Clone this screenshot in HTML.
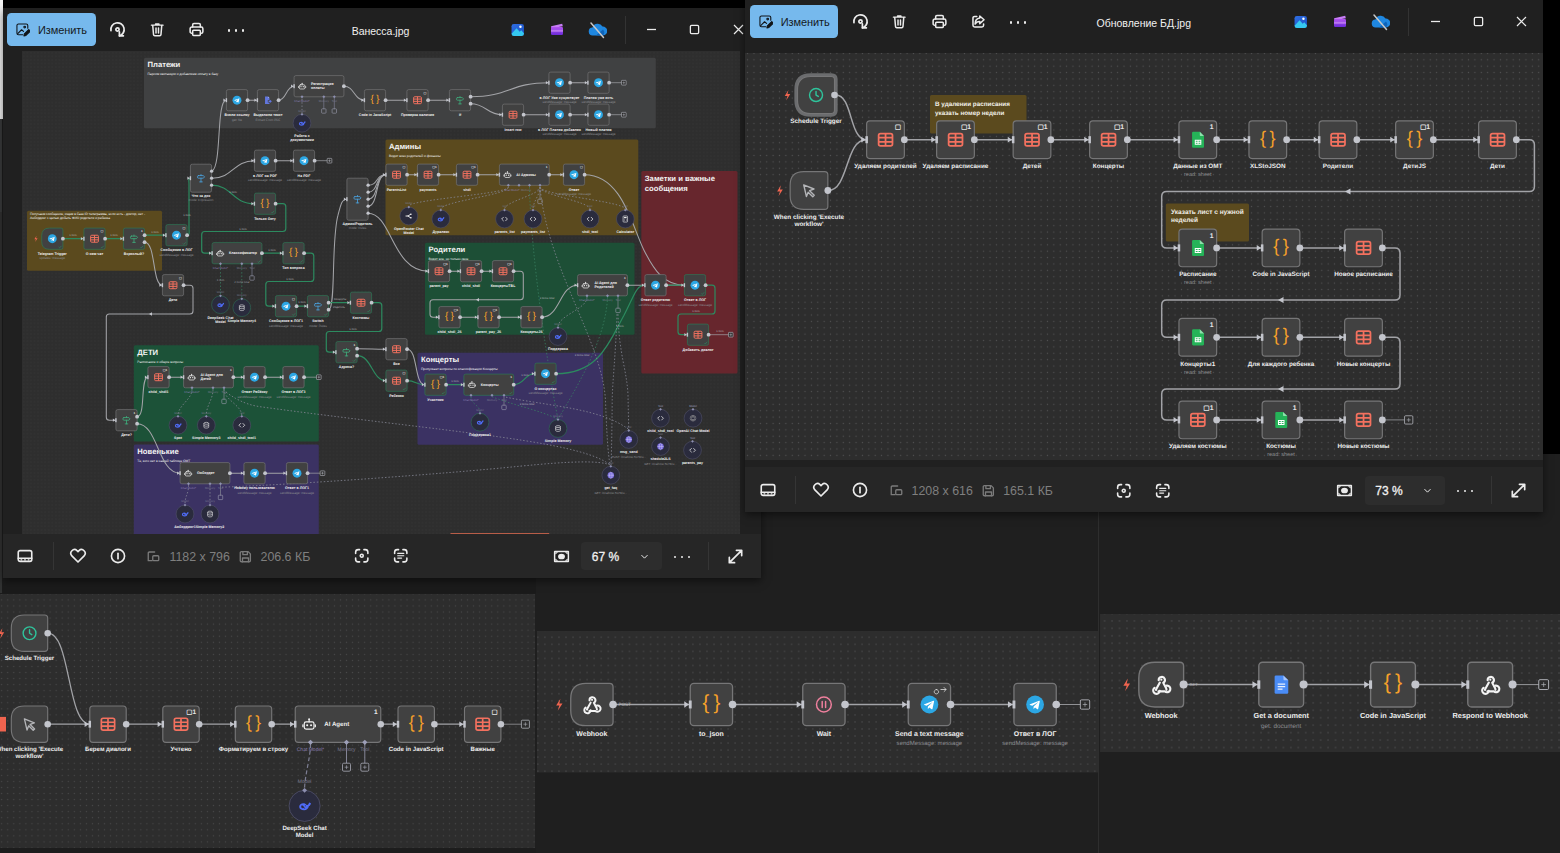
<!DOCTYPE html><html lang="ru"><head><meta charset="utf-8"><title>Фотографии</title><style>
html,body{margin:0;padding:0;background:#1f1f1f}
body{width:1560px;height:853px;position:relative;overflow:hidden;font-family:"Liberation Sans",sans-serif}
div{box-sizing:border-box}
svg text{text-rendering:geometricPrecision}
.abs{position:absolute}
.btn{position:absolute;width:88.500px;height:33px;border-radius:4.500px;background:#76b9ed}
.btn span{position:absolute;left:31px;top:10.800px;font-size:11px;color:#15191d;letter-spacing:-.1px}
.ttl{position:absolute;width:200px;text-align:center;font-size:10.500px;color:#f0f0f0;line-height:16px;white-space:nowrap}
.tb{position:absolute;font-size:12.400px;color:#7f7f7f;line-height:16px;white-space:nowrap}
.zb{position:absolute;height:28.600px;border-radius:4px;background:#2d2d2d}
.zb span{position:absolute;left:10.500px;top:7px;font-size:12px;-webkit-text-stroke:.3px #f0f0f0;color:#f0f0f0;line-height:16px;white-space:nowrap}
</style></head><body><div class="abs" style="left:0;top:578px;width:535.500px;height:16px;background:#1b1b1b"></div><div class="abs" style="left:0;top:848.300px;width:535.500px;height:5px;background:#1d1d1d"></div><svg style="position:absolute;left:0px;top:593.8px;width:535px;height:254.5px;overflow:hidden" viewBox="0 593.8 535 254.5"><defs><pattern id="pb1" x="397.98" y="596.68" width="6.05" height="6.05" patternUnits="userSpaceOnUse"><circle cx="3.02" cy="3.02" r="0.62" fill="#4a4a4b"/></pattern></defs><rect x="0" y="593.8" width="535" height="254.5" fill="#2d2d2d"/><rect x="0" y="593.8" width="535" height="254.5" fill="url(#pb1)"/><path d="M47.8 633 C71.01 633 66.79 724 90 724" fill="none" stroke="#a2a3a7" stroke-width="1.25" stroke-linecap="round" stroke-linejoin="round"/><path d="M47.800 724 H90" fill="none" stroke="#a2a3a7" stroke-width="1.25" stroke-linecap="round" stroke-linejoin="round"/><path d="M126.2 724 H162.8" fill="none" stroke="#a2a3a7" stroke-width="1.25" stroke-linecap="round" stroke-linejoin="round"/><path d="M199.2 724 H235.3" fill="none" stroke="#a2a3a7" stroke-width="1.25" stroke-linecap="round" stroke-linejoin="round"/><path d="M271.7 724 H294.87" fill="none" stroke="#a2a3a7" stroke-width="1.25" stroke-linecap="round" stroke-linejoin="round"/><path d="M381.13 724 H398" fill="none" stroke="#a2a3a7" stroke-width="1.25" stroke-linecap="round" stroke-linejoin="round"/><path d="M434.4 724 H464.5" fill="none" stroke="#a2a3a7" stroke-width="1.25" stroke-linecap="round" stroke-linejoin="round"/><path d="M500.9 724 H521.4" fill="none" stroke="#a2a3a7" stroke-width="0.73" stroke-linecap="round" stroke-linejoin="round"/><rect x="521.4" y="720" width="8.01" height="8.01" rx="1" fill="#2d2d2d" stroke="#b9bbc2" stroke-width="0.73"/><path d="M523.8 724 h3.2 M525.4 722.4 v3.2" fill="none" stroke="#b9bbc2" stroke-width="0.55" stroke-linecap="round" stroke-linejoin="round"/><path d="M310.5 744 C310.5 757.5 304.6 775.5 304.6 789" fill="none" stroke="#7d7e93" stroke-width="1.2" stroke-dasharray="4 2.6" stroke-linecap="butt" stroke-linejoin="round"/><path d="M346.5 744 V763" fill="none" stroke="#8d8fa3" stroke-width="0.9" stroke-linecap="round" stroke-linejoin="round"/><rect x="342.5" y="763" width="8" height="8" rx="1.200" fill="#2d2d2d" stroke="#a9abb8" stroke-width="0.800"/><path d="M345 767 h3 M346.5 765.500 v3" fill="none" stroke="#a9abb8" stroke-width="0.6" stroke-linecap="round" stroke-linejoin="round"/><path d="M364.8 744 V763" fill="none" stroke="#8d8fa3" stroke-width="0.9" stroke-linecap="round" stroke-linejoin="round"/><rect x="360.8" y="763" width="8" height="8" rx="1.200" fill="#2d2d2d" stroke="#a9abb8" stroke-width="0.800"/><path d="M363.3 767 h3 M364.8 765.500 v3" fill="none" stroke="#a9abb8" stroke-width="0.6" stroke-linecap="round" stroke-linejoin="round"/><rect x="0" y="716.700" width="6" height="14.600" fill="#f0644f"/><path d="M24.4 614.8 H44.61 Q47.7 614.8 47.7 617.89 V648.11 Q47.7 651.2 44.61 651.2 H24.4 Q11.3 651.2 11.3 638.1 V627.9 Q11.3 614.8 24.4 614.8 Z" fill="#414141" stroke="#767677" stroke-width="1.13"/><path fill="#f0644f" d="M2.38 628 l-3.64 5.92 h2.73 l-1.36 4.55 l4.09 -6.37 h-2.73 z"/><g transform="translate(21.86 625.36) scale(0.64)"><g fill="none" stroke="#2fc39b" stroke-width="2.200" stroke-linecap="round" stroke-linejoin="round"><circle cx="12" cy="12" r="10"/><path d="M12 6.500V12l3.500 2.200"/></g></g><circle cx="47.7" cy="633" r="3.28" fill="#c3c5cc"/><text x="29.5" y="659.52" text-anchor="middle" font-family='"Liberation Sans", sans-serif' font-size="6.1" font-weight="bold" fill="#ededed">Schedule Trigger</text><path d="M24.4 705.8 H44.61 Q47.7 705.8 47.7 708.89 V739.11 Q47.7 742.2 44.61 742.2 H24.4 Q11.3 742.2 11.3 729.1 V718.9 Q11.3 705.8 24.4 705.8 Z" fill="#414141" stroke="#767677" stroke-width="1.13"/><path fill="#f0644f" d="M2.38 719 l-3.64 5.92 h2.73 l-1.36 4.55 l4.09 -6.37 h-2.73 z"/><g transform="translate(21.86 716.36) scale(0.64)"><path fill="none" stroke="#b4b5b8" stroke-width="2.100" stroke-linejoin="round" stroke-linecap="round" d="M4 3.500l15.500 6.200-6.600 2.600 7 7-2.200 2.200-7-7-2.600 6.600z"/></g><circle cx="47.7" cy="724" r="3.28" fill="#c3c5cc"/><text x="29.5" y="750.52" text-anchor="middle" font-family='"Liberation Sans", sans-serif' font-size="6.1" font-weight="bold" fill="#ededed">When clicking 'Execute</text><text x="29.5" y="757.53" text-anchor="middle" font-family='"Liberation Sans", sans-serif' font-size="6.1" font-weight="bold" fill="#ededed">workflow'</text><rect x="89.8" y="705.8" width="36.4" height="36.4" rx="3.09" fill="#414141" stroke="#767677" stroke-width="1.13"/><g transform="translate(99.59 715.59) scale(0.7)"><g fill="none" stroke="#f4715f" stroke-width="2.4" stroke-linejoin="round"><rect x="2.5" y="3.5" width="19" height="17" rx="2.6"/><path d="M12 3.5v17M2.500 9.200h19M2.500 14.800h19"/></g></g><path fill="#c3c5cc" d="M84.61 721.27 l4.09 2.73 l-4.09 2.73 z"/><rect x="88.57" y="720.59" width="2.46" height="6.83" fill="#c3c5cc"/><circle cx="126.2" cy="724" r="3.28" fill="#c3c5cc"/><text x="108" y="750.52" text-anchor="middle" font-family='"Liberation Sans", sans-serif' font-size="6.1" font-weight="bold" fill="#ededed">Берем диалоги</text><rect x="162.8" y="705.8" width="36.4" height="36.4" rx="3.09" fill="#414141" stroke="#767677" stroke-width="1.13"/><g transform="translate(172.59 715.59) scale(0.7)"><g fill="none" stroke="#f4715f" stroke-width="2.4" stroke-linejoin="round"><rect x="2.5" y="3.5" width="19" height="17" rx="2.6"/><path d="M12 3.5v17M2.500 9.200h19M2.500 14.800h19"/></g></g><path fill="#c3c5cc" d="M157.61 721.27 l4.09 2.73 l-4.09 2.73 z"/><rect x="161.57" y="720.59" width="2.46" height="6.83" fill="#c3c5cc"/><circle cx="199.2" cy="724" r="3.28" fill="#c3c5cc"/><text x="196.11" y="713.99" text-anchor="end" font-family='"Liberation Sans", sans-serif' font-size="6.55" font-weight="bold" fill="#e6e6e6">▢1</text><text x="181" y="750.52" text-anchor="middle" font-family='"Liberation Sans", sans-serif' font-size="6.1" font-weight="bold" fill="#ededed">Учтено</text><rect x="235.3" y="705.8" width="36.4" height="36.4" rx="3.09" fill="#414141" stroke="#767677" stroke-width="1.13"/><g transform="translate(245.86 716.36) scale(0.64)"><text x="14.700" y="17.800" text-anchor="middle" font-family=""Liberation Sans", sans-serif" font-size="27.5" fill="#f5a02a" letter-spacing="5.4">{}</text></g><path fill="#c3c5cc" d="M230.11 721.27 l4.09 2.73 l-4.09 2.73 z"/><rect x="234.07" y="720.59" width="2.46" height="6.83" fill="#c3c5cc"/><circle cx="271.7" cy="724" r="3.28" fill="#c3c5cc"/><text x="253.5" y="750.52" text-anchor="middle" font-family='"Liberation Sans", sans-serif' font-size="6.1" font-weight="bold" fill="#ededed">Форматируем в строку</text><rect x="295.23" y="705.8" width="85.54" height="36.4" rx="3.09" fill="#414141" stroke="#767677" stroke-width="1.13"/><g transform="translate(301.8 716.74) scale(0.61)"><g fill="none" stroke="#f2f2f2" stroke-width="2" stroke-linejoin="round" stroke-linecap="round"><rect x="4" y="8" width="16" height="12" rx="3"/><path d="M12 8V4.500M1.800 13v3M22.200 13v3"/></g><circle cx="12" cy="3.600" r="1.600" fill="#f2f2f2"/><circle cx="8.800" cy="13.500" r="1.700" fill="#f2f2f2"/><circle cx="15.200" cy="13.500" r="1.700" fill="#f2f2f2"/></g><path fill="#c3c5cc" d="M290.04 721.27 l4.09 2.73 l-4.09 2.73 z"/><rect x="294" y="720.59" width="2.46" height="6.83" fill="#c3c5cc"/><circle cx="380.77" cy="724" r="3.28" fill="#c3c5cc"/><text x="377.68" y="713.99" text-anchor="end" font-family='"Liberation Sans", sans-serif' font-size="6.55" font-weight="bold" fill="#e6e6e6">1</text><text x="324.35" y="726.13" font-family='"Liberation Sans", sans-serif' font-size="6.1" font-weight="bold" fill="#ededed">AI Agent</text><rect x="398" y="705.8" width="36.4" height="36.4" rx="3.09" fill="#414141" stroke="#767677" stroke-width="1.13"/><g transform="translate(408.56 716.36) scale(0.64)"><text x="14.700" y="17.800" text-anchor="middle" font-family=""Liberation Sans", sans-serif" font-size="27.5" fill="#f5a02a" letter-spacing="5.4">{}</text></g><path fill="#c3c5cc" d="M392.81 721.27 l4.09 2.73 l-4.09 2.73 z"/><rect x="396.77" y="720.59" width="2.46" height="6.83" fill="#c3c5cc"/><circle cx="434.4" cy="724" r="3.28" fill="#c3c5cc"/><text x="416.2" y="750.52" text-anchor="middle" font-family='"Liberation Sans", sans-serif' font-size="6.1" font-weight="bold" fill="#ededed">Code in JavaScript</text><rect x="464.5" y="705.8" width="36.4" height="36.4" rx="3.09" fill="#414141" stroke="#767677" stroke-width="1.13"/><g transform="translate(474.29 715.59) scale(0.7)"><g fill="none" stroke="#f4715f" stroke-width="2.4" stroke-linejoin="round"><rect x="2.5" y="3.5" width="19" height="17" rx="2.6"/><path d="M12 3.5v17M2.500 9.200h19M2.500 14.800h19"/></g></g><path fill="#c3c5cc" d="M459.31 721.27 l4.09 2.73 l-4.09 2.73 z"/><rect x="463.27" y="720.59" width="2.46" height="6.83" fill="#c3c5cc"/><circle cx="500.9" cy="724" r="3.28" fill="#c3c5cc"/><text x="497.81" y="713.99" text-anchor="end" font-family='"Liberation Sans", sans-serif' font-size="6.55" font-weight="bold" fill="#e6e6e6">▢</text><text x="482.7" y="750.52" text-anchor="middle" font-family='"Liberation Sans", sans-serif' font-size="6.1" font-weight="bold" fill="#ededed">Важные</text><path fill="#9d9fb8" d="M310.5 739.500l2.600 2.600-2.600 2.600-2.600-2.600z"/><text x="310.5" y="750.500" text-anchor="middle" font-family='"Liberation Sans", sans-serif' font-size="5" fill="#8a7fb0">Chat Model*</text><path fill="#9d9fb8" d="M346.5 739.500l2.600 2.600-2.600 2.600-2.600-2.600z"/><text x="346.5" y="750.500" text-anchor="middle" font-family='"Liberation Sans", sans-serif' font-size="5" fill="#7a7b90">Memory</text><path fill="#9d9fb8" d="M364.8 739.500l2.600 2.600-2.600 2.600-2.600-2.600z"/><text x="364.8" y="750.500" text-anchor="middle" font-family='"Liberation Sans", sans-serif' font-size="5" fill="#7a7b90">Tool</text><text x="304.600" y="783" text-anchor="middle" font-family='"Liberation Sans", sans-serif' font-size="5" fill="#7a7b90">Model</text><circle cx="304.6" cy="805.7" r="15.54" fill="#2a2b3d" stroke="#50516a" stroke-width="0.81"/><g transform="translate(297.94 799.04) scale(0.56)"><path fill="#4f6cf7" d="M2.300 13.500C2.300 9.600 5.800 7.300 9.500 7.300c2.600 0 4.700 1.100 6.100 3.100 2 0 3.500-1.500 3.900-3.900.400-.600 1-.600 1.500-.100.600.500 1.500.500 2.100 0 .100 3.100-1.400 5.200-3.600 6.200-.500 4.100-4 7.100-8.500 7.100-5 0-8.800-2.500-8.800-6.200z"/><path fill="#2a2b3d" d="M6.200 11.200c1.700-.300 3.300.600 4.300 2.100.800 1.200 1.700 2.200 2.900 3.100-1.900.300-3.600-.300-4.700-1.800.300 1 .100 1.600-.700 1.600-1.700-.700-2.700-2.500-1.800-5z"/><circle cx="13.200" cy="11.800" r=".9" fill="#2a2b3d"/></g><path fill="#8d8fb0" d="M304.6 787.76 l2.41 2.41 l-2.41 2.41 l-2.41 -2.41 z"/><text x="304.6" y="829.86" text-anchor="middle" font-family='"Liberation Sans", sans-serif' font-size="6.1" font-weight="bold" fill="#ededed">DeepSeek Chat</text><text x="304.6" y="836.88" text-anchor="middle" font-family='"Liberation Sans", sans-serif' font-size="6.1" font-weight="bold" fill="#ededed">Model</text></svg><svg style="position:absolute;left:536.6px;top:631px;width:561.8px;height:141.5px;overflow:hidden" viewBox="536.6 631 561.8 141.5"><defs><pattern id="pb2" x="1062.62" y="633.77" width="7.05" height="7.05" patternUnits="userSpaceOnUse"><circle cx="3.52" cy="3.52" r="0.65" fill="#525253"/></pattern></defs><rect x="536.6" y="631" width="561.8" height="141.5" fill="#2d2d2d"/><rect x="536.6" y="631" width="561.8" height="141.5" fill="url(#pb2)"/><path d="M612.65 704.5 H689.85" fill="none" stroke="#a2a3a7" stroke-width="1.4" stroke-linecap="round" stroke-linejoin="round"/><path d="M732.15 704.5 H802.35" fill="none" stroke="#a2a3a7" stroke-width="1.4" stroke-linecap="round" stroke-linejoin="round"/><path d="M844.65 704.5 H907.85" fill="none" stroke="#a2a3a7" stroke-width="1.4" stroke-linecap="round" stroke-linejoin="round"/><path d="M950.15 704.5 H1013.55" fill="none" stroke="#a2a3a7" stroke-width="1.4" stroke-linecap="round" stroke-linejoin="round"/><path d="M1055.85 704.5 H1079.95" fill="none" stroke="#a2a3a7" stroke-width="0.85" stroke-linecap="round" stroke-linejoin="round"/><rect x="1079.95" y="699.85" width="9.31" height="9.31" rx="1.16" fill="#2d2d2d" stroke="#b9bbc2" stroke-width="0.85"/><path d="M1082.74 704.5 h3.72 M1084.6 702.64 v3.72" fill="none" stroke="#b9bbc2" stroke-width="0.63" stroke-linecap="round" stroke-linejoin="round"/><path d="M585.58 683.35 H609.05 Q612.65 683.35 612.65 686.95 V722.05 Q612.65 725.65 609.05 725.65 H585.58 Q570.35 725.65 570.35 710.42 V698.58 Q570.35 683.35 585.58 683.35 Z" fill="#414141" stroke="#767677" stroke-width="1.31"/><path fill="#f0644f" d="M559.99 698.68 l-4.23 6.87 h3.17 l-1.59 5.29 l4.76 -7.4 h-3.17 z"/><g transform="translate(581.11 694.11) scale(0.87)"><g fill="none" stroke="#f4f4f4" stroke-width="2.300" stroke-linecap="round" stroke-linejoin="round"><path d="M9.200 7.200a3.400 3.400 0 1 1 5 2.800l3.300 6.200"/><path d="M17.800 13.100a3.600 3.600 0 1 1-1.900 6.200h-6.900"/><path d="M10.400 18.600a3.600 3.600 0 1 1-6-2.900l.4-.3"/><path d="M6.300 17.300l4.200-7.500"/></g><circle cx="12.100" cy="6.600" r="1.200" fill="#f4f4f4"/><circle cx="6.400" cy="17.600" r="1.200" fill="#f4f4f4"/><circle cx="17.700" cy="17.600" r="1.200" fill="#f4f4f4"/></g><circle cx="612.65" cy="704.5" r="3.81" fill="#c3c5cc"/><text x="591.5" y="736.43" text-anchor="middle" font-family='"Liberation Sans", sans-serif' font-size="6.95" font-weight="bold" fill="#ededed">Webhook</text><text x="618" y="706.200" font-family='"Liberation Sans", sans-serif' font-size="4.600" fill="#b5b6ba">POST</text><rect x="689.85" y="683.35" width="42.3" height="42.3" rx="3.6" fill="#414141" stroke="#767677" stroke-width="1.31"/><g transform="translate(702.12 695.62) scale(0.74)"><text x="14.700" y="17.800" text-anchor="middle" font-family=""Liberation Sans", sans-serif" font-size="27.5" fill="#f5a02a" letter-spacing="5.4">{}</text></g><path fill="#c3c5cc" d="M683.82 701.33 l4.76 3.17 l-4.76 3.17 z"/><rect x="688.42" y="700.53" width="2.86" height="7.93" fill="#c3c5cc"/><circle cx="732.15" cy="704.5" r="3.81" fill="#c3c5cc"/><text x="711" y="736.43" text-anchor="middle" font-family='"Liberation Sans", sans-serif' font-size="6.95" font-weight="bold" fill="#ededed">to_json</text><rect x="802.35" y="683.35" width="42.3" height="42.3" rx="3.6" fill="#414141" stroke="#767677" stroke-width="1.31"/><g transform="translate(814.62 695.62) scale(0.74)"><g fill="none" stroke="#ee7f9d" stroke-width="2" stroke-linecap="round"><circle cx="12" cy="12" r="10"/><path d="M9.700 8v8M14.300 8v8"/></g></g><path fill="#c3c5cc" d="M796.32 701.33 l4.76 3.17 l-4.76 3.17 z"/><rect x="800.92" y="700.53" width="2.86" height="7.93" fill="#c3c5cc"/><circle cx="844.65" cy="704.5" r="3.81" fill="#c3c5cc"/><text x="823.5" y="736.43" text-anchor="middle" font-family='"Liberation Sans", sans-serif' font-size="6.95" font-weight="bold" fill="#ededed">Wait</text><rect x="907.85" y="683.35" width="42.3" height="42.3" rx="3.6" fill="#414141" stroke="#767677" stroke-width="1.31"/><g transform="translate(920.12 695.62) scale(0.74)"><circle cx="12" cy="12" r="12" fill="#2ca7e4"/><path fill="#fff" d="M5.3 11.8 17.4 7.1c.6-.2 1.1.1.9 1l-2.1 9.7c-.1.7-.6.9-1.2.6l-3.1-2.3-1.5 1.5c-.2.2-.3.3-.6.3l.2-3.2 5.8-5.3c.3-.2-.1-.4-.4-.2l-7.2 4.600-3.100-1c-.7-.2-.7-.7.2-1z"/></g><path fill="#c3c5cc" d="M901.82 701.33 l4.76 3.17 l-4.76 3.17 z"/><rect x="906.42" y="700.53" width="2.86" height="7.93" fill="#c3c5cc"/><circle cx="950.15" cy="704.5" r="3.81" fill="#c3c5cc"/><text x="929" y="736.43" text-anchor="middle" font-family='"Liberation Sans", sans-serif' font-size="6.95" font-weight="bold" fill="#ededed">Send a text message</text><text x="929" y="745.26" text-anchor="middle" font-family='"Liberation Sans", sans-serif' font-size="6.05" fill="#8a8b8f">sendMessage: message</text><path d="M936 689.500a2.200 2.200 0 1 0 0.010 0M940.500 689.500h5M943.700 687.500l2 2-2 2" fill="none" stroke="#e0e0e0" stroke-width="0.8" stroke-linecap="round" stroke-linejoin="round"/><rect x="1013.55" y="683.35" width="42.3" height="42.3" rx="3.6" fill="#414141" stroke="#767677" stroke-width="1.31"/><g transform="translate(1025.82 695.62) scale(0.74)"><circle cx="12" cy="12" r="12" fill="#2ca7e4"/><path fill="#fff" d="M5.3 11.8 17.4 7.1c.6-.2 1.1.1.9 1l-2.1 9.7c-.1.7-.6.9-1.2.6l-3.1-2.3-1.5 1.5c-.2.2-.3.3-.6.3l.2-3.2 5.8-5.3c.3-.2-.1-.4-.4-.2l-7.2 4.600-3.100-1c-.7-.2-.7-.7.2-1z"/></g><path fill="#c3c5cc" d="M1007.52 701.33 l4.76 3.17 l-4.76 3.17 z"/><rect x="1012.12" y="700.53" width="2.86" height="7.93" fill="#c3c5cc"/><circle cx="1055.85" cy="704.5" r="3.81" fill="#c3c5cc"/><text x="1034.7" y="736.43" text-anchor="middle" font-family='"Liberation Sans", sans-serif' font-size="6.95" font-weight="bold" fill="#ededed">Ответ в ЛОГ</text><text x="1034.7" y="745.26" text-anchor="middle" font-family='"Liberation Sans", sans-serif' font-size="6.05" fill="#8a8b8f">sendMessage: message</text></svg><svg style="position:absolute;left:1099.8px;top:613.9px;width:460.2px;height:138.4px;overflow:hidden" viewBox="1099.8 613.9 460.2 138.4"><defs><pattern id="pb3" x="1100.68" y="617.07" width="7.45" height="7.45" patternUnits="userSpaceOnUse"><circle cx="3.73" cy="3.73" r="0.68" fill="#525253"/></pattern></defs><rect x="1099.8" y="613.9" width="460.2" height="138.4" fill="#2d2d2d"/><rect x="1099.8" y="613.9" width="460.2" height="138.4" fill="url(#pb3)"/><path d="M1183.4 684.5 H1258.6" fill="none" stroke="#a2a3a7" stroke-width="1.5" stroke-linecap="round" stroke-linejoin="round"/><path d="M1303.4 684.5 H1370.4" fill="none" stroke="#a2a3a7" stroke-width="1.5" stroke-linecap="round" stroke-linejoin="round"/><path d="M1415.2 684.5 H1467.6" fill="none" stroke="#a2a3a7" stroke-width="1.5" stroke-linecap="round" stroke-linejoin="round"/><path d="M1512.4 684.5 H1538.57" fill="none" stroke="#a2a3a7" stroke-width="0.9" stroke-linecap="round" stroke-linejoin="round"/><rect x="1538.57" y="679.57" width="9.86" height="9.86" rx="1.23" fill="#2d2d2d" stroke="#b9bbc2" stroke-width="0.9"/><path d="M1541.53 684.5 h3.94 M1543.5 682.53 v3.94" fill="none" stroke="#b9bbc2" stroke-width="0.67" stroke-linecap="round" stroke-linejoin="round"/><path d="M1154.73 662.1 H1179.59 Q1183.4 662.1 1183.4 665.91 V703.09 Q1183.4 706.9 1179.59 706.9 H1154.73 Q1138.6 706.9 1138.6 690.77 V678.23 Q1138.6 662.1 1154.73 662.1 Z" fill="#414141" stroke="#767677" stroke-width="1.39"/><path fill="#f0644f" d="M1127.62 678.34 l-4.48 7.28 h3.36 l-1.68 5.6 l5.04 -7.84 h-3.36 z"/><g transform="translate(1149.99 673.49) scale(0.92)"><g fill="none" stroke="#f4f4f4" stroke-width="2.300" stroke-linecap="round" stroke-linejoin="round"><path d="M9.200 7.200a3.400 3.400 0 1 1 5 2.800l3.300 6.200"/><path d="M17.800 13.100a3.600 3.600 0 1 1-1.900 6.200h-6.900"/><path d="M10.400 18.600a3.600 3.600 0 1 1-6-2.900l.4-.3"/><path d="M6.300 17.300l4.200-7.500"/></g><circle cx="12.100" cy="6.600" r="1.200" fill="#f4f4f4"/><circle cx="6.400" cy="17.600" r="1.200" fill="#f4f4f4"/><circle cx="17.700" cy="17.600" r="1.200" fill="#f4f4f4"/></g><circle cx="1183.4" cy="684.5" r="4.03" fill="#c3c5cc"/><text x="1161" y="718.32" text-anchor="middle" font-family='"Liberation Sans", sans-serif' font-size="7.35" font-weight="bold" fill="#ededed">Webhook</text><text x="1189" y="686" font-family='"Liberation Sans", sans-serif' font-size="4.200" fill="#b5b6ba">GET</text><rect x="1258.6" y="662.1" width="44.8" height="44.8" rx="3.81" fill="#414141" stroke="#767677" stroke-width="1.39"/><g transform="translate(1270.46 673.96) scale(0.88)"><path fill="#4a8cf6" d="M6 1.500h8.500L20 7v14a1.500 1.500 0 0 1-1.500 1.500h-12.500A1.500 1.500 0 0 1 4.500 21V3A1.500 1.500 0 0 1 6 1.500z"/><path fill="#a6c5fa" d="M14.500 1.500 20 7h-4.500a1 1 0 0 1-1-1z"/><path stroke="#e8f0fe" stroke-width="1.300" d="M8 11.500h8.500M8 14.300h8.500M8 17.100h5.500"/></g><path fill="#c3c5cc" d="M1252.22 681.14 l5.04 3.36 l-5.04 3.36 z"/><rect x="1257.09" y="680.3" width="3.02" height="8.4" fill="#c3c5cc"/><circle cx="1303.4" cy="684.5" r="4.03" fill="#c3c5cc"/><text x="1281" y="718.32" text-anchor="middle" font-family='"Liberation Sans", sans-serif' font-size="7.35" font-weight="bold" fill="#ededed">Get a document</text><text x="1281" y="727.65" text-anchor="middle" font-family='"Liberation Sans", sans-serif' font-size="6.39" fill="#8a8b8f">get: document</text><rect x="1370.4" y="662.1" width="44.8" height="44.8" rx="3.81" fill="#414141" stroke="#767677" stroke-width="1.39"/><g transform="translate(1383.39 675.09) scale(0.78)"><text x="14.700" y="17.800" text-anchor="middle" font-family=""Liberation Sans", sans-serif" font-size="27.5" fill="#f5a02a" letter-spacing="5.4">{}</text></g><path fill="#c3c5cc" d="M1364.02 681.14 l5.04 3.36 l-5.04 3.36 z"/><rect x="1368.89" y="680.3" width="3.02" height="8.4" fill="#c3c5cc"/><circle cx="1415.2" cy="684.5" r="4.03" fill="#c3c5cc"/><text x="1392.8" y="718.32" text-anchor="middle" font-family='"Liberation Sans", sans-serif' font-size="7.35" font-weight="bold" fill="#ededed">Code in JavaScript</text><rect x="1467.6" y="662.1" width="44.8" height="44.8" rx="3.81" fill="#414141" stroke="#767677" stroke-width="1.39"/><g transform="translate(1478.99 673.49) scale(0.92)"><g fill="none" stroke="#f4f4f4" stroke-width="2.300" stroke-linecap="round" stroke-linejoin="round"><path d="M9.200 7.200a3.400 3.400 0 1 1 5 2.800l3.300 6.200"/><path d="M17.800 13.100a3.600 3.600 0 1 1-1.900 6.200h-6.900"/><path d="M10.400 18.600a3.600 3.600 0 1 1-6-2.900l.4-.3"/><path d="M6.300 17.300l4.200-7.500"/></g><circle cx="12.100" cy="6.600" r="1.200" fill="#f4f4f4"/><circle cx="6.400" cy="17.600" r="1.200" fill="#f4f4f4"/><circle cx="17.700" cy="17.600" r="1.200" fill="#f4f4f4"/></g><path fill="#c3c5cc" d="M1461.22 681.14 l5.04 3.36 l-5.04 3.36 z"/><rect x="1466.09" y="680.3" width="3.02" height="8.4" fill="#c3c5cc"/><circle cx="1512.4" cy="684.5" r="4.03" fill="#c3c5cc"/><text x="1490" y="718.32" text-anchor="middle" font-family='"Liberation Sans", sans-serif' font-size="7.35" font-weight="bold" fill="#ededed">Respond to Webhook</text></svg><div class="abs" style="left:1098px;top:512px;width:1.400px;height:341px;background:#2e2e2e"></div><div class="abs" style="left:0;top:0;width:2.500px;height:119px;background:#f2f2f2"></div><div class="abs" style="left:0;top:119px;width:2.200px;height:93px;background:#3a3b3c"></div><div class="abs" style="left:0;top:212px;width:2.200px;height:381px;background:#313232"></div><div class="abs" style="left:2.500px;top:0;width:743px;height:8px;background:#000"></div><div class="abs" style="left:2.500px;top:8px;width:758px;height:570px;background:#202020;box-shadow:0 3px 8px rgba(0,0,0,.5)"></div><div class="abs" style="left:2.500px;top:534.300px;width:758px;height:43.700px;background:#262626"></div><svg style="position:absolute;left:22px;top:50.8px;width:718px;height:483.5px;overflow:hidden" viewBox="22 50.8 718 483.5"><defs><pattern id="p1" x="22" y="50.8" width="3.56" height="3.56" patternUnits="userSpaceOnUse"><circle cx="1.78" cy="1.78" r="0.6" fill="#363636"/></pattern></defs><rect x="22" y="50.8" width="718" height="483.5" fill="#2e2e2e"/><rect x="22" y="50.8" width="718" height="483.5" fill="url(#p1)"/><rect x="144" y="57.5" width="511.8" height="70.5" rx="1.500" fill="#404142"/><text x="147.5" y="67.31" font-family='"Liberation Sans", sans-serif' font-size="7.7" font-weight="bold" fill="#f3f3f3">Платежи</text><text x="147.5" y="74.85" font-family='"Liberation Sans", sans-serif' font-size="3.3" fill="#f3f3f3">Парсим квитанции и добавляем оплату в базу</text><rect x="27" y="210.5" width="135" height="60" rx="1.500" fill="#5b4a1e"/><text x="30" y="214.65" font-family='"Liberation Sans", sans-serif' font-size="3.25" fill="#f3f3f3">Получаем сообщение, ищем в базе ID телеграмма, если есть - доктор, нет -</text><text x="30" y="218.71" font-family='"Liberation Sans", sans-serif' font-size="3.25" fill="#f3f3f3">Анбординг с целью добыть ФИО родителя и ребенка</text><rect x="385.5" y="139.3" width="252.8" height="95.7" rx="1.500" fill="#5b4a1e"/><text x="389" y="149.11" font-family='"Liberation Sans", sans-serif' font-size="7.7" font-weight="bold" fill="#f3f3f3">Админы</text><text x="389" y="156.65" font-family='"Liberation Sans", sans-serif' font-size="3.3" fill="#f3f3f3">Видят всех родителей и финансы</text><rect x="641.3" y="170.8" width="96.2" height="202.5" rx="1.500" fill="#67262d"/><text x="644.8" y="180.61" font-family='"Liberation Sans", sans-serif' font-size="7.7" font-weight="bold" fill="#f3f3f3">Заметки и важные</text><text x="644.8" y="190.78" font-family='"Liberation Sans", sans-serif' font-size="7.7" font-weight="bold" fill="#f3f3f3">сообщения</text><rect x="425" y="242.5" width="209.5" height="92" rx="1.500" fill="#1d4f36"/><text x="428.5" y="252.31" font-family='"Liberation Sans", sans-serif' font-size="7.7" font-weight="bold" fill="#f3f3f3">Родители</text><text x="428.5" y="259.85" font-family='"Liberation Sans", sans-serif' font-size="3.3" fill="#f3f3f3">Видят все, но только свое</text><rect x="133.8" y="345" width="185" height="96.3" rx="1.500" fill="#1c5238"/><text x="137.3" y="354.81" font-family='"Liberation Sans", sans-serif' font-size="7.7" font-weight="bold" fill="#f3f3f3">ДЕТИ</text><text x="137.3" y="362.35" font-family='"Liberation Sans", sans-serif' font-size="3.3" fill="#f3f3f3">Расписание и общие вопросы</text><rect x="417.5" y="352.5" width="185.5" height="92" rx="1.500" fill="#3b3263"/><text x="421" y="362.31" font-family='"Liberation Sans", sans-serif' font-size="7.7" font-weight="bold" fill="#f3f3f3">Концерты</text><text x="421" y="369.85" font-family='"Liberation Sans", sans-serif' font-size="3.3" fill="#f3f3f3">Пропускает вопросы по классификации Концерты</text><rect x="133.8" y="444.3" width="185" height="92" rx="1.500" fill="#3b3263"/><text x="137.3" y="454.11" font-family='"Liberation Sans", sans-serif' font-size="7.7" font-weight="bold" fill="#f3f3f3">Новенькие</text><text x="137.3" y="461.65" font-family='"Liberation Sans", sans-serif' font-size="3.3" fill="#f3f3f3">Те, кого нет в нашей таблице ОМТ</text><path d="M212 171 C222 165 216 100 226.400 100" fill="none" stroke="#a2a3a7" stroke-width="1.05" stroke-linecap="round" stroke-linejoin="round"/><path d="M247.6 100 H257.4" fill="none" stroke="#a2a3a7" stroke-width="1.05" stroke-linecap="round" stroke-linejoin="round"/><path d="M278.6 100 C286.25 100 286.25 86 293.9 86" fill="none" stroke="#a2a3a7" stroke-width="1.05" stroke-linecap="round" stroke-linejoin="round"/><path d="M344.1 86 C354.25 86 354.25 100 364.4 100" fill="none" stroke="#a2a3a7" stroke-width="1.05" stroke-linecap="round" stroke-linejoin="round"/><path d="M385.6 100 H406.9" fill="none" stroke="#a2a3a7" stroke-width="1.05" stroke-linecap="round" stroke-linejoin="round"/><path d="M428.1 100 H449.4" fill="none" stroke="#a2a3a7" stroke-width="1.05" stroke-linecap="round" stroke-linejoin="round"/><path d="M470.6 96.5 C509.75 96.5 509.75 82.5 548.9 82.5" fill="none" stroke="#a2a3a7" stroke-width="1.05" stroke-linecap="round" stroke-linejoin="round"/><path d="M470.6 103.5 C486.5 103.5 486.5 114.5 502.4 114.5" fill="none" stroke="#a2a3a7" stroke-width="1.05" stroke-linecap="round" stroke-linejoin="round"/><path d="M523.6 114.5 H548.9" fill="none" stroke="#a2a3a7" stroke-width="1.05" stroke-linecap="round" stroke-linejoin="round"/><path d="M570.1 114.5 H587.9" fill="none" stroke="#a2a3a7" stroke-width="1.05" stroke-linecap="round" stroke-linejoin="round"/><path d="M570.1 82.5 H587.9" fill="none" stroke="#a2a3a7" stroke-width="1.05" stroke-linecap="round" stroke-linejoin="round"/><path d="M609.1 82.5 H621.47" fill="none" stroke="#a2a3a7" stroke-width="0.7" stroke-linecap="round" stroke-linejoin="round"/><rect x="621.47" y="80.17" width="4.66" height="4.66" rx="0.58" fill="#2d2d2d" stroke="#b9bbc2" stroke-width="0.6"/><path d="M622.87 82.5 h1.87 M623.8 81.57 v1.87" fill="none" stroke="#b9bbc2" stroke-width="0.5" stroke-linecap="round" stroke-linejoin="round"/><path d="M609.1 114.5 H621.47" fill="none" stroke="#a2a3a7" stroke-width="0.7" stroke-linecap="round" stroke-linejoin="round"/><rect x="621.47" y="112.17" width="4.66" height="4.66" rx="0.58" fill="#2d2d2d" stroke="#b9bbc2" stroke-width="0.6"/><path d="M622.87 114.5 h1.87 M623.8 113.57 v1.87" fill="none" stroke="#b9bbc2" stroke-width="0.5" stroke-linecap="round" stroke-linejoin="round"/><path d="M212 178 C233.2 178 233.2 160.5 254.4 160.5" fill="none" stroke="#a2a3a7" stroke-width="1.05" stroke-linecap="round" stroke-linejoin="round"/><path d="M275.6 160.5 H293.4" fill="none" stroke="#a2a3a7" stroke-width="1.05" stroke-linecap="round" stroke-linejoin="round"/><path d="M314.6 160.5 H327.17" fill="none" stroke="#a2a3a7" stroke-width="0.7" stroke-linecap="round" stroke-linejoin="round"/><rect x="327.17" y="158.17" width="4.66" height="4.66" rx="0.58" fill="#2d2d2d" stroke="#b9bbc2" stroke-width="0.6"/><path d="M328.57 160.5 h1.87 M329.5 159.57 v1.87" fill="none" stroke="#b9bbc2" stroke-width="0.5" stroke-linecap="round" stroke-linejoin="round"/><path d="M328.600 309.500 C336 309.500 331 240 338 215 C341 203 342 199 346.900 199" fill="none" stroke="#a2a3a7" stroke-width="1.05" stroke-linecap="round" stroke-linejoin="round"/><path d="M368 185 C378.74 185 375.16 174.5 385.9 174.5" fill="none" stroke="#a2a3a7" stroke-width="1.05" stroke-linecap="round" stroke-linejoin="round"/><path d="M368 192 C378.74 192 375.16 174.5 385.9 174.5" fill="none" stroke="#a2a3a7" stroke-width="1.05" stroke-linecap="round" stroke-linejoin="round"/><path d="M368 199 C378.74 199 375.16 174.5 385.9 174.5" fill="none" stroke="#a2a3a7" stroke-width="1.05" stroke-linecap="round" stroke-linejoin="round"/><path d="M368 206 C378.74 206 375.16 174.5 385.9 174.5" fill="none" stroke="#a2a3a7" stroke-width="1.05" stroke-linecap="round" stroke-linejoin="round"/><path d="M368 213 C392 213 392 271 428.400 271" fill="none" stroke="#a2a3a7" stroke-width="1.05" stroke-linecap="round" stroke-linejoin="round"/><path d="M407.1 174.5 H417.4" fill="none" stroke="#a2a3a7" stroke-width="1.05" stroke-linecap="round" stroke-linejoin="round"/><path d="M438.6 174.5 H456.4" fill="none" stroke="#a2a3a7" stroke-width="1.05" stroke-linecap="round" stroke-linejoin="round"/><path d="M477.6 174.5 H499.2" fill="none" stroke="#a2a3a7" stroke-width="1.05" stroke-linecap="round" stroke-linejoin="round"/><path d="M549.3 174.5 H563.4" fill="none" stroke="#a2a3a7" stroke-width="1.05" stroke-linecap="round" stroke-linejoin="round"/><path d="M584.600 174.500 C622 174.500 632 226 644 250 C654 270 664 285 684.400 285" fill="none" stroke="#a2a3a7" stroke-width="1.05" stroke-linecap="round" stroke-linejoin="round"/><path d="M144.600 242 C156 242 152 285 162.400 285" fill="none" stroke="#a2a3a7" stroke-width="1.05" stroke-linecap="round" stroke-linejoin="round"/><path d="M183.6 285 H190 Q193 285 193 288 V310.8 Q193 313.8 190 313.8 H109.3 Q106.3 313.8 106.3 316.8 V417 Q106.3 420 109.3 420 H115.9" fill="none" stroke="#a2a3a7" stroke-width="1.05" stroke-linecap="round" stroke-linejoin="round"/><path fill="#c3c5cc" d="M149 313.800l3-1.700v3.400z"/><path d="M137.100 416.500 C146 416.500 140 377 147.900 377" fill="none" stroke="#a2a3a7" stroke-width="1.05" stroke-linecap="round" stroke-linejoin="round"/><path d="M137.100 423.500 C158 423.500 158 473 179.900 473" fill="none" stroke="#a2a3a7" stroke-width="1.05" stroke-linecap="round" stroke-linejoin="round"/><path d="M169.1 377 H183.4" fill="none" stroke="#a2a3a7" stroke-width="1.05" stroke-linecap="round" stroke-linejoin="round"/><path d="M233.6 377 H243.9" fill="none" stroke="#a2a3a7" stroke-width="1.05" stroke-linecap="round" stroke-linejoin="round"/><path d="M265.1 377 H282.9" fill="none" stroke="#a2a3a7" stroke-width="1.05" stroke-linecap="round" stroke-linejoin="round"/><path d="M304.1 377 H316.47" fill="none" stroke="#a2a3a7" stroke-width="0.7" stroke-linecap="round" stroke-linejoin="round"/><rect x="316.47" y="374.67" width="4.66" height="4.66" rx="0.58" fill="#2d2d2d" stroke="#b9bbc2" stroke-width="0.6"/><path d="M317.87 377 h1.87 M318.8 376.07 v1.87" fill="none" stroke="#b9bbc2" stroke-width="0.5" stroke-linecap="round" stroke-linejoin="round"/><path d="M230.1 473 H243.9" fill="none" stroke="#a2a3a7" stroke-width="1.05" stroke-linecap="round" stroke-linejoin="round"/><path d="M265.1 473 H286.4" fill="none" stroke="#a2a3a7" stroke-width="1.05" stroke-linecap="round" stroke-linejoin="round"/><path d="M307.6 473 H320.17" fill="none" stroke="#a2a3a7" stroke-width="0.7" stroke-linecap="round" stroke-linejoin="round"/><rect x="320.17" y="470.67" width="4.66" height="4.66" rx="0.58" fill="#2d2d2d" stroke="#b9bbc2" stroke-width="0.6"/><path d="M321.57 473 h1.87 M322.5 472.07 v1.87" fill="none" stroke="#b9bbc2" stroke-width="0.5" stroke-linecap="round" stroke-linejoin="round"/><path d="M449.6 271 H460.4" fill="none" stroke="#a2a3a7" stroke-width="1.05" stroke-linecap="round" stroke-linejoin="round"/><path d="M481.6 271 H492.4" fill="none" stroke="#a2a3a7" stroke-width="1.05" stroke-linecap="round" stroke-linejoin="round"/><path d="M513.6 271 H520.3 Q523.3 271 523.3 274 V296.5 Q523.3 299.5 520.3 299.5 H433 Q430 299.5 430 302.5 V314 Q430 317 433 317 H438.9" fill="none" stroke="#a2a3a7" stroke-width="1.05" stroke-linecap="round" stroke-linejoin="round"/><path fill="#c3c5cc" d="M476 299.500l3-1.700v3.400z"/><path d="M460.1 317 H477.9" fill="none" stroke="#a2a3a7" stroke-width="1.05" stroke-linecap="round" stroke-linejoin="round"/><path d="M499.1 317 H520.9" fill="none" stroke="#a2a3a7" stroke-width="1.05" stroke-linecap="round" stroke-linejoin="round"/><path d="M542.1 317 C559.75 317 559.75 285 577.4 285" fill="none" stroke="#a2a3a7" stroke-width="1.05" stroke-linecap="round" stroke-linejoin="round"/><path d="M627.6 285 H644.9" fill="none" stroke="#a2a3a7" stroke-width="1.05" stroke-linecap="round" stroke-linejoin="round"/><path d="M666.1 285 H684.4" fill="none" stroke="#a2a3a7" stroke-width="1.05" stroke-linecap="round" stroke-linejoin="round"/><path d="M407.100 349 C418 349 414 384.500 424.900 384.500" fill="none" stroke="#a2a3a7" stroke-width="1.05" stroke-linecap="round" stroke-linejoin="round"/><path d="M357.100 348.500 C372 348.500 372 349 385.900 349" fill="none" stroke="#a2a3a7" stroke-width="1.05" stroke-linecap="round" stroke-linejoin="round"/><path d="M62.6 238.5 H83.9" fill="none" stroke="#2c8a5f" stroke-width="1.2" stroke-linecap="round" stroke-linejoin="round"/><path d="M105.1 238.5 H123.4" fill="none" stroke="#2c8a5f" stroke-width="1.2" stroke-linecap="round" stroke-linejoin="round"/><path d="M144.600 235 H165.900" fill="none" stroke="#2c8a5f" stroke-width="1.2" stroke-linecap="round" stroke-linejoin="round"/><path d="M187.100 235 C190 235 189 232 189 228 V184 C189 180 188 178 190.400 178" fill="none" stroke="#2c8a5f" stroke-width="1.2" stroke-linecap="round" stroke-linejoin="round"/><path d="M212 185 C232 185 232 203.500 254.400 203.500" fill="none" stroke="#2c8a5f" stroke-width="1.2" stroke-linecap="round" stroke-linejoin="round"/><path d="M275.6 203.5 H282.8 Q285.8 203.5 285.8 206.5 V228.3 Q285.8 231.3 282.8 231.3 H204.7 Q201.7 231.3 201.7 234.3 V250 Q201.7 253 204.7 253 H211.9" fill="none" stroke="#2c8a5f" stroke-width="1.2" stroke-linecap="round" stroke-linejoin="round"/><path d="M262.1 253 H282.9" fill="none" stroke="#2c8a5f" stroke-width="1.2" stroke-linecap="round" stroke-linejoin="round"/><path d="M304.1 253 H310.8 Q313.8 253 313.8 256 V278.3 Q313.8 281.3 310.8 281.3 H268.8 Q265.8 281.3 265.8 284.3 V303 Q265.8 306 268.8 306 H275.4" fill="none" stroke="#2c8a5f" stroke-width="1.2" stroke-linecap="round" stroke-linejoin="round"/><path d="M296.6 306 H307.4" fill="none" stroke="#2c8a5f" stroke-width="1.2" stroke-linecap="round" stroke-linejoin="round"/><path d="M328.600 302.500 H350.400" fill="none" stroke="#2c8a5f" stroke-width="1.2" stroke-linecap="round" stroke-linejoin="round"/><path d="M371.6 302.5 H378.8 Q381.8 302.5 381.8 305.5 V328.3 Q381.8 331.3 378.8 331.3 H329.3 Q326.3 331.3 326.3 334.3 V349 Q326.3 352 329.3 352 H335.9" fill="none" stroke="#2c8a5f" stroke-width="1.2" stroke-linecap="round" stroke-linejoin="round"/><path d="M357.100 355.500 C372 355.500 372 380.500 385.900 380.500" fill="none" stroke="#2c8a5f" stroke-width="1.2" stroke-linecap="round" stroke-linejoin="round"/><path d="M407.100 380.500 C416 380.500 416 384.500 424.900 384.500" fill="none" stroke="#2c8a5f" stroke-width="1.2" stroke-linecap="round" stroke-linejoin="round"/><path d="M446.1 384.5 H463.6" fill="none" stroke="#2c8a5f" stroke-width="1.2" stroke-linecap="round" stroke-linejoin="round"/><path d="M513.9 384.5 C524.4 384.5 524.4 373.5 534.9 373.5" fill="none" stroke="#2c8a5f" stroke-width="1.2" stroke-linecap="round" stroke-linejoin="round"/><path d="M556.100 373.500 C600 373.500 610 340 624 315 C634 296 636 285 644.900 285" fill="none" stroke="#2c8a5f" stroke-width="1.2" stroke-linecap="round" stroke-linejoin="round"/><path d="M666.1 285 H684.4" fill="none" stroke="#2c8a5f" stroke-width="1.2" stroke-linecap="round" stroke-linejoin="round"/><path d="M705.6 285 H712 Q715 285 715 288 V310.8 Q715 313.8 712 313.8 H681 Q678 313.8 678 316.8 V331.5 Q678 334.5 681 334.5 H687.4" fill="none" stroke="#2c8a5f" stroke-width="1.2" stroke-linecap="round" stroke-linejoin="round"/><path d="M708.6 334.5 H728.47" fill="none" stroke="#a2a3a7" stroke-width="0.7" stroke-linecap="round" stroke-linejoin="round"/><rect x="728.47" y="332.17" width="4.66" height="4.66" rx="0.58" fill="#2d2d2d" stroke="#b9bbc2" stroke-width="0.6"/><path d="M729.87 334.5 h1.87 M730.8 333.57 v1.87" fill="none" stroke="#b9bbc2" stroke-width="0.5" stroke-linecap="round" stroke-linejoin="round"/><path d="M302 98.5 C302 105.75 302 105.75 302 113" fill="none" stroke="#858694" stroke-width="0.8" stroke-dasharray="1.5 1.9" stroke-linecap="butt" stroke-linejoin="round"/><path d="M508.3 187 C508.3 193.65 408.8 199.35 408.8 206" fill="none" stroke="#858694" stroke-width="0.8" stroke-dasharray="1.5 1.9" stroke-linecap="butt" stroke-linejoin="round"/><path d="M508.3 187 C508.3 194.7 440.8 201.3 440.8 209" fill="none" stroke="#858694" stroke-width="0.8" stroke-dasharray="1.5 1.9" stroke-linecap="butt" stroke-linejoin="round"/><path d="M540 187 C540 194.7 504.5 201.3 504.5 209" fill="none" stroke="#858694" stroke-width="0.8" stroke-dasharray="1.5 1.9" stroke-linecap="butt" stroke-linejoin="round"/><path d="M540 187 C540 194.7 533 201.3 533 209" fill="none" stroke="#858694" stroke-width="0.8" stroke-dasharray="1.5 1.9" stroke-linecap="butt" stroke-linejoin="round"/><path d="M540 187 C540 194.7 590 201.3 590 209" fill="none" stroke="#858694" stroke-width="0.8" stroke-dasharray="1.5 1.9" stroke-linecap="butt" stroke-linejoin="round"/><path d="M540 187 C540 194.7 625.3 201.3 625.3 209" fill="none" stroke="#858694" stroke-width="0.8" stroke-dasharray="1.5 1.9" stroke-linecap="butt" stroke-linejoin="round"/><path d="M540 190 V199" fill="none" stroke="#858694" stroke-width="0.7" stroke-linecap="round" stroke-linejoin="round"/><rect x="537.800" y="199" width="4.400" height="4.400" rx="0.700" fill="none" stroke="#9c9eb0" stroke-width="0.600"/><path d="M529.500 187 C531 260 550 380 558 419" fill="none" stroke="#3a8163" stroke-width="0.75" stroke-dasharray="1.5 1.9" stroke-linecap="butt" stroke-linejoin="round"/><path d="M540 187 C548 270 602 340 605.500 400 C606.500 430 608 455 610.200 465" fill="none" stroke="#858694" stroke-width="0.8" stroke-dasharray="1.5 1.9" stroke-linecap="butt" stroke-linejoin="round"/><path d="M220.5 265 C220.5 280 220.5 280 220.5 295" fill="none" stroke="#3a8163" stroke-width="0.75" stroke-dasharray="1.5 1.9" stroke-linecap="butt" stroke-linejoin="round"/><path d="M241.8 265 C241.8 281.5 241.8 281.5 241.8 298" fill="none" stroke="#3a8163" stroke-width="0.75" stroke-dasharray="1.5 1.9" stroke-linecap="butt" stroke-linejoin="round"/><path d="M587 297 C587 309 558 315 558 327" fill="none" stroke="#858694" stroke-width="0.8" stroke-dasharray="1.5 1.9" stroke-linecap="butt" stroke-linejoin="round"/><path d="M607.500 297 C606 340 575 390 558 419" fill="none" stroke="#3a8163" stroke-width="0.75" stroke-dasharray="1.5 1.9" stroke-linecap="butt" stroke-linejoin="round"/><path d="M618 297 V308" fill="none" stroke="#858694" stroke-width="0.7" stroke-linecap="round" stroke-linejoin="round"/><rect x="615.800" y="308" width="4.400" height="4.400" rx="0.700" fill="none" stroke="#9c9eb0" stroke-width="0.600"/><path d="M618 314 C619 355 627 370 628 395 L628.700 430" fill="none" stroke="#858694" stroke-width="0.8" stroke-dasharray="1.5 1.9" stroke-linecap="butt" stroke-linejoin="round"/><path d="M617 314 C616 350 612.500 380 612.200 400 C612 430 611.500 455 611 465" fill="none" stroke="#858694" stroke-width="0.8" stroke-dasharray="1.5 1.9" stroke-linecap="butt" stroke-linejoin="round"/><path d="M471 396.5 C471 404.5 480 404.5 480 412.5" fill="none" stroke="#3a8163" stroke-width="0.75" stroke-dasharray="1.5 1.9" stroke-linecap="butt" stroke-linejoin="round"/><path d="M492 396.500 C510 404 540 410 558 419" fill="none" stroke="#3a8163" stroke-width="0.75" stroke-dasharray="1.5 1.9" stroke-linecap="butt" stroke-linejoin="round"/><path d="M504 396.500 V405" fill="none" stroke="#858694" stroke-width="0.7" stroke-linecap="round" stroke-linejoin="round"/><rect x="501.800" y="405" width="4.400" height="4.400" rx="0.700" fill="none" stroke="#9c9eb0" stroke-width="0.600"/><path d="M506 397 C550 406 600 408 628.500 429" fill="none" stroke="#858694" stroke-width="0.8" stroke-dasharray="1.5 1.9" stroke-linecap="butt" stroke-linejoin="round"/><path d="M192 389 C192 399.6 178 404.9 178 415.5" fill="none" stroke="#858694" stroke-width="0.8" stroke-dasharray="1.5 1.9" stroke-linecap="butt" stroke-linejoin="round"/><path d="M213 389 C213 399.6 206.3 404.9 206.3 415.5" fill="none" stroke="#858694" stroke-width="0.8" stroke-dasharray="1.5 1.9" stroke-linecap="butt" stroke-linejoin="round"/><path d="M224 389 C224 399.6 241.8 404.9 241.8 415.5" fill="none" stroke="#858694" stroke-width="0.8" stroke-dasharray="1.5 1.9" stroke-linecap="butt" stroke-linejoin="round"/><path d="M224 389 V399" fill="none" stroke="#858694" stroke-width="0.7" stroke-linecap="round" stroke-linejoin="round"/><rect x="221.800" y="399" width="4.400" height="4.400" rx="0.700" fill="none" stroke="#9c9eb0" stroke-width="0.600"/><path d="M226 392 C240 402 250 405 260 406.500 C330 416 400 424 440 429 C520 439 590 448 610.500 465" fill="none" stroke="#858694" stroke-width="0.8" stroke-dasharray="1.5 1.9" stroke-linecap="butt" stroke-linejoin="round"/><path d="M188.5 485 C188.5 494.75 185 494.75 185 504.5" fill="none" stroke="#858694" stroke-width="0.8" stroke-dasharray="1.5 1.9" stroke-linecap="butt" stroke-linejoin="round"/><path d="M210 485 C210 494.75 210 494.75 210 504.5" fill="none" stroke="#858694" stroke-width="0.8" stroke-dasharray="1.5 1.9" stroke-linecap="butt" stroke-linejoin="round"/><path d="M220.500 485 V495" fill="none" stroke="#858694" stroke-width="0.7" stroke-linecap="round" stroke-linejoin="round"/><rect x="218.300" y="495" width="4.400" height="4.400" rx="0.700" fill="none" stroke="#9c9eb0" stroke-width="0.600"/><path d="M222 487 C300 484 440 474 520 466 C570 461 600 460 610.700 465" fill="none" stroke="#858694" stroke-width="0.8" stroke-dasharray="1.5 1.9" stroke-linecap="butt" stroke-linejoin="round"/><rect x="190.4" y="164" width="21.2" height="28" rx="1.800" fill="#414141" stroke="#767677" stroke-width="0.700"/><g transform="translate(196.55 173.55) scale(0.37)"><g fill="none" stroke="#4aa3e0" stroke-width="2.200" stroke-linejoin="round" stroke-linecap="round"><path d="M12 2v3M12 12v10M8.500 22h7"/><path d="M5 5h13.500l3 3.500-3 3.500H5a2.500 2.500 0 0 1-2.500-2.500v-2A2.500 2.500 0 0 1 5 5z"/></g></g><path fill="#c3c5cc" d="M187.38 176.41 l2.38 1.59 l-2.38 1.59 z"/><rect x="189.68" y="176.01" width="1.43" height="3.97" fill="#c3c5cc"/><circle cx="211.6" cy="171" r="1.650" fill="#c3c5cc"/><circle cx="211.6" cy="178" r="1.650" fill="#c3c5cc"/><circle cx="211.6" cy="185" r="1.650" fill="#c3c5cc"/><text x="201" y="197.2" text-anchor="middle" font-family='"Liberation Sans", sans-serif' font-size="3.6" font-weight="bold" fill="#ededed">Что за док</text><text x="201" y="201.2" text-anchor="middle" font-family='"Liberation Sans", sans-serif' font-size="3.1" fill="#8a8b8f">mode: Expression</text><rect x="346.9" y="178" width="21.2" height="42" rx="1.800" fill="#414141" stroke="#767677" stroke-width="0.700"/><g transform="translate(353.05 194.55) scale(0.37)"><g fill="none" stroke="#4aa3e0" stroke-width="2.200" stroke-linejoin="round" stroke-linecap="round"><path d="M12 2v3M12 12v10M8.500 22h7"/><path d="M5 5h13.500l3 3.500-3 3.500H5a2.500 2.500 0 0 1-2.500-2.500v-2A2.500 2.500 0 0 1 5 5z"/></g></g><path fill="#c3c5cc" d="M343.88 197.41 l2.38 1.59 l-2.38 1.59 z"/><rect x="346.18" y="197.01" width="1.43" height="3.97" fill="#c3c5cc"/><circle cx="368.1" cy="185" r="1.650" fill="#c3c5cc"/><circle cx="368.1" cy="192" r="1.650" fill="#c3c5cc"/><circle cx="368.1" cy="199" r="1.650" fill="#c3c5cc"/><circle cx="368.1" cy="206" r="1.650" fill="#c3c5cc"/><circle cx="368.1" cy="213" r="1.650" fill="#c3c5cc"/><text x="357.5" y="225.2" text-anchor="middle" font-family='"Liberation Sans", sans-serif' font-size="3.6" font-weight="bold" fill="#ededed">Админ/Родитель</text><text x="357.5" y="229.2" text-anchor="middle" font-family='"Liberation Sans", sans-serif' font-size="3.1" fill="#8a8b8f">mode: Rules</text><rect x="226.4" y="89.4" width="21.2" height="21.2" rx="1.8" fill="#414141" stroke="#767677" stroke-width="0.66"/><g transform="translate(232.55 95.55) scale(0.37)"><circle cx="12" cy="12" r="12" fill="#2ca7e4"/><path fill="#fff" d="M5.3 11.8 17.4 7.1c.6-.2 1.1.1.9 1l-2.1 9.7c-.1.7-.6.9-1.2.6l-3.1-2.3-1.5 1.5c-.2.2-.3.3-.6.3l.2-3.2 5.8-5.3c.3-.2-.1-.4-.4-.2l-7.2 4.600-3.100-1c-.7-.2-.7-.7.2-1z"/></g><path fill="#c3c5cc" d="M223.38 98.41 l2.38 1.59 l-2.38 1.59 z"/><rect x="225.68" y="98.01" width="1.43" height="3.97" fill="#c3c5cc"/><circle cx="247.6" cy="100" r="1.91" fill="#c3c5cc"/><text x="237" y="116.03" text-anchor="middle" font-family='"Liberation Sans", sans-serif' font-size="3.6" font-weight="bold" fill="#ededed">Взяли ссылку</text><text x="237" y="120.6" text-anchor="middle" font-family='"Liberation Sans", sans-serif' font-size="3.13" fill="#8a8b8f">get: file</text><rect x="257.4" y="89.4" width="21.2" height="21.2" rx="1.8" fill="#414141" stroke="#767677" stroke-width="0.66"/><g transform="translate(263.55 95.55) scale(0.37)"><path fill="#6276dd" d="M4 2h8l4 4v5.500h-4.500v7H16V22H4z"/><path fill="#aab5f0" d="M12 2l4 4h-3a1 1 0 0 1-1-1z"/><path fill="#6276dd" d="M13.500 13h4v-2.500L22.500 15l-5 4.500V17h-4z"/></g><path fill="#c3c5cc" d="M254.38 98.41 l2.38 1.59 l-2.38 1.59 z"/><rect x="256.68" y="98.01" width="1.43" height="3.97" fill="#c3c5cc"/><circle cx="278.6" cy="100" r="1.91" fill="#c3c5cc"/><text x="268" y="116.03" text-anchor="middle" font-family='"Liberation Sans", sans-serif' font-size="3.6" font-weight="bold" fill="#ededed">Выделили текст</text><text x="268" y="120.6" text-anchor="middle" font-family='"Liberation Sans", sans-serif' font-size="3.13" fill="#8a8b8f">Extract From PDF</text><rect x="294.09" y="75.4" width="49.82" height="21.2" rx="1.8" fill="#414141" stroke="#767677" stroke-width="0.66"/><g transform="translate(297.92 81.77) scale(0.35)"><g fill="none" stroke="#f2f2f2" stroke-width="2" stroke-linejoin="round" stroke-linecap="round"><rect x="4" y="8" width="16" height="12" rx="3"/><path d="M12 8V4.500M1.800 13v3M22.200 13v3"/></g><circle cx="12" cy="3.600" r="1.600" fill="#f2f2f2"/><circle cx="8.800" cy="13.500" r="1.700" fill="#f2f2f2"/><circle cx="15.200" cy="13.500" r="1.700" fill="#f2f2f2"/></g><path fill="#c3c5cc" d="M291.07 84.41 l2.38 1.59 l-2.38 1.59 z"/><rect x="293.37" y="84.01" width="1.43" height="3.97" fill="#c3c5cc"/><circle cx="343.91" cy="86" r="1.91" fill="#c3c5cc"/><text x="311.05" y="85.28" font-family='"Liberation Sans", sans-serif' font-size="3.6" font-weight="bold" fill="#ededed">Регистрация</text><text x="311.05" y="89.24" font-family='"Liberation Sans", sans-serif' font-size="3.6" font-weight="bold" fill="#ededed">оплаты</text><path fill="#8d8fb0" d="M302 95.1l1.500 1.500-1.500 1.500-1.500-1.500z"/><path fill="#8d8fb0" d="M323.8 95.1l1.500 1.500-1.500 1.500-1.500-1.500z"/><path fill="#8d8fb0" d="M334.3 95.1l1.500 1.500-1.500 1.500-1.500-1.500z"/><path d="M323.8 98.1 V108.6" fill="none" stroke="#7d7e93" stroke-width="0.7" stroke-linecap="round" stroke-linejoin="round"/><rect x="321.6" y="108.6" width="4.400" height="4.400" rx="0.700" fill="none" stroke="#9c9eb0" stroke-width="0.600"/><path d="M334.3 98.1 V108.6" fill="none" stroke="#7d7e93" stroke-width="0.7" stroke-linecap="round" stroke-linejoin="round"/><rect x="332.1" y="108.6" width="4.400" height="4.400" rx="0.700" fill="none" stroke="#9c9eb0" stroke-width="0.600"/><text x="302" y="102" text-anchor="middle" font-family='"Liberation Sans", sans-serif' font-size="2.8" fill="#8a7fb0">Chat Model*</text><text x="323.8" y="102" text-anchor="middle" font-family='"Liberation Sans", sans-serif' font-size="2.8" fill="#7a7b90">Memory</text><text x="334.3" y="102" text-anchor="middle" font-family='"Liberation Sans", sans-serif' font-size="2.8" fill="#7a7b90">Tool</text><rect x="364.4" y="89.4" width="21.2" height="21.2" rx="1.8" fill="#414141" stroke="#767677" stroke-width="0.66"/><g transform="translate(370.55 95.55) scale(0.37)"><text x="14.700" y="17.800" text-anchor="middle" font-family=""Liberation Sans", sans-serif" font-size="27.5" fill="#f5a02a" letter-spacing="5.4">{}</text></g><path fill="#c3c5cc" d="M361.38 98.41 l2.38 1.59 l-2.38 1.59 z"/><rect x="363.68" y="98.01" width="1.43" height="3.97" fill="#c3c5cc"/><circle cx="385.6" cy="100" r="1.91" fill="#c3c5cc"/><text x="375" y="116.03" text-anchor="middle" font-family='"Liberation Sans", sans-serif' font-size="3.6" font-weight="bold" fill="#ededed">Code in JavaScript</text><rect x="406.9" y="89.4" width="21.2" height="21.2" rx="1.8" fill="#414141" stroke="#767677" stroke-width="0.66"/><g transform="translate(412.6 95.1) scale(0.41)"><g fill="none" stroke="#f4715f" stroke-width="2.4" stroke-linejoin="round"><rect x="2.5" y="3.5" width="19" height="17" rx="2.6"/><path d="M12 3.5v17M2.500 9.200h19M2.500 14.800h19"/></g></g><path fill="#c3c5cc" d="M403.88 98.41 l2.38 1.59 l-2.38 1.59 z"/><rect x="406.18" y="98.01" width="1.43" height="3.97" fill="#c3c5cc"/><circle cx="428.1" cy="100" r="1.91" fill="#c3c5cc"/><text x="426.3" y="93.64" text-anchor="end" font-family='"Liberation Sans", sans-serif' font-size="3.07" font-weight="bold" fill="#e6e6e6">▢</text><text x="417.5" y="116.03" text-anchor="middle" font-family='"Liberation Sans", sans-serif' font-size="3.6" font-weight="bold" fill="#ededed">Проверка наличия</text><rect x="449.4" y="89.4" width="21.2" height="21.2" rx="1.8" fill="#414141" stroke="#767677" stroke-width="0.66"/><g transform="translate(455.55 95.55) scale(0.37)"><g fill="none" stroke="#3fae7c" stroke-width="2.200" stroke-linejoin="round" stroke-linecap="round"><path d="M12 2v3M12 12v10M8.500 22h7"/><path d="M5 5h13.500l3 3.500-3 3.500H5a2.500 2.500 0 0 1-2.500-2.500v-2A2.500 2.500 0 0 1 5 5z"/></g></g><path fill="#c3c5cc" d="M446.38 98.41 l2.38 1.59 l-2.38 1.59 z"/><rect x="448.68" y="98.01" width="1.43" height="3.97" fill="#c3c5cc"/><circle cx="470.6" cy="96.5" r="1.91" fill="#c3c5cc"/><circle cx="470.6" cy="103.5" r="1.91" fill="#c3c5cc"/><text x="460" y="116.03" text-anchor="middle" font-family='"Liberation Sans", sans-serif' font-size="3.6" font-weight="bold" fill="#ededed">If</text><rect x="548.9" y="71.9" width="21.2" height="21.2" rx="1.8" fill="#414141" stroke="#767677" stroke-width="0.66"/><g transform="translate(555.05 78.05) scale(0.37)"><circle cx="12" cy="12" r="12" fill="#2ca7e4"/><path fill="#fff" d="M5.3 11.8 17.4 7.1c.6-.2 1.1.1.9 1l-2.1 9.7c-.1.7-.6.9-1.2.6l-3.1-2.3-1.5 1.5c-.2.2-.3.3-.6.3l.2-3.2 5.8-5.3c.3-.2-.1-.4-.4-.2l-7.2 4.600-3.100-1c-.7-.2-.7-.7.2-1z"/></g><path fill="#c3c5cc" d="M545.88 80.91 l2.38 1.59 l-2.38 1.59 z"/><rect x="548.18" y="80.51" width="1.43" height="3.97" fill="#c3c5cc"/><circle cx="570.1" cy="82.5" r="1.91" fill="#c3c5cc"/><text x="559.5" y="98.53" text-anchor="middle" font-family='"Liberation Sans", sans-serif' font-size="3.6" font-weight="bold" fill="#ededed">в ЛОГ Уже существует</text><text x="559.5" y="103.1" text-anchor="middle" font-family='"Liberation Sans", sans-serif' font-size="3.13" fill="#8a8b8f">sendMessage: message</text><rect x="587.9" y="71.9" width="21.2" height="21.2" rx="1.8" fill="#414141" stroke="#767677" stroke-width="0.66"/><g transform="translate(594.05 78.05) scale(0.37)"><circle cx="12" cy="12" r="12" fill="#2ca7e4"/><path fill="#fff" d="M5.3 11.8 17.4 7.1c.6-.2 1.1.1.9 1l-2.1 9.7c-.1.7-.6.9-1.2.6l-3.1-2.3-1.5 1.5c-.2.2-.3.3-.6.3l.2-3.2 5.8-5.3c.3-.2-.1-.4-.4-.2l-7.2 4.600-3.100-1c-.7-.2-.7-.7.2-1z"/></g><path fill="#c3c5cc" d="M584.88 80.91 l2.38 1.59 l-2.38 1.59 z"/><rect x="587.18" y="80.51" width="1.43" height="3.97" fill="#c3c5cc"/><circle cx="609.1" cy="82.5" r="1.91" fill="#c3c5cc"/><text x="598.5" y="98.53" text-anchor="middle" font-family='"Liberation Sans", sans-serif' font-size="3.6" font-weight="bold" fill="#ededed">Платеж уже есть</text><text x="598.5" y="103.1" text-anchor="middle" font-family='"Liberation Sans", sans-serif' font-size="3.13" fill="#8a8b8f">sendMessage: message</text><rect x="502.4" y="103.9" width="21.2" height="21.2" rx="1.8" fill="#414141" stroke="#767677" stroke-width="0.66"/><g transform="translate(508.1 109.6) scale(0.41)"><g fill="none" stroke="#f4715f" stroke-width="2.4" stroke-linejoin="round"><rect x="2.5" y="3.5" width="19" height="17" rx="2.6"/><path d="M12 3.5v17M2.500 9.200h19M2.500 14.800h19"/></g></g><path fill="#c3c5cc" d="M499.38 112.91 l2.38 1.59 l-2.38 1.59 z"/><rect x="501.68" y="112.51" width="1.43" height="3.97" fill="#c3c5cc"/><circle cx="523.6" cy="114.5" r="1.91" fill="#c3c5cc"/><text x="513" y="130.53" text-anchor="middle" font-family='"Liberation Sans", sans-serif' font-size="3.6" font-weight="bold" fill="#ededed">Insert row</text><rect x="548.9" y="103.9" width="21.2" height="21.2" rx="1.8" fill="#414141" stroke="#767677" stroke-width="0.66"/><g transform="translate(555.05 110.05) scale(0.37)"><circle cx="12" cy="12" r="12" fill="#2ca7e4"/><path fill="#fff" d="M5.3 11.8 17.4 7.1c.6-.2 1.1.1.9 1l-2.1 9.7c-.1.7-.6.9-1.2.6l-3.1-2.3-1.5 1.5c-.2.2-.3.3-.6.3l.2-3.2 5.8-5.3c.3-.2-.1-.4-.4-.2l-7.2 4.600-3.100-1c-.7-.2-.7-.7.2-1z"/></g><path fill="#c3c5cc" d="M545.88 112.91 l2.38 1.59 l-2.38 1.59 z"/><rect x="548.18" y="112.51" width="1.43" height="3.97" fill="#c3c5cc"/><circle cx="570.1" cy="114.5" r="1.91" fill="#c3c5cc"/><text x="559.5" y="130.53" text-anchor="middle" font-family='"Liberation Sans", sans-serif' font-size="3.6" font-weight="bold" fill="#ededed">в ЛОГ Платеж добавлен</text><text x="559.5" y="135.1" text-anchor="middle" font-family='"Liberation Sans", sans-serif' font-size="3.13" fill="#8a8b8f">sendMessage: message</text><rect x="587.9" y="103.9" width="21.2" height="21.2" rx="1.8" fill="#414141" stroke="#767677" stroke-width="0.66"/><g transform="translate(594.05 110.05) scale(0.37)"><circle cx="12" cy="12" r="12" fill="#2ca7e4"/><path fill="#fff" d="M5.3 11.8 17.4 7.1c.6-.2 1.1.1.9 1l-2.1 9.7c-.1.7-.6.9-1.2.6l-3.1-2.3-1.5 1.5c-.2.2-.3.3-.6.3l.2-3.2 5.8-5.3c.3-.2-.1-.4-.4-.2l-7.2 4.600-3.100-1c-.7-.2-.7-.7.2-1z"/></g><path fill="#c3c5cc" d="M584.88 112.91 l2.38 1.59 l-2.38 1.59 z"/><rect x="587.18" y="112.51" width="1.43" height="3.97" fill="#c3c5cc"/><circle cx="609.1" cy="114.5" r="1.91" fill="#c3c5cc"/><text x="598.5" y="130.53" text-anchor="middle" font-family='"Liberation Sans", sans-serif' font-size="3.6" font-weight="bold" fill="#ededed">Новый платеж</text><text x="598.5" y="135.1" text-anchor="middle" font-family='"Liberation Sans", sans-serif' font-size="3.13" fill="#8a8b8f">sendMessage: message</text><circle cx="302" cy="123" r="8.9" fill="#2a2b3d" stroke="#50516a" stroke-width="0.6"/><g transform="translate(298.18 119.18) scale(0.32)"><path fill="#4f6cf7" d="M2.300 13.500C2.300 9.600 5.800 7.300 9.500 7.300c2.600 0 4.700 1.100 6.100 3.100 2 0 3.500-1.500 3.900-3.900.400-.600 1-.600 1.500-.100.600.500 1.500.500 2.100 0 .100 3.100-1.400 5.200-3.600 6.200-.500 4.100-4 7.100-8.500 7.100-5 0-8.800-2.500-8.800-6.200z"/><path fill="#2a2b3d" d="M6.200 11.200c1.700-.300 3.300.600 4.300 2.100.800 1.200 1.700 2.200 2.900 3.100-1.900.300-3.600-.300-4.700-1.800.300 1 .100 1.600-.700 1.600-1.700-.700-2.700-2.500-1.800-5z"/><circle cx="13.200" cy="11.800" r=".9" fill="#2a2b3d"/></g><path fill="#8d8fb0" d="M302 112.72 l1.38 1.38 l-1.38 1.38 l-1.38 -1.38 z"/><text x="302" y="111.5" text-anchor="middle" font-family='"Liberation Sans", sans-serif' font-size="2.700" fill="#7a7b90">Model</text><text x="302" y="136.86" text-anchor="middle" font-family='"Liberation Sans", sans-serif' font-size="3.6" font-weight="bold" fill="#ededed">Работа с</text><text x="302" y="141" text-anchor="middle" font-family='"Liberation Sans", sans-serif' font-size="3.6" font-weight="bold" fill="#ededed">документами</text><rect x="254.4" y="149.9" width="21.2" height="21.2" rx="1.8" fill="#414141" stroke="#767677" stroke-width="0.66"/><g transform="translate(260.55 156.05) scale(0.37)"><circle cx="12" cy="12" r="12" fill="#2ca7e4"/><path fill="#fff" d="M5.3 11.8 17.4 7.1c.6-.2 1.1.1.9 1l-2.1 9.7c-.1.7-.6.9-1.2.6l-3.1-2.3-1.5 1.5c-.2.2-.3.3-.6.3l.2-3.2 5.8-5.3c.3-.2-.1-.4-.4-.2l-7.2 4.600-3.100-1c-.7-.2-.7-.7.2-1z"/></g><path fill="#c3c5cc" d="M251.38 158.91 l2.38 1.59 l-2.38 1.59 z"/><rect x="253.68" y="158.51" width="1.43" height="3.97" fill="#c3c5cc"/><circle cx="275.6" cy="160.5" r="1.91" fill="#c3c5cc"/><text x="265" y="176.53" text-anchor="middle" font-family='"Liberation Sans", sans-serif' font-size="3.6" font-weight="bold" fill="#ededed">в ЛОГ на PDF</text><text x="265" y="181.1" text-anchor="middle" font-family='"Liberation Sans", sans-serif' font-size="3.13" fill="#8a8b8f">sendMessage: message</text><rect x="293.4" y="149.9" width="21.2" height="21.2" rx="1.8" fill="#414141" stroke="#767677" stroke-width="0.66"/><g transform="translate(299.55 156.05) scale(0.37)"><circle cx="12" cy="12" r="12" fill="#2ca7e4"/><path fill="#fff" d="M5.3 11.8 17.4 7.1c.6-.2 1.1.1.9 1l-2.1 9.7c-.1.7-.6.9-1.2.6l-3.1-2.3-1.5 1.5c-.2.2-.3.3-.6.3l.2-3.2 5.8-5.3c.3-.2-.1-.4-.4-.2l-7.2 4.600-3.100-1c-.7-.2-.7-.7.2-1z"/></g><path fill="#c3c5cc" d="M290.38 158.91 l2.38 1.59 l-2.38 1.59 z"/><rect x="292.68" y="158.51" width="1.43" height="3.97" fill="#c3c5cc"/><circle cx="314.6" cy="160.5" r="1.91" fill="#c3c5cc"/><text x="304" y="176.53" text-anchor="middle" font-family='"Liberation Sans", sans-serif' font-size="3.6" font-weight="bold" fill="#ededed">На PDF</text><text x="304" y="181.1" text-anchor="middle" font-family='"Liberation Sans", sans-serif' font-size="3.13" fill="#8a8b8f">sendMessage: message</text><rect x="254.4" y="192.9" width="21.2" height="21.2" rx="1.8" fill="#414141" stroke="#2c7a57" stroke-width="0.66"/><g transform="translate(260.55 199.05) scale(0.37)"><text x="14.700" y="17.800" text-anchor="middle" font-family=""Liberation Sans", sans-serif" font-size="27.5" fill="#f5a02a" letter-spacing="5.4">{}</text></g><path fill="#c3c5cc" d="M251.38 201.91 l2.38 1.59 l-2.38 1.59 z"/><rect x="253.68" y="201.51" width="1.43" height="3.97" fill="#c3c5cc"/><circle cx="275.6" cy="203.5" r="1.91" fill="#c3c5cc"/><path d="M271.36 211.77 l0.95 0.95 l1.91 -2.12" fill="none" stroke="#2c8a5f" stroke-width="0.64"/><text x="265" y="219.53" text-anchor="middle" font-family='"Liberation Sans", sans-serif' font-size="3.6" font-weight="bold" fill="#ededed">Только боту</text><path d="M49.33 227.9 H61.1 Q62.9 227.9 62.9 229.7 V247.3 Q62.9 249.1 61.1 249.1 H49.33 Q41.7 249.1 41.7 241.47 V235.53 Q41.7 227.9 49.33 227.9 Z" fill="#414141" stroke="#2c7a57" stroke-width="0.66"/><path fill="#f0644f" d="M36.51 235.59 l-2.12 3.45 h1.59 l-0.8 2.65 l2.39 -3.71 h-1.59 z"/><g transform="translate(47.85 234.05) scale(0.37)"><circle cx="12" cy="12" r="12" fill="#2ca7e4"/><path fill="#fff" d="M5.3 11.8 17.4 7.1c.6-.2 1.1.1.9 1l-2.1 9.7c-.1.7-.6.9-1.2.6l-3.1-2.3-1.5 1.5c-.2.2-.3.3-.6.3l.2-3.2 5.8-5.3c.3-.2-.1-.4-.4-.2l-7.2 4.600-3.100-1c-.7-.2-.7-.7.2-1z"/></g><circle cx="62.9" cy="238.5" r="1.91" fill="#c3c5cc"/><path d="M58.66 246.77 l0.95 0.95 l1.91 -2.12" fill="none" stroke="#2c8a5f" stroke-width="0.64"/><text x="52.3" y="254.53" text-anchor="middle" font-family='"Liberation Sans", sans-serif' font-size="3.6" font-weight="bold" fill="#ededed">Telegram Trigger</text><text x="52.3" y="259.1" text-anchor="middle" font-family='"Liberation Sans", sans-serif' font-size="3.13" fill="#8a8b8f">updates: message</text><rect x="83.9" y="227.9" width="21.2" height="21.2" rx="1.8" fill="#414141" stroke="#2c7a57" stroke-width="0.66"/><g transform="translate(89.6 233.6) scale(0.41)"><g fill="none" stroke="#f4715f" stroke-width="2.4" stroke-linejoin="round"><rect x="2.5" y="3.5" width="19" height="17" rx="2.6"/><path d="M12 3.5v17M2.500 9.200h19M2.500 14.800h19"/></g></g><path fill="#c3c5cc" d="M80.88 236.91 l2.38 1.59 l-2.38 1.59 z"/><rect x="83.18" y="236.51" width="1.43" height="3.97" fill="#c3c5cc"/><circle cx="105.1" cy="238.5" r="1.91" fill="#c3c5cc"/><path d="M100.86 246.77 l0.95 0.95 l1.91 -2.12" fill="none" stroke="#2c8a5f" stroke-width="0.64"/><text x="103.3" y="232.14" text-anchor="end" font-family='"Liberation Sans", sans-serif' font-size="3.07" font-weight="bold" fill="#e6e6e6">▢</text><text x="94.5" y="254.53" text-anchor="middle" font-family='"Liberation Sans", sans-serif' font-size="3.6" font-weight="bold" fill="#ededed">О нем чат</text><rect x="123.4" y="227.9" width="21.2" height="21.2" rx="1.8" fill="#414141" stroke="#2c7a57" stroke-width="0.66"/><g transform="translate(129.55 234.05) scale(0.37)"><g fill="none" stroke="#3fae7c" stroke-width="2.200" stroke-linejoin="round" stroke-linecap="round"><path d="M12 2v3M12 12v10M8.500 22h7"/><path d="M5 5h13.500l3 3.500-3 3.500H5a2.500 2.500 0 0 1-2.500-2.500v-2A2.500 2.500 0 0 1 5 5z"/></g></g><path fill="#c3c5cc" d="M120.38 236.91 l2.38 1.59 l-2.38 1.59 z"/><rect x="122.68" y="236.51" width="1.43" height="3.97" fill="#c3c5cc"/><circle cx="144.6" cy="235" r="1.91" fill="#c3c5cc"/><circle cx="144.6" cy="242" r="1.91" fill="#c3c5cc"/><path d="M140.36 246.77 l0.95 0.95 l1.91 -2.12" fill="none" stroke="#2c8a5f" stroke-width="0.64"/><text x="142.8" y="232.14" text-anchor="end" font-family='"Liberation Sans", sans-serif' font-size="3.07" font-weight="bold" fill="#e6e6e6">1</text><text x="134" y="254.53" text-anchor="middle" font-family='"Liberation Sans", sans-serif' font-size="3.6" font-weight="bold" fill="#ededed">Взрослый?</text><rect x="165.9" y="224.4" width="21.2" height="21.2" rx="1.8" fill="#414141" stroke="#2c7a57" stroke-width="0.66"/><g transform="translate(172.05 230.55) scale(0.37)"><circle cx="12" cy="12" r="12" fill="#2ca7e4"/><path fill="#fff" d="M5.3 11.8 17.4 7.1c.6-.2 1.1.1.9 1l-2.1 9.7c-.1.7-.6.9-1.2.6l-3.1-2.3-1.5 1.5c-.2.2-.3.3-.6.3l.2-3.2 5.8-5.3c.3-.2-.1-.4-.4-.2l-7.2 4.600-3.100-1c-.7-.2-.7-.7.2-1z"/></g><path fill="#c3c5cc" d="M162.88 233.41 l2.38 1.59 l-2.38 1.59 z"/><rect x="165.18" y="233.01" width="1.43" height="3.97" fill="#c3c5cc"/><circle cx="187.1" cy="235" r="1.91" fill="#c3c5cc"/><path d="M182.86 243.27 l0.95 0.95 l1.91 -2.12" fill="none" stroke="#2c8a5f" stroke-width="0.64"/><text x="185.3" y="228.64" text-anchor="end" font-family='"Liberation Sans", sans-serif' font-size="3.07" font-weight="bold" fill="#e6e6e6">▢</text><text x="176.5" y="251.03" text-anchor="middle" font-family='"Liberation Sans", sans-serif' font-size="3.6" font-weight="bold" fill="#ededed">Сообщение в ЛОГ</text><text x="176.5" y="255.6" text-anchor="middle" font-family='"Liberation Sans", sans-serif' font-size="3.13" fill="#8a8b8f">sendMessage: message</text><rect x="212.09" y="242.4" width="49.82" height="21.2" rx="1.8" fill="#414141" stroke="#2c7a57" stroke-width="0.66"/><g transform="translate(215.92 248.77) scale(0.35)"><g fill="none" stroke="#f2f2f2" stroke-width="2" stroke-linejoin="round" stroke-linecap="round"><rect x="4" y="8" width="16" height="12" rx="3"/><path d="M12 8V4.500M1.800 13v3M22.200 13v3"/></g><circle cx="12" cy="3.600" r="1.600" fill="#f2f2f2"/><circle cx="8.800" cy="13.500" r="1.700" fill="#f2f2f2"/><circle cx="15.200" cy="13.500" r="1.700" fill="#f2f2f2"/></g><path fill="#c3c5cc" d="M209.07 251.41 l2.38 1.59 l-2.38 1.59 z"/><rect x="211.37" y="251.01" width="1.43" height="3.97" fill="#c3c5cc"/><circle cx="261.91" cy="253" r="1.91" fill="#c3c5cc"/><path d="M257.67 261.27 l0.95 0.95 l1.91 -2.12" fill="none" stroke="#2c8a5f" stroke-width="0.64"/><text x="229.05" y="254.26" font-family='"Liberation Sans", sans-serif' font-size="3.6" font-weight="bold" fill="#ededed">Классификатор</text><path fill="#8d8fb0" d="M220.5 262.1l1.500 1.500-1.500 1.500-1.500-1.500z"/><path fill="#8d8fb0" d="M241.8 262.1l1.500 1.500-1.500 1.500-1.500-1.500z"/><path fill="#8d8fb0" d="M252 262.1l1.500 1.500-1.500 1.500-1.500-1.500z"/><path d="M252 265.1 V275.6" fill="none" stroke="#7d7e93" stroke-width="0.7" stroke-linecap="round" stroke-linejoin="round"/><rect x="249.8" y="275.6" width="4.400" height="4.400" rx="0.700" fill="none" stroke="#9c9eb0" stroke-width="0.600"/><text x="220.5" y="269" text-anchor="middle" font-family='"Liberation Sans", sans-serif' font-size="2.8" fill="#8a7fb0">Chat Model*</text><text x="241.8" y="269" text-anchor="middle" font-family='"Liberation Sans", sans-serif' font-size="2.8" fill="#7a7b90">Memory</text><text x="252" y="269" text-anchor="middle" font-family='"Liberation Sans", sans-serif' font-size="2.8" fill="#7a7b90">Tool</text><text x="220.5" y="281" text-anchor="middle" font-family='"Liberation Sans", sans-serif' font-size="2.8" fill="#9a9ba0">1 item</text><text x="241.8" y="283" text-anchor="middle" font-family='"Liberation Sans", sans-serif' font-size="2.8" fill="#9a9ba0">2 items total</text><rect x="282.9" y="242.4" width="21.2" height="21.2" rx="1.8" fill="#414141" stroke="#2c7a57" stroke-width="0.66"/><g transform="translate(289.05 248.55) scale(0.37)"><text x="14.700" y="17.800" text-anchor="middle" font-family=""Liberation Sans", sans-serif" font-size="27.5" fill="#f5a02a" letter-spacing="5.4">{}</text></g><path fill="#c3c5cc" d="M279.88 251.41 l2.38 1.59 l-2.38 1.59 z"/><rect x="282.18" y="251.01" width="1.43" height="3.97" fill="#c3c5cc"/><circle cx="304.1" cy="253" r="1.91" fill="#c3c5cc"/><path d="M299.86 261.27 l0.95 0.95 l1.91 -2.12" fill="none" stroke="#2c8a5f" stroke-width="0.64"/><text x="293.5" y="269.03" text-anchor="middle" font-family='"Liberation Sans", sans-serif' font-size="3.6" font-weight="bold" fill="#ededed">Тип вопроса</text><rect x="162.4" y="274.4" width="21.2" height="21.2" rx="1.8" fill="#414141" stroke="#767677" stroke-width="0.66"/><g transform="translate(168.1 280.1) scale(0.41)"><g fill="none" stroke="#f4715f" stroke-width="2.4" stroke-linejoin="round"><rect x="2.5" y="3.5" width="19" height="17" rx="2.6"/><path d="M12 3.5v17M2.500 9.200h19M2.500 14.800h19"/></g></g><path fill="#c3c5cc" d="M159.38 283.41 l2.38 1.59 l-2.38 1.59 z"/><rect x="161.68" y="283.01" width="1.43" height="3.97" fill="#c3c5cc"/><circle cx="183.6" cy="285" r="1.91" fill="#c3c5cc"/><text x="181.8" y="278.64" text-anchor="end" font-family='"Liberation Sans", sans-serif' font-size="3.07" font-weight="bold" fill="#e6e6e6">▢</text><text x="173" y="301.03" text-anchor="middle" font-family='"Liberation Sans", sans-serif' font-size="3.6" font-weight="bold" fill="#ededed">Дети</text><circle cx="220.5" cy="304.5" r="8.9" fill="#2a2b3d" stroke="#2f6e57" stroke-width="0.6"/><g transform="translate(216.68 300.68) scale(0.32)"><path fill="#4f6cf7" d="M2.300 13.500C2.300 9.600 5.800 7.300 9.500 7.300c2.600 0 4.700 1.100 6.100 3.100 2 0 3.500-1.500 3.900-3.900.400-.600 1-.600 1.500-.100.600.500 1.500.500 2.100 0 .100 3.100-1.400 5.200-3.600 6.200-.500 4.100-4 7.100-8.500 7.100-5 0-8.800-2.500-8.800-6.200z"/><path fill="#2a2b3d" d="M6.200 11.200c1.700-.300 3.300.600 4.300 2.100.800 1.200 1.700 2.200 2.900 3.100-1.900.300-3.600-.300-4.700-1.800.300 1 .100 1.600-.700 1.600-1.700-.700-2.700-2.500-1.800-5z"/><circle cx="13.200" cy="11.800" r=".9" fill="#2a2b3d"/></g><path fill="#8d8fb0" d="M220.5 294.22 l1.38 1.38 l-1.38 1.38 l-1.38 -1.38 z"/><text x="220.5" y="293" text-anchor="middle" font-family='"Liberation Sans", sans-serif' font-size="2.700" fill="#7a7b90">Model</text><text x="220.5" y="318.36" text-anchor="middle" font-family='"Liberation Sans", sans-serif' font-size="3.6" font-weight="bold" fill="#ededed">DeepSeek Chat</text><text x="220.5" y="322.5" text-anchor="middle" font-family='"Liberation Sans", sans-serif' font-size="3.6" font-weight="bold" fill="#ededed">Model</text><circle cx="241.8" cy="307.5" r="8.9" fill="#2a2b3d" stroke="#2f6e57" stroke-width="0.6"/><g transform="translate(237.98 303.68) scale(0.32)"><g fill="none" stroke="#ececec" stroke-width="1.900"><ellipse cx="12" cy="6" rx="7.500" ry="3"/><path d="M4.500 6v12c0 1.700 3.400 3 7.500 3s7.500-1.300 7.500-3V6M4.500 12c0 1.700 3.400 3 7.500 3s7.500-1.300 7.500-3"/></g></g><path fill="#8d8fb0" d="M241.8 297.22 l1.38 1.38 l-1.38 1.38 l-1.38 -1.38 z"/><text x="241.8" y="296" text-anchor="middle" font-family='"Liberation Sans", sans-serif' font-size="2.700" fill="#7a7b90">Memory</text><text x="241.8" y="321.36" text-anchor="middle" font-family='"Liberation Sans", sans-serif' font-size="3.6" font-weight="bold" fill="#ededed">Simple Memory4</text><rect x="275.4" y="295.4" width="21.2" height="21.2" rx="1.8" fill="#414141" stroke="#2c7a57" stroke-width="0.66"/><g transform="translate(281.55 301.55) scale(0.37)"><circle cx="12" cy="12" r="12" fill="#2ca7e4"/><path fill="#fff" d="M5.3 11.8 17.4 7.1c.6-.2 1.1.1.9 1l-2.1 9.7c-.1.7-.6.9-1.2.6l-3.1-2.3-1.5 1.5c-.2.2-.3.3-.6.3l.2-3.2 5.8-5.3c.3-.2-.1-.4-.4-.2l-7.2 4.600-3.100-1c-.7-.2-.7-.7.2-1z"/></g><path fill="#c3c5cc" d="M272.38 304.41 l2.38 1.59 l-2.38 1.59 z"/><rect x="274.68" y="304.01" width="1.43" height="3.97" fill="#c3c5cc"/><circle cx="296.6" cy="306" r="1.91" fill="#c3c5cc"/><path d="M292.36 314.27 l0.95 0.95 l1.91 -2.12" fill="none" stroke="#2c8a5f" stroke-width="0.64"/><text x="294.8" y="299.64" text-anchor="end" font-family='"Liberation Sans", sans-serif' font-size="3.07" font-weight="bold" fill="#e6e6e6">▢</text><text x="286" y="322.03" text-anchor="middle" font-family='"Liberation Sans", sans-serif' font-size="3.6" font-weight="bold" fill="#ededed">Сообщение в ЛОГ1</text><text x="286" y="326.6" text-anchor="middle" font-family='"Liberation Sans", sans-serif' font-size="3.13" fill="#8a8b8f">sendMessage: message</text><rect x="307.4" y="295.4" width="21.2" height="21.2" rx="1.8" fill="#414141" stroke="#2c7a57" stroke-width="0.66"/><g transform="translate(313.55 301.55) scale(0.37)"><g fill="none" stroke="#4aa3e0" stroke-width="2.200" stroke-linejoin="round" stroke-linecap="round"><path d="M12 2v3M12 12v10M8.500 22h7"/><path d="M5 5h13.500l3 3.500-3 3.500H5a2.500 2.500 0 0 1-2.500-2.500v-2A2.500 2.500 0 0 1 5 5z"/></g></g><path fill="#c3c5cc" d="M304.38 304.41 l2.38 1.59 l-2.38 1.59 z"/><rect x="306.68" y="304.01" width="1.43" height="3.97" fill="#c3c5cc"/><circle cx="328.6" cy="302.5" r="1.91" fill="#c3c5cc"/><circle cx="328.6" cy="309.5" r="1.91" fill="#c3c5cc"/><path d="M324.36 314.27 l0.95 0.95 l1.91 -2.12" fill="none" stroke="#2c8a5f" stroke-width="0.64"/><text x="318" y="322.03" text-anchor="middle" font-family='"Liberation Sans", sans-serif' font-size="3.6" font-weight="bold" fill="#ededed">Switch</text><text x="318" y="326.6" text-anchor="middle" font-family='"Liberation Sans", sans-serif' font-size="3.13" fill="#8a8b8f">mode: Rules</text><rect x="350.4" y="291.9" width="21.2" height="21.2" rx="1.8" fill="#414141" stroke="#2c7a57" stroke-width="0.66"/><g transform="translate(356.1 297.6) scale(0.41)"><g fill="none" stroke="#f4715f" stroke-width="2.4" stroke-linejoin="round"><rect x="2.5" y="3.5" width="19" height="17" rx="2.6"/><path d="M12 3.5v17M2.500 9.200h19M2.500 14.800h19"/></g></g><path fill="#c3c5cc" d="M347.38 300.91 l2.38 1.59 l-2.38 1.59 z"/><rect x="349.68" y="300.51" width="1.43" height="3.97" fill="#c3c5cc"/><circle cx="371.6" cy="302.5" r="1.91" fill="#c3c5cc"/><path d="M367.36 310.77 l0.95 0.95 l1.91 -2.12" fill="none" stroke="#2c8a5f" stroke-width="0.64"/><text x="361" y="318.53" text-anchor="middle" font-family='"Liberation Sans", sans-serif' font-size="3.6" font-weight="bold" fill="#ededed">Костюмы</text><rect x="335.9" y="341.4" width="21.2" height="21.2" rx="1.8" fill="#414141" stroke="#2c7a57" stroke-width="0.66"/><g transform="translate(342.05 347.55) scale(0.37)"><g fill="none" stroke="#3fae7c" stroke-width="2.200" stroke-linejoin="round" stroke-linecap="round"><path d="M12 2v3M12 12v10M8.500 22h7"/><path d="M5 5h13.500l3 3.500-3 3.500H5a2.500 2.500 0 0 1-2.500-2.500v-2A2.500 2.500 0 0 1 5 5z"/></g></g><path fill="#c3c5cc" d="M332.88 350.41 l2.38 1.59 l-2.38 1.59 z"/><rect x="335.18" y="350.01" width="1.43" height="3.97" fill="#c3c5cc"/><circle cx="357.1" cy="348.5" r="1.91" fill="#c3c5cc"/><circle cx="357.1" cy="355.5" r="1.91" fill="#c3c5cc"/><path d="M352.86 360.27 l0.95 0.95 l1.91 -2.12" fill="none" stroke="#2c8a5f" stroke-width="0.64"/><text x="355.3" y="345.64" text-anchor="end" font-family='"Liberation Sans", sans-serif' font-size="3.07" font-weight="bold" fill="#e6e6e6">1</text><text x="346.5" y="368.03" text-anchor="middle" font-family='"Liberation Sans", sans-serif' font-size="3.6" font-weight="bold" fill="#ededed">Адреса?</text><rect x="385.9" y="338.4" width="21.2" height="21.2" rx="1.8" fill="#414141" stroke="#767677" stroke-width="0.66"/><g transform="translate(391.6 344.1) scale(0.41)"><g fill="none" stroke="#f4715f" stroke-width="2.4" stroke-linejoin="round"><rect x="2.5" y="3.5" width="19" height="17" rx="2.6"/><path d="M12 3.5v17M2.500 9.200h19M2.500 14.800h19"/></g></g><path fill="#c3c5cc" d="M382.88 347.41 l2.38 1.59 l-2.38 1.59 z"/><rect x="385.18" y="347.01" width="1.43" height="3.97" fill="#c3c5cc"/><circle cx="407.1" cy="349" r="1.91" fill="#c3c5cc"/><text x="396.5" y="365.03" text-anchor="middle" font-family='"Liberation Sans", sans-serif' font-size="3.6" font-weight="bold" fill="#ededed">Все</text><rect x="385.9" y="369.9" width="21.2" height="21.2" rx="1.8" fill="#414141" stroke="#2c7a57" stroke-width="0.66"/><g transform="translate(391.6 375.6) scale(0.41)"><g fill="none" stroke="#f4715f" stroke-width="2.4" stroke-linejoin="round"><rect x="2.5" y="3.5" width="19" height="17" rx="2.6"/><path d="M12 3.5v17M2.500 9.200h19M2.500 14.800h19"/></g></g><path fill="#c3c5cc" d="M382.88 378.91 l2.38 1.59 l-2.38 1.59 z"/><rect x="385.18" y="378.51" width="1.43" height="3.97" fill="#c3c5cc"/><circle cx="407.1" cy="380.5" r="1.91" fill="#c3c5cc"/><path d="M402.86 388.77 l0.95 0.95 l1.91 -2.12" fill="none" stroke="#2c8a5f" stroke-width="0.64"/><text x="405.3" y="374.14" text-anchor="end" font-family='"Liberation Sans", sans-serif' font-size="3.07" font-weight="bold" fill="#e6e6e6">▢</text><text x="396.5" y="396.53" text-anchor="middle" font-family='"Liberation Sans", sans-serif' font-size="3.6" font-weight="bold" fill="#ededed">Ребенок</text><rect x="385.9" y="163.9" width="21.2" height="21.2" rx="1.8" fill="#414141" stroke="#767677" stroke-width="0.66"/><g transform="translate(391.6 169.6) scale(0.41)"><g fill="none" stroke="#f4715f" stroke-width="2.4" stroke-linejoin="round"><rect x="2.5" y="3.5" width="19" height="17" rx="2.6"/><path d="M12 3.5v17M2.500 9.200h19M2.500 14.800h19"/></g></g><path fill="#c3c5cc" d="M382.88 172.91 l2.38 1.59 l-2.38 1.59 z"/><rect x="385.18" y="172.51" width="1.43" height="3.97" fill="#c3c5cc"/><circle cx="407.1" cy="174.5" r="1.91" fill="#c3c5cc"/><text x="405.3" y="168.14" text-anchor="end" font-family='"Liberation Sans", sans-serif' font-size="3.07" font-weight="bold" fill="#e6e6e6">▢</text><text x="396.5" y="190.53" text-anchor="middle" font-family='"Liberation Sans", sans-serif' font-size="3.6" font-weight="bold" fill="#ededed">ParentsList</text><rect x="417.4" y="163.9" width="21.2" height="21.2" rx="1.8" fill="#414141" stroke="#767677" stroke-width="0.66"/><g transform="translate(423.1 169.6) scale(0.41)"><g fill="none" stroke="#f4715f" stroke-width="2.4" stroke-linejoin="round"><rect x="2.5" y="3.5" width="19" height="17" rx="2.6"/><path d="M12 3.5v17M2.500 9.200h19M2.500 14.800h19"/></g></g><path fill="#c3c5cc" d="M414.38 172.91 l2.38 1.59 l-2.38 1.59 z"/><rect x="416.68" y="172.51" width="1.43" height="3.97" fill="#c3c5cc"/><circle cx="438.6" cy="174.5" r="1.91" fill="#c3c5cc"/><text x="436.8" y="168.14" text-anchor="end" font-family='"Liberation Sans", sans-serif' font-size="3.07" font-weight="bold" fill="#e6e6e6">▢1</text><text x="428" y="190.53" text-anchor="middle" font-family='"Liberation Sans", sans-serif' font-size="3.6" font-weight="bold" fill="#ededed">payments</text><rect x="456.4" y="163.9" width="21.2" height="21.2" rx="1.8" fill="#414141" stroke="#767677" stroke-width="0.66"/><g transform="translate(462.1 169.6) scale(0.41)"><g fill="none" stroke="#f4715f" stroke-width="2.4" stroke-linejoin="round"><rect x="2.5" y="3.5" width="19" height="17" rx="2.6"/><path d="M12 3.5v17M2.500 9.200h19M2.500 14.800h19"/></g></g><path fill="#c3c5cc" d="M453.38 172.91 l2.38 1.59 l-2.38 1.59 z"/><rect x="455.68" y="172.51" width="1.43" height="3.97" fill="#c3c5cc"/><circle cx="477.6" cy="174.5" r="1.91" fill="#c3c5cc"/><text x="475.8" y="168.14" text-anchor="end" font-family='"Liberation Sans", sans-serif' font-size="3.07" font-weight="bold" fill="#e6e6e6">▢1</text><text x="467" y="190.53" text-anchor="middle" font-family='"Liberation Sans", sans-serif' font-size="3.6" font-weight="bold" fill="#ededed">shdl</text><rect x="499.39" y="163.9" width="49.82" height="21.2" rx="1.8" fill="#414141" stroke="#767677" stroke-width="0.66"/><g transform="translate(503.22 170.27) scale(0.35)"><g fill="none" stroke="#f2f2f2" stroke-width="2" stroke-linejoin="round" stroke-linecap="round"><rect x="4" y="8" width="16" height="12" rx="3"/><path d="M12 8V4.500M1.800 13v3M22.200 13v3"/></g><circle cx="12" cy="3.600" r="1.600" fill="#f2f2f2"/><circle cx="8.800" cy="13.500" r="1.700" fill="#f2f2f2"/><circle cx="15.200" cy="13.500" r="1.700" fill="#f2f2f2"/></g><path fill="#c3c5cc" d="M496.37 172.91 l2.38 1.59 l-2.38 1.59 z"/><rect x="498.67" y="172.51" width="1.43" height="3.97" fill="#c3c5cc"/><circle cx="549.21" cy="174.5" r="1.91" fill="#c3c5cc"/><text x="547.41" y="168.14" text-anchor="end" font-family='"Liberation Sans", sans-serif' font-size="3.07" font-weight="bold" fill="#e6e6e6">1</text><text x="516.35" y="175.76" font-family='"Liberation Sans", sans-serif' font-size="3.6" font-weight="bold" fill="#ededed">AI Админы</text><path fill="#8d8fb0" d="M508.3 183.6l1.500 1.500-1.500 1.500-1.500-1.500z"/><path fill="#8d8fb0" d="M519 183.6l1.500 1.500-1.500 1.500-1.500-1.500z"/><path fill="#8d8fb0" d="M529.5 183.6l1.500 1.500-1.500 1.500-1.500-1.500z"/><path fill="#8d8fb0" d="M540 183.6l1.500 1.500-1.500 1.500-1.500-1.500z"/><text x="512" y="190.5" text-anchor="middle" font-family='"Liberation Sans", sans-serif' font-size="2.8" fill="#8a7fb0">Chat Model*</text><text x="526" y="190.5" text-anchor="middle" font-family='"Liberation Sans", sans-serif' font-size="2.8" fill="#7a7b90">Memory</text><text x="540" y="190.5" text-anchor="middle" font-family='"Liberation Sans", sans-serif' font-size="2.8" fill="#7a7b90">Tool</text><rect x="563.4" y="163.9" width="21.2" height="21.2" rx="1.8" fill="#414141" stroke="#767677" stroke-width="0.66"/><g transform="translate(569.55 170.05) scale(0.37)"><circle cx="12" cy="12" r="12" fill="#2ca7e4"/><path fill="#fff" d="M5.3 11.8 17.4 7.1c.6-.2 1.1.1.9 1l-2.1 9.7c-.1.7-.6.9-1.2.6l-3.1-2.3-1.5 1.5c-.2.2-.3.3-.6.3l.2-3.2 5.8-5.3c.3-.2-.1-.4-.4-.2l-7.2 4.600-3.100-1c-.7-.2-.7-.7.2-1z"/></g><path fill="#c3c5cc" d="M560.38 172.91 l2.38 1.59 l-2.38 1.59 z"/><rect x="562.68" y="172.51" width="1.43" height="3.97" fill="#c3c5cc"/><circle cx="584.6" cy="174.5" r="1.91" fill="#c3c5cc"/><text x="582.8" y="168.14" text-anchor="end" font-family='"Liberation Sans", sans-serif' font-size="3.07" font-weight="bold" fill="#e6e6e6">▢</text><text x="574" y="190.53" text-anchor="middle" font-family='"Liberation Sans", sans-serif' font-size="3.6" font-weight="bold" fill="#ededed">Ответ</text><text x="574" y="195.1" text-anchor="middle" font-family='"Liberation Sans", sans-serif' font-size="3.13" fill="#8a8b8f">sendMessage: message</text><circle cx="408.8" cy="215.8" r="8.9" fill="#2a2b3d" stroke="#50516a" stroke-width="0.6"/><g transform="translate(404.98 211.98) scale(0.32)"><g fill="none" stroke="#f0f0f0" stroke-width="3" stroke-linecap="round" stroke-linejoin="round"><path d="M3 12h6l9-5.500M9 12l9 5.500"/></g><circle cx="18.500" cy="6.500" r="2.500" fill="#f0f0f0"/><circle cx="18.500" cy="17.500" r="2.500" fill="#f0f0f0"/></g><path fill="#8d8fb0" d="M408.8 205.52 l1.38 1.38 l-1.38 1.38 l-1.38 -1.38 z"/><text x="408.8" y="204.3" text-anchor="middle" font-family='"Liberation Sans", sans-serif' font-size="2.700" fill="#7a7b90">Model</text><text x="408.8" y="229.66" text-anchor="middle" font-family='"Liberation Sans", sans-serif' font-size="3.6" font-weight="bold" fill="#ededed">OpenRouter Chat</text><text x="408.8" y="233.8" text-anchor="middle" font-family='"Liberation Sans", sans-serif' font-size="3.6" font-weight="bold" fill="#ededed">Model</text><circle cx="440.8" cy="218.8" r="8.9" fill="#2a2b3d" stroke="#50516a" stroke-width="0.6"/><g transform="translate(436.98 214.98) scale(0.32)"><path fill="#4f6cf7" d="M2.300 13.500C2.300 9.600 5.800 7.300 9.500 7.300c2.600 0 4.700 1.100 6.100 3.100 2 0 3.500-1.500 3.900-3.900.400-.600 1-.600 1.500-.100.600.500 1.500.500 2.100 0 .100 3.100-1.400 5.200-3.600 6.200-.500 4.100-4 7.100-8.500 7.100-5 0-8.800-2.500-8.800-6.200z"/><path fill="#2a2b3d" d="M6.200 11.200c1.700-.300 3.300.600 4.300 2.100.800 1.200 1.700 2.200 2.900 3.100-1.900.300-3.600-.300-4.700-1.800.300 1 .100 1.600-.700 1.600-1.700-.700-2.700-2.500-1.800-5z"/><circle cx="13.200" cy="11.800" r=".9" fill="#2a2b3d"/></g><path fill="#8d8fb0" d="M440.8 208.52 l1.38 1.38 l-1.38 1.38 l-1.38 -1.38 z"/><text x="440.8" y="207.3" text-anchor="middle" font-family='"Liberation Sans", sans-serif' font-size="2.700" fill="#7a7b90">Model</text><text x="440.8" y="232.66" text-anchor="middle" font-family='"Liberation Sans", sans-serif' font-size="3.6" font-weight="bold" fill="#ededed">Дуралекс</text><circle cx="504.5" cy="218.8" r="8.9" fill="#2a2b3d" stroke="#50516a" stroke-width="0.6"/><g transform="translate(500.68 214.98) scale(0.32)"><g fill="none" stroke="#ececec" stroke-width="2.400" stroke-linecap="round" stroke-linejoin="round"><path d="M8.500 6.500 3 12l5.500 5.500M15.500 6.500 21 12l-5.500 5.500"/></g></g><path fill="#8d8fb0" d="M504.5 208.52 l1.38 1.38 l-1.38 1.38 l-1.38 -1.38 z"/><text x="504.5" y="207.3" text-anchor="middle" font-family='"Liberation Sans", sans-serif' font-size="2.700" fill="#7a7b90">Tool</text><text x="504.5" y="232.66" text-anchor="middle" font-family='"Liberation Sans", sans-serif' font-size="3.6" font-weight="bold" fill="#ededed">parents_list</text><circle cx="533" cy="218.8" r="8.9" fill="#2a2b3d" stroke="#50516a" stroke-width="0.6"/><g transform="translate(529.18 214.98) scale(0.32)"><g fill="none" stroke="#ececec" stroke-width="2.400" stroke-linecap="round" stroke-linejoin="round"><path d="M8.500 6.500 3 12l5.500 5.500M15.500 6.500 21 12l-5.500 5.500"/></g></g><path fill="#8d8fb0" d="M533 208.52 l1.38 1.38 l-1.38 1.38 l-1.38 -1.38 z"/><text x="533" y="207.3" text-anchor="middle" font-family='"Liberation Sans", sans-serif' font-size="2.700" fill="#7a7b90">Tool</text><text x="533" y="232.66" text-anchor="middle" font-family='"Liberation Sans", sans-serif' font-size="3.6" font-weight="bold" fill="#ededed">payments_list</text><circle cx="590" cy="218.8" r="8.9" fill="#2a2b3d" stroke="#50516a" stroke-width="0.6"/><g transform="translate(586.18 214.98) scale(0.32)"><g fill="none" stroke="#ececec" stroke-width="2.400" stroke-linecap="round" stroke-linejoin="round"><path d="M8.500 6.500 3 12l5.500 5.500M15.500 6.500 21 12l-5.500 5.500"/></g></g><path fill="#8d8fb0" d="M590 208.52 l1.38 1.38 l-1.38 1.38 l-1.38 -1.38 z"/><text x="590" y="207.3" text-anchor="middle" font-family='"Liberation Sans", sans-serif' font-size="2.700" fill="#7a7b90">Tool</text><text x="590" y="232.66" text-anchor="middle" font-family='"Liberation Sans", sans-serif' font-size="3.6" font-weight="bold" fill="#ededed">shdl_tool</text><circle cx="625.3" cy="218.8" r="8.9" fill="#2a2b3d" stroke="#50516a" stroke-width="0.6"/><g transform="translate(621.48 214.98) scale(0.32)"><rect x="5" y="2.500" width="14" height="19" rx="2" fill="none" stroke="#ececec" stroke-width="2"/><rect x="8" y="5.500" width="8" height="4" fill="#ececec"/><path stroke="#ececec" stroke-width="1.800" d="M8 13h2M14 13h2M8 17h2M14 17h2"/></g><path fill="#8d8fb0" d="M625.3 208.52 l1.38 1.38 l-1.38 1.38 l-1.38 -1.38 z"/><text x="625.3" y="207.3" text-anchor="middle" font-family='"Liberation Sans", sans-serif' font-size="2.700" fill="#7a7b90">Tool</text><text x="625.3" y="232.66" text-anchor="middle" font-family='"Liberation Sans", sans-serif' font-size="3.6" font-weight="bold" fill="#ededed">Calculator</text><rect x="428.4" y="260.4" width="21.2" height="21.2" rx="1.8" fill="#414141" stroke="#767677" stroke-width="0.66"/><g transform="translate(434.1 266.1) scale(0.41)"><g fill="none" stroke="#f4715f" stroke-width="2.4" stroke-linejoin="round"><rect x="2.5" y="3.5" width="19" height="17" rx="2.6"/><path d="M12 3.5v17M2.500 9.200h19M2.500 14.800h19"/></g></g><path fill="#c3c5cc" d="M425.38 269.41 l2.38 1.59 l-2.38 1.59 z"/><rect x="427.68" y="269.01" width="1.43" height="3.97" fill="#c3c5cc"/><circle cx="449.6" cy="271" r="1.91" fill="#c3c5cc"/><text x="447.8" y="264.64" text-anchor="end" font-family='"Liberation Sans", sans-serif' font-size="3.07" font-weight="bold" fill="#e6e6e6">▢1</text><text x="439" y="287.03" text-anchor="middle" font-family='"Liberation Sans", sans-serif' font-size="3.6" font-weight="bold" fill="#ededed">parent_pay</text><rect x="460.4" y="260.4" width="21.2" height="21.2" rx="1.8" fill="#414141" stroke="#767677" stroke-width="0.66"/><g transform="translate(466.1 266.1) scale(0.41)"><g fill="none" stroke="#f4715f" stroke-width="2.4" stroke-linejoin="round"><rect x="2.5" y="3.5" width="19" height="17" rx="2.6"/><path d="M12 3.5v17M2.500 9.200h19M2.500 14.800h19"/></g></g><path fill="#c3c5cc" d="M457.38 269.41 l2.38 1.59 l-2.38 1.59 z"/><rect x="459.68" y="269.01" width="1.43" height="3.97" fill="#c3c5cc"/><circle cx="481.6" cy="271" r="1.91" fill="#c3c5cc"/><text x="479.8" y="264.64" text-anchor="end" font-family='"Liberation Sans", sans-serif' font-size="3.07" font-weight="bold" fill="#e6e6e6">▢1</text><text x="471" y="287.03" text-anchor="middle" font-family='"Liberation Sans", sans-serif' font-size="3.6" font-weight="bold" fill="#ededed">child_shdl</text><rect x="492.4" y="260.4" width="21.2" height="21.2" rx="1.8" fill="#414141" stroke="#767677" stroke-width="0.66"/><g transform="translate(498.1 266.1) scale(0.41)"><g fill="none" stroke="#f4715f" stroke-width="2.4" stroke-linejoin="round"><rect x="2.5" y="3.5" width="19" height="17" rx="2.6"/><path d="M12 3.5v17M2.500 9.200h19M2.500 14.800h19"/></g></g><path fill="#c3c5cc" d="M489.38 269.41 l2.38 1.59 l-2.38 1.59 z"/><rect x="491.68" y="269.01" width="1.43" height="3.97" fill="#c3c5cc"/><circle cx="513.6" cy="271" r="1.91" fill="#c3c5cc"/><text x="511.8" y="264.64" text-anchor="end" font-family='"Liberation Sans", sans-serif' font-size="3.07" font-weight="bold" fill="#e6e6e6">▢1</text><text x="503" y="287.03" text-anchor="middle" font-family='"Liberation Sans", sans-serif' font-size="3.6" font-weight="bold" fill="#ededed">КонцертыTBL</text><rect x="438.9" y="306.4" width="21.2" height="21.2" rx="1.8" fill="#414141" stroke="#767677" stroke-width="0.66"/><g transform="translate(445.05 312.55) scale(0.37)"><text x="14.700" y="17.800" text-anchor="middle" font-family=""Liberation Sans", sans-serif" font-size="27.5" fill="#f5a02a" letter-spacing="5.4">{}</text></g><path fill="#c3c5cc" d="M435.88 315.41 l2.38 1.59 l-2.38 1.59 z"/><rect x="438.18" y="315.01" width="1.43" height="3.97" fill="#c3c5cc"/><circle cx="460.1" cy="317" r="1.91" fill="#c3c5cc"/><text x="458.3" y="310.64" text-anchor="end" font-family='"Liberation Sans", sans-serif' font-size="3.07" font-weight="bold" fill="#e6e6e6">▢1</text><text x="449.5" y="333.03" text-anchor="middle" font-family='"Liberation Sans", sans-serif' font-size="3.6" font-weight="bold" fill="#ededed">child_shdl_JS</text><rect x="477.9" y="306.4" width="21.2" height="21.2" rx="1.8" fill="#414141" stroke="#767677" stroke-width="0.66"/><g transform="translate(484.05 312.55) scale(0.37)"><text x="14.700" y="17.800" text-anchor="middle" font-family=""Liberation Sans", sans-serif" font-size="27.5" fill="#f5a02a" letter-spacing="5.4">{}</text></g><path fill="#c3c5cc" d="M474.88 315.41 l2.38 1.59 l-2.38 1.59 z"/><rect x="477.18" y="315.01" width="1.43" height="3.97" fill="#c3c5cc"/><circle cx="499.1" cy="317" r="1.91" fill="#c3c5cc"/><text x="497.3" y="310.64" text-anchor="end" font-family='"Liberation Sans", sans-serif' font-size="3.07" font-weight="bold" fill="#e6e6e6">▢1</text><text x="488.5" y="333.03" text-anchor="middle" font-family='"Liberation Sans", sans-serif' font-size="3.6" font-weight="bold" fill="#ededed">parent_pay_JS</text><rect x="520.9" y="306.4" width="21.2" height="21.2" rx="1.8" fill="#414141" stroke="#767677" stroke-width="0.66"/><g transform="translate(527.05 312.55) scale(0.37)"><text x="14.700" y="17.800" text-anchor="middle" font-family=""Liberation Sans", sans-serif" font-size="27.5" fill="#f5a02a" letter-spacing="5.4">{}</text></g><path fill="#c3c5cc" d="M517.88 315.41 l2.38 1.59 l-2.38 1.59 z"/><rect x="520.18" y="315.01" width="1.43" height="3.97" fill="#c3c5cc"/><circle cx="542.1" cy="317" r="1.91" fill="#c3c5cc"/><text x="531.5" y="333.03" text-anchor="middle" font-family='"Liberation Sans", sans-serif' font-size="3.6" font-weight="bold" fill="#ededed">КонцертыJS</text><rect x="577.59" y="274.4" width="49.82" height="21.2" rx="1.8" fill="#414141" stroke="#767677" stroke-width="0.66"/><g transform="translate(581.42 280.77) scale(0.35)"><g fill="none" stroke="#f2f2f2" stroke-width="2" stroke-linejoin="round" stroke-linecap="round"><rect x="4" y="8" width="16" height="12" rx="3"/><path d="M12 8V4.500M1.800 13v3M22.200 13v3"/></g><circle cx="12" cy="3.600" r="1.600" fill="#f2f2f2"/><circle cx="8.800" cy="13.500" r="1.700" fill="#f2f2f2"/><circle cx="15.200" cy="13.500" r="1.700" fill="#f2f2f2"/></g><path fill="#c3c5cc" d="M574.57 283.41 l2.38 1.59 l-2.38 1.59 z"/><rect x="576.87" y="283.01" width="1.43" height="3.97" fill="#c3c5cc"/><circle cx="627.41" cy="285" r="1.91" fill="#c3c5cc"/><text x="625.61" y="278.64" text-anchor="end" font-family='"Liberation Sans", sans-serif' font-size="3.07" font-weight="bold" fill="#e6e6e6">1</text><text x="594.55" y="284.28" font-family='"Liberation Sans", sans-serif' font-size="3.6" font-weight="bold" fill="#ededed">AI Agent для</text><text x="594.55" y="288.24" font-family='"Liberation Sans", sans-serif' font-size="3.6" font-weight="bold" fill="#ededed">Родителей</text><path fill="#8d8fb0" d="M587 294.1l1.500 1.500-1.500 1.500-1.500-1.500z"/><path fill="#8d8fb0" d="M607.5 294.1l1.500 1.500-1.500 1.500-1.500-1.500z"/><path fill="#8d8fb0" d="M618 294.1l1.500 1.500-1.500 1.500-1.500-1.500z"/><text x="587" y="301" text-anchor="middle" font-family='"Liberation Sans", sans-serif' font-size="2.8" fill="#8a7fb0">Chat Model*</text><text x="607.5" y="301" text-anchor="middle" font-family='"Liberation Sans", sans-serif' font-size="2.8" fill="#7a7b90">Memory</text><text x="618" y="301" text-anchor="middle" font-family='"Liberation Sans", sans-serif' font-size="2.8" fill="#7a7b90">Tool</text><rect x="644.9" y="274.4" width="21.2" height="21.2" rx="1.8" fill="#414141" stroke="#767677" stroke-width="0.66"/><g transform="translate(651.05 280.55) scale(0.37)"><circle cx="12" cy="12" r="12" fill="#2ca7e4"/><path fill="#fff" d="M5.3 11.8 17.4 7.1c.6-.2 1.1.1.9 1l-2.1 9.7c-.1.7-.6.9-1.2.6l-3.1-2.3-1.5 1.5c-.2.2-.3.3-.6.3l.2-3.2 5.8-5.3c.3-.2-.1-.4-.4-.2l-7.2 4.600-3.100-1c-.7-.2-.7-.7.2-1z"/></g><path fill="#c3c5cc" d="M641.88 283.41 l2.38 1.59 l-2.38 1.59 z"/><rect x="644.18" y="283.01" width="1.43" height="3.97" fill="#c3c5cc"/><circle cx="666.1" cy="285" r="1.91" fill="#c3c5cc"/><text x="655.5" y="301.03" text-anchor="middle" font-family='"Liberation Sans", sans-serif' font-size="3.6" font-weight="bold" fill="#ededed">Ответ родителю</text><text x="655.5" y="305.6" text-anchor="middle" font-family='"Liberation Sans", sans-serif' font-size="3.13" fill="#8a8b8f">sendMessage: message</text><rect x="684.4" y="274.4" width="21.2" height="21.2" rx="1.8" fill="#414141" stroke="#2c7a57" stroke-width="0.66"/><g transform="translate(690.55 280.55) scale(0.37)"><circle cx="12" cy="12" r="12" fill="#2ca7e4"/><path fill="#fff" d="M5.3 11.8 17.4 7.1c.6-.2 1.1.1.9 1l-2.1 9.7c-.1.7-.6.9-1.2.6l-3.1-2.3-1.5 1.5c-.2.2-.3.3-.6.3l.2-3.2 5.8-5.3c.3-.2-.1-.4-.4-.2l-7.2 4.600-3.100-1c-.7-.2-.7-.7.2-1z"/></g><path fill="#c3c5cc" d="M681.38 283.41 l2.38 1.59 l-2.38 1.59 z"/><rect x="683.68" y="283.01" width="1.43" height="3.97" fill="#c3c5cc"/><circle cx="705.6" cy="285" r="1.91" fill="#c3c5cc"/><path d="M701.36 293.27 l0.95 0.95 l1.91 -2.12" fill="none" stroke="#2c8a5f" stroke-width="0.64"/><text x="695" y="301.03" text-anchor="middle" font-family='"Liberation Sans", sans-serif' font-size="3.6" font-weight="bold" fill="#ededed">Ответ в ЛОГ</text><text x="695" y="305.6" text-anchor="middle" font-family='"Liberation Sans", sans-serif' font-size="3.13" fill="#8a8b8f">sendMessage: message</text><rect x="687.4" y="323.9" width="21.2" height="21.2" rx="1.8" fill="#414141" stroke="#2c7a57" stroke-width="0.66"/><g transform="translate(693.1 329.6) scale(0.41)"><g fill="none" stroke="#f4715f" stroke-width="2.4" stroke-linejoin="round"><rect x="2.5" y="3.5" width="19" height="17" rx="2.6"/><path d="M12 3.5v17M2.500 9.200h19M2.500 14.800h19"/></g></g><path fill="#c3c5cc" d="M684.38 332.91 l2.38 1.59 l-2.38 1.59 z"/><rect x="686.68" y="332.51" width="1.43" height="3.97" fill="#c3c5cc"/><circle cx="708.6" cy="334.5" r="1.91" fill="#c3c5cc"/><path d="M704.36 342.77 l0.95 0.95 l1.91 -2.12" fill="none" stroke="#2c8a5f" stroke-width="0.64"/><text x="698" y="350.53" text-anchor="middle" font-family='"Liberation Sans", sans-serif' font-size="3.6" font-weight="bold" fill="#ededed">Добавить диалог</text><circle cx="558" cy="336.3" r="8.9" fill="#2a2b3d" stroke="#50516a" stroke-width="0.6"/><g transform="translate(554.18 332.48) scale(0.32)"><path fill="#4f6cf7" d="M2.300 13.500C2.300 9.600 5.800 7.300 9.500 7.300c2.600 0 4.700 1.100 6.100 3.100 2 0 3.500-1.500 3.900-3.900.400-.600 1-.600 1.500-.100.600.500 1.500.500 2.100 0 .100 3.100-1.400 5.200-3.600 6.200-.500 4.100-4 7.100-8.500 7.100-5 0-8.800-2.500-8.800-6.200z"/><path fill="#2a2b3d" d="M6.200 11.200c1.700-.300 3.300.600 4.300 2.100.800 1.200 1.700 2.200 2.900 3.100-1.900.300-3.600-.300-4.700-1.800.300 1 .100 1.600-.700 1.600-1.700-.700-2.700-2.500-1.800-5z"/><circle cx="13.200" cy="11.800" r=".9" fill="#2a2b3d"/></g><path fill="#8d8fb0" d="M558 326.02 l1.38 1.38 l-1.38 1.38 l-1.38 -1.38 z"/><text x="558" y="324.8" text-anchor="middle" font-family='"Liberation Sans", sans-serif' font-size="2.700" fill="#7a7b90">Model</text><text x="558" y="350.16" text-anchor="middle" font-family='"Liberation Sans", sans-serif' font-size="3.6" font-weight="bold" fill="#ededed">Поддержка</text><rect x="424.9" y="373.9" width="21.2" height="21.2" rx="1.8" fill="#414141" stroke="#2c7a57" stroke-width="0.66"/><g transform="translate(431.05 380.05) scale(0.37)"><text x="14.700" y="17.800" text-anchor="middle" font-family=""Liberation Sans", sans-serif" font-size="27.5" fill="#f5a02a" letter-spacing="5.4">{}</text></g><path fill="#c3c5cc" d="M421.88 382.91 l2.38 1.59 l-2.38 1.59 z"/><rect x="424.18" y="382.51" width="1.43" height="3.97" fill="#c3c5cc"/><circle cx="446.1" cy="384.5" r="1.91" fill="#c3c5cc"/><path d="M441.86 392.77 l0.95 0.95 l1.91 -2.12" fill="none" stroke="#2c8a5f" stroke-width="0.64"/><text x="444.3" y="378.14" text-anchor="end" font-family='"Liberation Sans", sans-serif' font-size="3.07" font-weight="bold" fill="#e6e6e6">▢1</text><text x="435.5" y="400.53" text-anchor="middle" font-family='"Liberation Sans", sans-serif' font-size="3.6" font-weight="bold" fill="#ededed">Участник</text><rect x="463.89" y="373.9" width="49.82" height="21.2" rx="1.8" fill="#414141" stroke="#2c7a57" stroke-width="0.66"/><g transform="translate(467.72 380.27) scale(0.35)"><g fill="none" stroke="#f2f2f2" stroke-width="2" stroke-linejoin="round" stroke-linecap="round"><rect x="4" y="8" width="16" height="12" rx="3"/><path d="M12 8V4.500M1.800 13v3M22.200 13v3"/></g><circle cx="12" cy="3.600" r="1.600" fill="#f2f2f2"/><circle cx="8.800" cy="13.500" r="1.700" fill="#f2f2f2"/><circle cx="15.200" cy="13.500" r="1.700" fill="#f2f2f2"/></g><path fill="#c3c5cc" d="M460.87 382.91 l2.38 1.59 l-2.38 1.59 z"/><rect x="463.17" y="382.51" width="1.43" height="3.97" fill="#c3c5cc"/><circle cx="513.71" cy="384.5" r="1.91" fill="#c3c5cc"/><path d="M509.47 392.77 l0.95 0.95 l1.91 -2.12" fill="none" stroke="#2c8a5f" stroke-width="0.64"/><text x="511.91" y="378.14" text-anchor="end" font-family='"Liberation Sans", sans-serif' font-size="3.07" font-weight="bold" fill="#e6e6e6">1</text><text x="480.85" y="385.76" font-family='"Liberation Sans", sans-serif' font-size="3.6" font-weight="bold" fill="#ededed">Концерты</text><path fill="#8d8fb0" d="M471 393.6l1.500 1.500-1.500 1.500-1.500-1.500z"/><path fill="#8d8fb0" d="M492 393.6l1.500 1.500-1.500 1.500-1.500-1.500z"/><path fill="#8d8fb0" d="M504 393.6l1.500 1.500-1.500 1.500-1.500-1.500z"/><text x="471" y="400.5" text-anchor="middle" font-family='"Liberation Sans", sans-serif' font-size="2.8" fill="#8a7fb0">Chat Model*</text><text x="492" y="400.5" text-anchor="middle" font-family='"Liberation Sans", sans-serif' font-size="2.8" fill="#7a7b90">Memory</text><text x="504" y="400.5" text-anchor="middle" font-family='"Liberation Sans", sans-serif' font-size="2.8" fill="#7a7b90">Tool</text><rect x="534.9" y="362.9" width="21.2" height="21.2" rx="1.8" fill="#414141" stroke="#2c7a57" stroke-width="0.66"/><g transform="translate(541.05 369.05) scale(0.37)"><circle cx="12" cy="12" r="12" fill="#2ca7e4"/><path fill="#fff" d="M5.3 11.8 17.4 7.1c.6-.2 1.1.1.9 1l-2.1 9.7c-.1.7-.6.9-1.2.6l-3.1-2.3-1.5 1.5c-.2.2-.3.3-.6.3l.2-3.2 5.8-5.3c.3-.2-.1-.4-.4-.2l-7.2 4.600-3.100-1c-.7-.2-.7-.7.2-1z"/></g><path fill="#c3c5cc" d="M531.88 371.91 l2.38 1.59 l-2.38 1.59 z"/><rect x="534.18" y="371.51" width="1.43" height="3.97" fill="#c3c5cc"/><circle cx="556.1" cy="373.5" r="1.91" fill="#c3c5cc"/><path d="M551.86 381.77 l0.95 0.95 l1.91 -2.12" fill="none" stroke="#2c8a5f" stroke-width="0.64"/><text x="545.5" y="389.53" text-anchor="middle" font-family='"Liberation Sans", sans-serif' font-size="3.6" font-weight="bold" fill="#ededed">О концертах</text><text x="545.5" y="394.1" text-anchor="middle" font-family='"Liberation Sans", sans-serif' font-size="3.13" fill="#8a8b8f">sendMessage: message</text><circle cx="480" cy="422" r="8.9" fill="#2a2b3d" stroke="#2f6e57" stroke-width="0.6"/><g transform="translate(476.18 418.18) scale(0.32)"><path fill="#4f6cf7" d="M2.300 13.500C2.300 9.600 5.800 7.300 9.500 7.300c2.600 0 4.700 1.100 6.100 3.100 2 0 3.500-1.500 3.900-3.900.400-.600 1-.600 1.500-.100.600.500 1.500.500 2.100 0 .100 3.100-1.400 5.200-3.600 6.200-.500 4.100-4 7.100-8.500 7.100-5 0-8.800-2.500-8.800-6.200z"/><path fill="#2a2b3d" d="M6.200 11.200c1.700-.300 3.300.600 4.300 2.100.800 1.200 1.700 2.200 2.900 3.100-1.900.300-3.600-.300-4.700-1.800.300 1 .100 1.600-.700 1.600-1.700-.700-2.700-2.500-1.800-5z"/><circle cx="13.200" cy="11.800" r=".9" fill="#2a2b3d"/></g><path fill="#8d8fb0" d="M480 411.72 l1.38 1.38 l-1.38 1.38 l-1.38 -1.38 z"/><text x="480" y="410.5" text-anchor="middle" font-family='"Liberation Sans", sans-serif' font-size="2.700" fill="#7a7b90">Model</text><text x="480" y="435.86" text-anchor="middle" font-family='"Liberation Sans", sans-serif' font-size="3.6" font-weight="bold" fill="#ededed">Поддержка1</text><circle cx="558" cy="428.3" r="8.9" fill="#2a2b3d" stroke="#2f6e57" stroke-width="0.6"/><g transform="translate(554.18 424.48) scale(0.32)"><g fill="none" stroke="#ececec" stroke-width="1.900"><ellipse cx="12" cy="6" rx="7.500" ry="3"/><path d="M4.500 6v12c0 1.700 3.400 3 7.500 3s7.500-1.300 7.500-3V6M4.500 12c0 1.700 3.400 3 7.500 3s7.500-1.300 7.500-3"/></g></g><path fill="#8d8fb0" d="M558 418.02 l1.38 1.38 l-1.38 1.38 l-1.38 -1.38 z"/><text x="558" y="416.8" text-anchor="middle" font-family='"Liberation Sans", sans-serif' font-size="2.700" fill="#7a7b90">Memory</text><text x="558" y="442.16" text-anchor="middle" font-family='"Liberation Sans", sans-serif' font-size="3.6" font-weight="bold" fill="#ededed">Simple Memory</text><rect x="147.9" y="366.4" width="21.2" height="21.2" rx="1.8" fill="#414141" stroke="#767677" stroke-width="0.66"/><g transform="translate(153.6 372.1) scale(0.41)"><g fill="none" stroke="#f4715f" stroke-width="2.4" stroke-linejoin="round"><rect x="2.5" y="3.5" width="19" height="17" rx="2.6"/><path d="M12 3.5v17M2.500 9.200h19M2.500 14.800h19"/></g></g><path fill="#c3c5cc" d="M144.88 375.41 l2.38 1.59 l-2.38 1.59 z"/><rect x="147.18" y="375.01" width="1.43" height="3.97" fill="#c3c5cc"/><circle cx="169.1" cy="377" r="1.91" fill="#c3c5cc"/><text x="167.3" y="370.64" text-anchor="end" font-family='"Liberation Sans", sans-serif' font-size="3.07" font-weight="bold" fill="#e6e6e6">▢1</text><text x="158.5" y="393.03" text-anchor="middle" font-family='"Liberation Sans", sans-serif' font-size="3.6" font-weight="bold" fill="#ededed">child_shdl1</text><rect x="183.59" y="366.4" width="49.82" height="21.2" rx="1.8" fill="#414141" stroke="#767677" stroke-width="0.66"/><g transform="translate(187.42 372.77) scale(0.35)"><g fill="none" stroke="#f2f2f2" stroke-width="2" stroke-linejoin="round" stroke-linecap="round"><rect x="4" y="8" width="16" height="12" rx="3"/><path d="M12 8V4.500M1.800 13v3M22.200 13v3"/></g><circle cx="12" cy="3.600" r="1.600" fill="#f2f2f2"/><circle cx="8.800" cy="13.500" r="1.700" fill="#f2f2f2"/><circle cx="15.200" cy="13.500" r="1.700" fill="#f2f2f2"/></g><path fill="#c3c5cc" d="M180.57 375.41 l2.38 1.59 l-2.38 1.59 z"/><rect x="182.87" y="375.01" width="1.43" height="3.97" fill="#c3c5cc"/><circle cx="233.41" cy="377" r="1.91" fill="#c3c5cc"/><text x="231.61" y="370.64" text-anchor="end" font-family='"Liberation Sans", sans-serif' font-size="3.07" font-weight="bold" fill="#e6e6e6">1</text><text x="200.55" y="376.28" font-family='"Liberation Sans", sans-serif' font-size="3.6" font-weight="bold" fill="#ededed">AI Agent для</text><text x="200.55" y="380.24" font-family='"Liberation Sans", sans-serif' font-size="3.6" font-weight="bold" fill="#ededed">Детей</text><path fill="#8d8fb0" d="M192 386.1l1.500 1.500-1.500 1.500-1.500-1.500z"/><path fill="#8d8fb0" d="M213 386.1l1.500 1.500-1.500 1.500-1.500-1.500z"/><path fill="#8d8fb0" d="M224 386.1l1.500 1.500-1.500 1.500-1.500-1.500z"/><text x="192" y="393" text-anchor="middle" font-family='"Liberation Sans", sans-serif' font-size="2.8" fill="#8a7fb0">Chat Model*</text><text x="213" y="393" text-anchor="middle" font-family='"Liberation Sans", sans-serif' font-size="2.8" fill="#7a7b90">Memory</text><text x="224" y="393" text-anchor="middle" font-family='"Liberation Sans", sans-serif' font-size="2.8" fill="#7a7b90">Tool</text><rect x="243.9" y="366.4" width="21.2" height="21.2" rx="1.8" fill="#414141" stroke="#767677" stroke-width="0.66"/><g transform="translate(250.05 372.55) scale(0.37)"><circle cx="12" cy="12" r="12" fill="#2ca7e4"/><path fill="#fff" d="M5.3 11.8 17.4 7.1c.6-.2 1.1.1.9 1l-2.1 9.7c-.1.7-.6.9-1.2.6l-3.1-2.3-1.5 1.5c-.2.2-.3.3-.6.3l.2-3.2 5.8-5.3c.3-.2-.1-.4-.4-.2l-7.2 4.600-3.100-1c-.7-.2-.7-.7.2-1z"/></g><path fill="#c3c5cc" d="M240.88 375.41 l2.38 1.59 l-2.38 1.59 z"/><rect x="243.18" y="375.01" width="1.43" height="3.97" fill="#c3c5cc"/><circle cx="265.1" cy="377" r="1.91" fill="#c3c5cc"/><text x="254.5" y="393.03" text-anchor="middle" font-family='"Liberation Sans", sans-serif' font-size="3.6" font-weight="bold" fill="#ededed">Ответ Ребёнку</text><text x="254.5" y="397.6" text-anchor="middle" font-family='"Liberation Sans", sans-serif' font-size="3.13" fill="#8a8b8f">sendMessage: message</text><rect x="282.9" y="366.4" width="21.2" height="21.2" rx="1.8" fill="#414141" stroke="#767677" stroke-width="0.66"/><g transform="translate(289.05 372.55) scale(0.37)"><circle cx="12" cy="12" r="12" fill="#2ca7e4"/><path fill="#fff" d="M5.3 11.8 17.4 7.1c.6-.2 1.1.1.9 1l-2.1 9.7c-.1.7-.6.9-1.2.6l-3.1-2.3-1.5 1.5c-.2.2-.3.3-.6.3l.2-3.2 5.8-5.3c.3-.2-.1-.4-.4-.2l-7.2 4.600-3.100-1c-.7-.2-.7-.7.2-1z"/></g><path fill="#c3c5cc" d="M279.88 375.41 l2.38 1.59 l-2.38 1.59 z"/><rect x="282.18" y="375.01" width="1.43" height="3.97" fill="#c3c5cc"/><circle cx="304.1" cy="377" r="1.91" fill="#c3c5cc"/><text x="293.5" y="393.03" text-anchor="middle" font-family='"Liberation Sans", sans-serif' font-size="3.6" font-weight="bold" fill="#ededed">Ответ в ЛОГ3</text><text x="293.5" y="397.6" text-anchor="middle" font-family='"Liberation Sans", sans-serif' font-size="3.13" fill="#8a8b8f">sendMessage: message</text><circle cx="178" cy="425" r="8.9" fill="#2a2b3d" stroke="#50516a" stroke-width="0.6"/><g transform="translate(174.18 421.18) scale(0.32)"><path fill="#4f6cf7" d="M2.300 13.500C2.300 9.600 5.800 7.300 9.500 7.300c2.600 0 4.700 1.100 6.100 3.100 2 0 3.500-1.500 3.900-3.900.400-.600 1-.600 1.500-.100.600.500 1.500.500 2.100 0 .100 3.100-1.400 5.200-3.600 6.200-.500 4.100-4 7.100-8.500 7.100-5 0-8.800-2.500-8.800-6.200z"/><path fill="#2a2b3d" d="M6.200 11.200c1.700-.300 3.300.600 4.300 2.100.800 1.200 1.700 2.200 2.900 3.100-1.900.300-3.600-.300-4.700-1.800.300 1 .100 1.600-.700 1.600-1.700-.700-2.700-2.500-1.800-5z"/><circle cx="13.200" cy="11.800" r=".9" fill="#2a2b3d"/></g><path fill="#8d8fb0" d="M178 414.72 l1.38 1.38 l-1.38 1.38 l-1.38 -1.38 z"/><text x="178" y="413.5" text-anchor="middle" font-family='"Liberation Sans", sans-serif' font-size="2.700" fill="#7a7b90">Model</text><text x="178" y="438.86" text-anchor="middle" font-family='"Liberation Sans", sans-serif' font-size="3.6" font-weight="bold" fill="#ededed">Spot</text><circle cx="206.3" cy="425" r="8.9" fill="#2a2b3d" stroke="#50516a" stroke-width="0.6"/><g transform="translate(202.48 421.18) scale(0.32)"><g fill="none" stroke="#ececec" stroke-width="1.900"><ellipse cx="12" cy="6" rx="7.500" ry="3"/><path d="M4.500 6v12c0 1.700 3.400 3 7.500 3s7.500-1.300 7.500-3V6M4.500 12c0 1.700 3.400 3 7.500 3s7.500-1.300 7.500-3"/></g></g><path fill="#8d8fb0" d="M206.3 414.72 l1.38 1.38 l-1.38 1.38 l-1.38 -1.38 z"/><text x="206.3" y="413.5" text-anchor="middle" font-family='"Liberation Sans", sans-serif' font-size="2.700" fill="#7a7b90">Memory</text><text x="206.3" y="438.86" text-anchor="middle" font-family='"Liberation Sans", sans-serif' font-size="3.6" font-weight="bold" fill="#ededed">Simple Memory3</text><circle cx="241.8" cy="425" r="8.9" fill="#2a2b3d" stroke="#50516a" stroke-width="0.6"/><g transform="translate(237.98 421.18) scale(0.32)"><g fill="none" stroke="#ececec" stroke-width="2.400" stroke-linecap="round" stroke-linejoin="round"><path d="M8.500 6.500 3 12l5.500 5.500M15.500 6.500 21 12l-5.500 5.500"/></g></g><path fill="#8d8fb0" d="M241.8 414.72 l1.38 1.38 l-1.38 1.38 l-1.38 -1.38 z"/><text x="241.8" y="413.5" text-anchor="middle" font-family='"Liberation Sans", sans-serif' font-size="2.700" fill="#7a7b90">Tool</text><text x="241.8" y="438.86" text-anchor="middle" font-family='"Liberation Sans", sans-serif' font-size="3.6" font-weight="bold" fill="#ededed">child_shdl_tool1</text><rect x="115.9" y="409.4" width="21.2" height="21.2" rx="1.8" fill="#414141" stroke="#767677" stroke-width="0.66"/><g transform="translate(122.05 415.55) scale(0.37)"><g fill="none" stroke="#3fae7c" stroke-width="2.200" stroke-linejoin="round" stroke-linecap="round"><path d="M12 2v3M12 12v10M8.500 22h7"/><path d="M5 5h13.500l3 3.500-3 3.500H5a2.500 2.500 0 0 1-2.500-2.500v-2A2.500 2.500 0 0 1 5 5z"/></g></g><path fill="#c3c5cc" d="M112.88 418.41 l2.38 1.59 l-2.38 1.59 z"/><rect x="115.18" y="418.01" width="1.43" height="3.97" fill="#c3c5cc"/><circle cx="137.1" cy="416.5" r="1.91" fill="#c3c5cc"/><circle cx="137.1" cy="423.5" r="1.91" fill="#c3c5cc"/><text x="135.3" y="413.64" text-anchor="end" font-family='"Liberation Sans", sans-serif' font-size="3.07" font-weight="bold" fill="#e6e6e6">1</text><text x="126.5" y="436.03" text-anchor="middle" font-family='"Liberation Sans", sans-serif' font-size="3.6" font-weight="bold" fill="#ededed">Дети?</text><rect x="180.09" y="462.4" width="49.82" height="21.2" rx="1.8" fill="#414141" stroke="#767677" stroke-width="0.66"/><g transform="translate(183.92 468.77) scale(0.35)"><g fill="none" stroke="#f2f2f2" stroke-width="2" stroke-linejoin="round" stroke-linecap="round"><rect x="4" y="8" width="16" height="12" rx="3"/><path d="M12 8V4.500M1.800 13v3M22.200 13v3"/></g><circle cx="12" cy="3.600" r="1.600" fill="#f2f2f2"/><circle cx="8.800" cy="13.500" r="1.700" fill="#f2f2f2"/><circle cx="15.200" cy="13.500" r="1.700" fill="#f2f2f2"/></g><path fill="#c3c5cc" d="M177.07 471.41 l2.38 1.59 l-2.38 1.59 z"/><rect x="179.37" y="471.01" width="1.43" height="3.97" fill="#c3c5cc"/><circle cx="229.91" cy="473" r="1.91" fill="#c3c5cc"/><text x="197.05" y="474.26" font-family='"Liberation Sans", sans-serif' font-size="3.6" font-weight="bold" fill="#ededed">Онбордет</text><path fill="#8d8fb0" d="M188.5 482.1l1.500 1.500-1.500 1.500-1.500-1.500z"/><path fill="#8d8fb0" d="M210 482.1l1.500 1.500-1.500 1.500-1.500-1.500z"/><path fill="#8d8fb0" d="M220.5 482.1l1.500 1.500-1.500 1.500-1.500-1.500z"/><text x="188.5" y="489" text-anchor="middle" font-family='"Liberation Sans", sans-serif' font-size="2.8" fill="#8a7fb0">Chat Model*</text><text x="210" y="489" text-anchor="middle" font-family='"Liberation Sans", sans-serif' font-size="2.8" fill="#7a7b90">Memory</text><text x="220.5" y="489" text-anchor="middle" font-family='"Liberation Sans", sans-serif' font-size="2.8" fill="#7a7b90">Tool</text><rect x="243.9" y="462.4" width="21.2" height="21.2" rx="1.8" fill="#414141" stroke="#767677" stroke-width="0.66"/><g transform="translate(250.05 468.55) scale(0.37)"><circle cx="12" cy="12" r="12" fill="#2ca7e4"/><path fill="#fff" d="M5.3 11.8 17.4 7.1c.6-.2 1.1.1.9 1l-2.1 9.7c-.1.7-.6.9-1.2.6l-3.1-2.3-1.5 1.5c-.2.2-.3.3-.6.3l.2-3.2 5.8-5.3c.3-.2-.1-.4-.4-.2l-7.2 4.600-3.100-1c-.7-.2-.7-.7.2-1z"/></g><path fill="#c3c5cc" d="M240.88 471.41 l2.38 1.59 l-2.38 1.59 z"/><rect x="243.18" y="471.01" width="1.43" height="3.97" fill="#c3c5cc"/><circle cx="265.1" cy="473" r="1.91" fill="#c3c5cc"/><text x="254.5" y="489.03" text-anchor="middle" font-family='"Liberation Sans", sans-serif' font-size="3.6" font-weight="bold" fill="#ededed">Новому пользователю</text><text x="254.5" y="493.6" text-anchor="middle" font-family='"Liberation Sans", sans-serif' font-size="3.13" fill="#8a8b8f">sendMessage: message</text><rect x="286.4" y="462.4" width="21.2" height="21.2" rx="1.8" fill="#414141" stroke="#767677" stroke-width="0.66"/><g transform="translate(292.55 468.55) scale(0.37)"><circle cx="12" cy="12" r="12" fill="#2ca7e4"/><path fill="#fff" d="M5.3 11.8 17.4 7.1c.6-.2 1.1.1.9 1l-2.1 9.7c-.1.7-.6.9-1.2.6l-3.1-2.3-1.5 1.5c-.2.2-.3.3-.6.3l.2-3.2 5.8-5.3c.3-.2-.1-.4-.4-.2l-7.2 4.600-3.100-1c-.7-.2-.7-.7.2-1z"/></g><path fill="#c3c5cc" d="M283.38 471.41 l2.38 1.59 l-2.38 1.59 z"/><rect x="285.68" y="471.01" width="1.43" height="3.97" fill="#c3c5cc"/><circle cx="307.6" cy="473" r="1.91" fill="#c3c5cc"/><text x="297" y="489.03" text-anchor="middle" font-family='"Liberation Sans", sans-serif' font-size="3.6" font-weight="bold" fill="#ededed">Ответ в ЛОГ1</text><text x="297" y="493.6" text-anchor="middle" font-family='"Liberation Sans", sans-serif' font-size="3.13" fill="#8a8b8f">sendMessage: message</text><circle cx="185" cy="513.8" r="8.9" fill="#2a2b3d" stroke="#50516a" stroke-width="0.6"/><g transform="translate(181.18 509.98) scale(0.32)"><path fill="#4f6cf7" d="M2.300 13.500C2.300 9.600 5.800 7.300 9.500 7.300c2.600 0 4.700 1.100 6.100 3.100 2 0 3.500-1.500 3.900-3.900.400-.600 1-.600 1.500-.100.600.500 1.500.500 2.100 0 .100 3.100-1.400 5.200-3.600 6.200-.500 4.100-4 7.100-8.500 7.100-5 0-8.800-2.500-8.800-6.200z"/><path fill="#2a2b3d" d="M6.200 11.200c1.700-.300 3.300.600 4.300 2.100.800 1.200 1.700 2.200 2.900 3.100-1.900.300-3.600-.300-4.700-1.800.300 1 .100 1.600-.700 1.600-1.700-.700-2.700-2.500-1.800-5z"/><circle cx="13.200" cy="11.800" r=".9" fill="#2a2b3d"/></g><path fill="#8d8fb0" d="M185 503.52 l1.38 1.38 l-1.38 1.38 l-1.38 -1.38 z"/><text x="185" y="502.3" text-anchor="middle" font-family='"Liberation Sans", sans-serif' font-size="2.700" fill="#7a7b90">Model</text><text x="185" y="527.66" text-anchor="middle" font-family='"Liberation Sans", sans-serif' font-size="3.6" font-weight="bold" fill="#ededed">Анбординг1</text><circle cx="210" cy="513.8" r="8.9" fill="#2a2b3d" stroke="#50516a" stroke-width="0.6"/><g transform="translate(206.18 509.98) scale(0.32)"><g fill="none" stroke="#ececec" stroke-width="1.900"><ellipse cx="12" cy="6" rx="7.500" ry="3"/><path d="M4.500 6v12c0 1.700 3.400 3 7.500 3s7.500-1.300 7.500-3V6M4.500 12c0 1.700 3.400 3 7.500 3s7.500-1.300 7.500-3"/></g></g><path fill="#8d8fb0" d="M210 503.52 l1.38 1.38 l-1.38 1.38 l-1.38 -1.38 z"/><text x="210" y="502.3" text-anchor="middle" font-family='"Liberation Sans", sans-serif' font-size="2.700" fill="#7a7b90">Memory</text><text x="210" y="527.66" text-anchor="middle" font-family='"Liberation Sans", sans-serif' font-size="3.6" font-weight="bold" fill="#ededed">Simple Memory2</text><circle cx="660.5" cy="418" r="8.9" fill="#2a2b3d" stroke="#50516a" stroke-width="0.6"/><g transform="translate(656.68 414.18) scale(0.32)"><g fill="none" stroke="#ececec" stroke-width="2.400" stroke-linecap="round" stroke-linejoin="round"><path d="M8.500 6.500 3 12l5.500 5.500M15.500 6.500 21 12l-5.500 5.500"/></g></g><path fill="#8d8fb0" d="M660.5 407.72 l1.38 1.38 l-1.38 1.38 l-1.38 -1.38 z"/><text x="660.5" y="406.5" text-anchor="middle" font-family='"Liberation Sans", sans-serif' font-size="2.700" fill="#7a7b90">Tool</text><text x="660.5" y="431.86" text-anchor="middle" font-family='"Liberation Sans", sans-serif' font-size="3.6" font-weight="bold" fill="#ededed">child_shdl_tool</text><circle cx="693" cy="418" r="8.9" fill="#2a2b3d" stroke="#50516a" stroke-width="0.6"/><g transform="translate(689.18 414.18) scale(0.32)"><g fill="none" stroke="#8b8c90" stroke-width="1.800"><circle cx="12" cy="12" r="9"/><path d="M12 3l5 9-5 9M12 3 7 12l5 9M4 8h16M4 16h16"/></g></g><path fill="#8d8fb0" d="M693 407.72 l1.38 1.38 l-1.38 1.38 l-1.38 -1.38 z"/><text x="693" y="406.5" text-anchor="middle" font-family='"Liberation Sans", sans-serif' font-size="2.700" fill="#7a7b90">Model</text><text x="693" y="431.86" text-anchor="middle" font-family='"Liberation Sans", sans-serif' font-size="3.6" font-weight="bold" fill="#ededed">OpenAI Chat Model</text><circle cx="628.8" cy="439.3" r="8.9" fill="#2a2b3d" stroke="#50516a" stroke-width="0.6"/><g transform="translate(624.98 435.48) scale(0.32)"><circle cx="12" cy="12" r="10" fill="#7c6fe0"/><g fill="none" stroke="#cfcaf7" stroke-width="1.500"><ellipse cx="12" cy="12" rx="4" ry="10"/><path d="M2 12h20"/></g></g><path fill="#8d8fb0" d="M628.8 429.02 l1.38 1.38 l-1.38 1.38 l-1.38 -1.38 z"/><text x="628.8" y="427.8" text-anchor="middle" font-family='"Liberation Sans", sans-serif' font-size="2.700" fill="#7a7b90">Tool</text><text x="628.8" y="453.16" text-anchor="middle" font-family='"Liberation Sans", sans-serif' font-size="3.6" font-weight="bold" fill="#ededed">msg_send</text><text x="628.8" y="457.66" text-anchor="middle" font-family='"Liberation Sans", sans-serif' font-size="3.06" fill="#8a8b8f">POST: localhost:5678/w...</text><circle cx="660.5" cy="446.3" r="8.9" fill="#2a2b3d" stroke="#50516a" stroke-width="0.6"/><g transform="translate(656.68 442.48) scale(0.32)"><circle cx="12" cy="12" r="10" fill="#7c6fe0"/><g fill="none" stroke="#cfcaf7" stroke-width="1.500"><ellipse cx="12" cy="12" rx="4" ry="10"/><path d="M2 12h20"/></g></g><path fill="#8d8fb0" d="M660.5 436.02 l1.38 1.38 l-1.38 1.38 l-1.38 -1.38 z"/><text x="660.5" y="434.8" text-anchor="middle" font-family='"Liberation Sans", sans-serif' font-size="2.700" fill="#7a7b90">Tool</text><text x="660.5" y="460.16" text-anchor="middle" font-family='"Liberation Sans", sans-serif' font-size="3.6" font-weight="bold" fill="#ededed">shedule2LS</text><text x="660.5" y="464.66" text-anchor="middle" font-family='"Liberation Sans", sans-serif' font-size="3.06" fill="#8a8b8f">GET: localhost:5678/w...</text><circle cx="692.5" cy="450" r="8.9" fill="#2a2b3d" stroke="#50516a" stroke-width="0.6"/><g transform="translate(688.68 446.18) scale(0.32)"><g fill="none" stroke="#ececec" stroke-width="2.400" stroke-linecap="round" stroke-linejoin="round"><path d="M8.500 6.500 3 12l5.500 5.500M15.500 6.500 21 12l-5.500 5.500"/></g></g><path fill="#8d8fb0" d="M692.5 439.72 l1.38 1.38 l-1.38 1.38 l-1.38 -1.38 z"/><text x="692.5" y="438.5" text-anchor="middle" font-family='"Liberation Sans", sans-serif' font-size="2.700" fill="#7a7b90">Tool</text><text x="692.5" y="463.86" text-anchor="middle" font-family='"Liberation Sans", sans-serif' font-size="3.6" font-weight="bold" fill="#ededed">parents_pay</text><circle cx="610.8" cy="475" r="8.9" fill="#2a2b3d" stroke="#50516a" stroke-width="0.6"/><g transform="translate(606.98 471.18) scale(0.32)"><circle cx="12" cy="12" r="10" fill="#7c6fe0"/><g fill="none" stroke="#cfcaf7" stroke-width="1.500"><ellipse cx="12" cy="12" rx="4" ry="10"/><path d="M2 12h20"/></g></g><path fill="#8d8fb0" d="M610.8 464.72 l1.38 1.38 l-1.38 1.38 l-1.38 -1.38 z"/><text x="610.8" y="463.5" text-anchor="middle" font-family='"Liberation Sans", sans-serif' font-size="2.700" fill="#7a7b90">Tool</text><text x="610.8" y="488.86" text-anchor="middle" font-family='"Liberation Sans", sans-serif' font-size="3.6" font-weight="bold" fill="#ededed">get_faq</text><text x="610.8" y="493.36" text-anchor="middle" font-family='"Liberation Sans", sans-serif' font-size="3.06" fill="#8a8b8f">GET: localhost:5678/w...</text><text x="660.5" y="406.8" text-anchor="middle" font-family='"Liberation Sans", sans-serif' font-size="2.8" fill="#7a7b90">Tool</text><text x="693" y="406.8" text-anchor="middle" font-family='"Liberation Sans", sans-serif' font-size="2.8" fill="#7a7b90">Model</text><text x="692.5" y="438.8" text-anchor="middle" font-family='"Liberation Sans", sans-serif' font-size="2.8" fill="#7a7b90">Tool</text><text x="73" y="236" text-anchor="middle" font-family='"Liberation Sans", sans-serif' font-size="2.7" fill="#b9babd">1 item</text><text x="114" y="236" text-anchor="middle" font-family='"Liberation Sans", sans-serif' font-size="2.7" fill="#b9babd">1 item</text><text x="155" y="232.5" text-anchor="middle" font-family='"Liberation Sans", sans-serif' font-size="2.7" fill="#b9babd">1 item</text><text x="233" y="193" text-anchor="middle" font-family='"Liberation Sans", sans-serif' font-size="2.7" fill="#b9babd">1 item</text><text x="187" y="216" text-anchor="middle" font-family='"Liberation Sans", sans-serif' font-size="2.7" fill="#b9babd">1 item</text><text x="243" y="229.5" text-anchor="middle" font-family='"Liberation Sans", sans-serif' font-size="2.7" fill="#b9babd">1 item</text><text x="272" y="250.5" text-anchor="middle" font-family='"Liberation Sans", sans-serif' font-size="2.7" fill="#b9babd">1 item</text><text x="290" y="279.5" text-anchor="middle" font-family='"Liberation Sans", sans-serif' font-size="2.7" fill="#b9babd">1 item</text><text x="302" y="303" text-anchor="middle" font-family='"Liberation Sans", sans-serif' font-size="2.7" fill="#b9babd">1 item</text><text x="353" y="329.5" text-anchor="middle" font-family='"Liberation Sans", sans-serif' font-size="2.7" fill="#b9babd">1 item</text><text x="340" y="300" text-anchor="middle" font-family='"Liberation Sans", sans-serif' font-size="2.7" fill="#b9babd">Концерты</text><text x="339" y="308" text-anchor="middle" font-family='"Liberation Sans", sans-serif' font-size="2.7" fill="#b9babd">Родитель</text><text x="455" y="382" text-anchor="middle" font-family='"Liberation Sans", sans-serif' font-size="2.7" fill="#b9babd">1 item</text><text x="525" y="376" text-anchor="middle" font-family='"Liberation Sans", sans-serif' font-size="2.7" fill="#b9babd">1 item</text><text x="582" y="356" text-anchor="middle" font-family='"Liberation Sans", sans-serif' font-size="2.7" fill="#b9babd">3 items total</text><text x="620" y="327" text-anchor="middle" font-family='"Liberation Sans", sans-serif' font-size="2.7" fill="#b9babd">1 item</text><text x="696" y="311.5" text-anchor="middle" font-family='"Liberation Sans", sans-serif' font-size="2.7" fill="#b9babd">1 item</text><text x="720" y="332" text-anchor="middle" font-family='"Liberation Sans", sans-serif' font-size="2.7" fill="#b9babd">1 item</text><text x="547" y="299" text-anchor="middle" font-family='"Liberation Sans", sans-serif' font-size="2.7" fill="#b9babd">3 items total</text><text x="527" y="405" text-anchor="middle" font-family='"Liberation Sans", sans-serif' font-size="2.7" fill="#b9babd">3 items total</text><rect x="450.500" y="532.800" width="98.700" height="1.600" fill="#b85d48"/></svg><div class="btn" style="left:7px;top:13.1px"><span>Изменить</span></div><svg style="position:absolute;left:14.75px;top:22.15px;width:15.5px;height:15.5px" viewBox="0 0 20 20" ><g fill="none" stroke="#101418" stroke-width="1.400" stroke-linejoin="round" stroke-linecap="round"><path d="M10 16.500H4.500a2 2 0 0 1-2-2v-10a2 2 0 0 1 2-2h10a2 2 0 0 1 2 2V8"/><path d="M3.500 15l5-5 2.500 2.200"/><circle cx="12.500" cy="6.500" r="1.100"/><path d="M11.500 18l.6-2.600 5.600-5.600 2 2-5.600 5.600z" fill="#101418"/></g></svg><svg style="position:absolute;left:107.8px;top:20.1px;width:19px;height:19px" viewBox="0 0 20 20" ><g fill="none" stroke="#ececec" stroke-width="1.8" stroke-linecap="round" stroke-linejoin="round"><path d="M3.100 11.200A7 7 0 1 1 12 16.700"/><path d="M12 12.600V16.700H16.200"/><circle cx="10" cy="10" r="1.700"/></g></svg><svg style="position:absolute;left:148.55px;top:21.35px;width:16.5px;height:16.5px" viewBox="0 0 20 20" ><g fill="none" stroke="#ececec" stroke-width="1.8" stroke-linecap="round" stroke-linejoin="round"><path d="M3 5h14M8 5V3.500h4V5M4.500 5l1 11.500a1.500 1.500 0 0 0 1.500 1.300h6a1.500 1.500 0 0 0 1.500-1.300L15.500 5M8.500 8.500v6M11.500 8.500v6"/></g></svg><svg style="position:absolute;left:188px;top:21.1px;width:17px;height:17px" viewBox="0 0 20 20" ><g fill="none" stroke="#ececec" stroke-width="1.8" stroke-linecap="round" stroke-linejoin="round"><path d="M5.500 7V4.500a1.500 1.500 0 0 1 1.500-1.500h6a1.500 1.500 0 0 1 1.500 1.500V7"/><rect x="2.500" y="7" width="15" height="7.500" rx="2"/><rect x="5.500" y="11" width="9" height="6" rx="1" fill="#202020"/></g></svg><div style="position:absolute;left:227.85px;top:29.15px;width:2.5px;height:2.5px;border-radius:50%;background:#ececec"></div><div style="position:absolute;left:234.75px;top:29.15px;width:2.5px;height:2.5px;border-radius:50%;background:#ececec"></div><div style="position:absolute;left:241.65px;top:29.15px;width:2.5px;height:2.5px;border-radius:50%;background:#ececec"></div><div class="ttl" style="left:280.5px;top:22.6px">Ванесса.jpg</div><svg style="position:absolute;left:509.95px;top:21.85px;width:15.5px;height:15.5px" viewBox="0 0 20 20" ><defs><linearGradient id="gph" x1="0" y1="0" x2="1" y2="1"><stop offset="0" stop-color="#2f6fe4"/><stop offset="1" stop-color="#1a4fc4"/></linearGradient></defs><rect x="2" y="2.500" width="16" height="15" rx="3" fill="url(#gph)"/><path d="M2 15l6.500-7 4 4.500 2-2 3.500 4v.5a3 3 0 0 1-3 3H5a3 3 0 0 1-3-3z" fill="#35c8f0"/><circle cx="13.500" cy="6" r="1.600" fill="#fff"/></svg><svg style="position:absolute;left:549.3px;top:21.3px;width:16px;height:16px" viewBox="0 0 20 20" ><defs><linearGradient id="gcl" x1="0" y1="0" x2="0" y2="1"><stop offset="0" stop-color="#b455f2"/><stop offset="1" stop-color="#6a2ad8"/></linearGradient></defs><path d="M2.500 6.500l14-3 .8 3.200-14 2.300z" fill="#c77cf6"/><rect x="2.500" y="7.500" width="15" height="10" rx="1.500" fill="url(#gcl)"/><path d="M2.500 11h15v2.500h-15z" fill="#d9a0fa" opacity=".55"/></svg><svg style="position:absolute;left:587.3px;top:19.9px;width:20px;height:20px" viewBox="0 0 20 20" ><path d="M6 15.500a4 4 0 0 1-.5-8 5.500 5.500 0 0 1 10-1 4.500 4.500 0 0 1 .5 9z" fill="#1f87e0"/><path d="M9 15.500l7-6a4.500 4.500 0 0 1 0 6z" fill="#0e63b8"/><path d="M4 3l12.500 14.500" stroke="#c8c8c8" stroke-width="1.500" stroke-linecap="round"/></svg><div style="position:absolute;left:624.6px;top:15.6px;width:1px;height:28px;background:#333"></div><svg style="position:absolute;left:644.1px;top:21.6px;width:15px;height:15px" viewBox="0 0 20 20" ><path d="M4 10h12" stroke="#ececec" stroke-width="1.700"/></svg><svg style="position:absolute;left:687.4px;top:22.1px;width:15px;height:15px" viewBox="0 0 20 20" ><rect x="4.500" y="4.500" width="11" height="11" rx="1.500" fill="none" stroke="#ececec" stroke-width="1.700"/></svg><svg style="position:absolute;left:730.7px;top:22.1px;width:15px;height:15px" viewBox="0 0 20 20" ><path d="M4 4l12 12M16 4L4 16" stroke="#ececec" stroke-width="1.600"/></svg><svg style="position:absolute;left:16px;top:547.2px;width:18px;height:18px" viewBox="0 0 20 20" ><g fill="none" stroke="#ececec" stroke-width="1.8" stroke-linecap="round" stroke-linejoin="round"><rect x="2.500" y="4" width="15" height="12" rx="2"/><path d="M2.500 12.500h15"/><path d="M5.500 14.300h1M9.500 14.300h1M13.500 14.300h1" stroke-width="1.200"/></g></svg><div style="position:absolute;left:52.5px;top:542.2px;width:1px;height:28px;background:#353535"></div><svg style="position:absolute;left:69px;top:547.2px;width:18px;height:18px" viewBox="0 0 20 20" ><g fill="none" stroke="#ececec" stroke-width="1.8" stroke-linecap="round" stroke-linejoin="round"><path d="M10 16.700 3.200 9.800a4.050 4.050 0 0 1 5.700-5.750L10 5.200l1.100-1.150a4.050 4.050 0 0 1 5.700 5.750z"/></g></svg><svg style="position:absolute;left:108.5px;top:547.2px;width:18px;height:18px" viewBox="0 0 20 20" ><g fill="none" stroke="#ececec" stroke-width="1.8" stroke-linecap="round" stroke-linejoin="round"><circle cx="10" cy="10" r="7.300"/><path d="M10 7v6" stroke-width="1.900"/></g></svg><svg style="position:absolute;left:145.8px;top:549.2px;width:15px;height:15px" viewBox="0 0 20 20" ><g fill="none" stroke="#7b7b7b" stroke-width="1.75" stroke-linecap="round" stroke-linejoin="round"><path d="M3 15.500V5.500a1.500 1.500 0 0 1 1.500-1.500h7M3 15.500h5"/><rect x="9" y="9" width="8" height="6.500" rx="1.200"/></g></svg><div class="tb" style="left:169.5px;top:549px">1182 x 796</div><svg style="position:absolute;left:238px;top:549.2px;width:15px;height:15px" viewBox="0 0 20 20" ><g fill="none" stroke="#7b7b7b" stroke-width="1.75" stroke-linecap="round" stroke-linejoin="round"><path d="M4.500 3.500h9l3 3v9a1.500 1.500 0 0 1-1.500 1.500h-10.500a1.500 1.500 0 0 1-1.500-1.500v-10.500a1.500 1.500 0 0 1 1.500-1.500z"/><path d="M6.500 3.500v4h6v-4M6 17v-5h8v5"/></g></svg><div class="tb" style="left:260.5px;top:549px">206.6 КБ</div><svg style="position:absolute;left:352.55px;top:547.45px;width:17.5px;height:17.5px" viewBox="0 0 20 20" ><g fill="none" stroke="#ececec" stroke-width="1.8" stroke-linecap="round" stroke-linejoin="round"><path d="M3 7.500V6a3 3 0 0 1 3-3h1.500M12.500 3H14a3 3 0 0 1 3 3v1.500M17 12.500V14a3 3 0 0 1-3 3h-1.500M7.500 17H6a3 3 0 0 1-3-3v-1.500"/><circle cx="10" cy="10" r="1.700"/></g></svg><svg style="position:absolute;left:392.05px;top:547.45px;width:17.5px;height:17.5px" viewBox="0 0 20 20" ><g fill="none" stroke="#ececec" stroke-width="1.8" stroke-linecap="round" stroke-linejoin="round"><path d="M3 7.500V6a3 3 0 0 1 3-3h1.500M12.500 3H14a3 3 0 0 1 3 3v1.500M17 12.500V14a3 3 0 0 1-3 3h-1.500M7.500 17H6a3 3 0 0 1-3-3v-1.500"/><path d="M6.500 7.300h7M6.500 10h7M6.500 12.700h4.500" stroke-width="1.250"/></g></svg><svg style="position:absolute;left:552.3px;top:546.7px;width:19px;height:19px" viewBox="0 0 20 20" ><rect x="2" y="4" width="16" height="12" rx="1" fill="#ececec"/><rect x="3.500" y="5.500" width="13" height="9" fill="#202020"/><ellipse cx="10" cy="10" rx="3.600" ry="3" fill="#ececec"/><path fill="#ececec" d="M3.500 5.500h3l-3 2.500zM16.500 5.500h-3l3 2.500zM3.500 14.500h3l-3-2.500zM16.500 14.500h-3l3-2.500z"/></svg><div class="zb" style="left:581.3px;top:541.9px;width:81.2px"><span>67 %</span></div><svg style="position:absolute;left:638.8px;top:550.7px;width:11px;height:11px" viewBox="0 0 20 20" ><g fill="none" stroke="#ececec" stroke-width="1.8" stroke-linecap="round" stroke-linejoin="round"><path d="M5 8l5 5 5-5"/></g></svg><div style="position:absolute;left:673.5px;top:555.6px;width:2.6px;height:2.6px;border-radius:50%;background:#ececec"></div><div style="position:absolute;left:680.7px;top:555.6px;width:2.6px;height:2.6px;border-radius:50%;background:#ececec"></div><div style="position:absolute;left:687.9px;top:555.6px;width:2.6px;height:2.6px;border-radius:50%;background:#ececec"></div><div style="position:absolute;left:708px;top:542.2px;width:1px;height:28px;background:#353535"></div><svg style="position:absolute;left:726px;top:546.7px;width:19px;height:19px" viewBox="0 0 20 20" ><g fill="none" stroke="#ececec" stroke-width="1.8" stroke-linecap="round" stroke-linejoin="round"><path d="M3.500 16.500l13-13M11 3.500h5.500V9M9 16.500H3.500V11"/></g></svg><div class="abs" style="left:744.500px;top:0;width:798.500px;height:512px;background:#202020;box-shadow:0 3px 8px rgba(0,0,0,.5)"></div><div class="abs" style="left:744.500px;top:467px;width:798.500px;height:45px;background:#262626"></div><svg style="position:absolute;left:745px;top:52.5px;width:798px;height:407px;overflow:hidden" viewBox="745 52.5 798 407"><defs><pattern id="p2" x="1478.11" y="56.11" width="6.38" height="6.38" patternUnits="userSpaceOnUse"><circle cx="3.19" cy="3.19" r="0.65" fill="#525253"/></pattern></defs><rect x="745" y="52.5" width="798" height="407" fill="#2d2d2d"/><rect x="745" y="52.5" width="798" height="407" fill="url(#p2)"/><rect x="930" y="94.500" width="96.500" height="38.500" rx="1.500" fill="#5b4a1e"/><text x="935" y="105.2" font-family='"Liberation Sans", sans-serif' font-size="6.300" font-weight="bold" fill="#f1efe8">В удалении расписания</text><text x="935" y="114" font-family='"Liberation Sans", sans-serif' font-size="6.300" font-weight="bold" fill="#f1efe8">указать номер недели</text><rect x="1165.800" y="203" width="83.200" height="38" rx="1.500" fill="#5b4a1e"/><text x="1171" y="213.3" font-family='"Liberation Sans", sans-serif' font-size="6.500" font-weight="bold" fill="#f1efe8">Указать лист с нужной</text><text x="1171" y="221.6" font-family='"Liberation Sans", sans-serif' font-size="6.500" font-weight="bold" fill="#f1efe8">неделей</text><path d="M836 94.5 C852.5 94.5 849.5 139.2 866 139.2" fill="none" stroke="#a2a3a7" stroke-width="1.5" stroke-linecap="round" stroke-linejoin="round"/><path d="M828 190 C848.9 190 845.1 139.2 866 139.2" fill="none" stroke="#a2a3a7" stroke-width="1.5" stroke-linecap="round" stroke-linejoin="round"/><path d="M904.35 139.2 H936.65" fill="none" stroke="#a2a3a7" stroke-width="1.5" stroke-linecap="round" stroke-linejoin="round"/><path d="M974.35 139.2 H1013.15" fill="none" stroke="#a2a3a7" stroke-width="1.5" stroke-linecap="round" stroke-linejoin="round"/><path d="M1050.85 139.2 H1089.65" fill="none" stroke="#a2a3a7" stroke-width="1.5" stroke-linecap="round" stroke-linejoin="round"/><path d="M1127.35 139.2 H1178.95" fill="none" stroke="#a2a3a7" stroke-width="1.5" stroke-linecap="round" stroke-linejoin="round"/><path d="M1216.65 139.2 H1248.95" fill="none" stroke="#a2a3a7" stroke-width="1.5" stroke-linecap="round" stroke-linejoin="round"/><path d="M1286.65 139.2 H1319.15" fill="none" stroke="#a2a3a7" stroke-width="1.5" stroke-linecap="round" stroke-linejoin="round"/><path d="M1356.85 139.2 H1395.65" fill="none" stroke="#a2a3a7" stroke-width="1.5" stroke-linecap="round" stroke-linejoin="round"/><path d="M1433.35 139.2 H1478.65" fill="none" stroke="#a2a3a7" stroke-width="1.5" stroke-linecap="round" stroke-linejoin="round"/><path d="M1516.35 139.2 H1529.4 Q1534.4 139.2 1534.4 144.2 V186 Q1534.4 191 1529.4 191 H1166.7 Q1161.7 191 1161.7 196 V242.4 Q1161.7 247.4 1166.7 247.4 H1178.8" fill="none" stroke="#a2a3a7" stroke-width="1.5" stroke-linecap="round" stroke-linejoin="round"/><path fill="#c3c5cc" d="M1345 191l5.500-3v6z"/><path d="M1216.65 247.4 H1262.15" fill="none" stroke="#a2a3a7" stroke-width="1.5" stroke-linecap="round" stroke-linejoin="round"/><path d="M1299.85 247.4 H1344.65" fill="none" stroke="#a2a3a7" stroke-width="1.5" stroke-linecap="round" stroke-linejoin="round"/><path d="M1216.65 336.8 H1262.15" fill="none" stroke="#a2a3a7" stroke-width="1.5" stroke-linecap="round" stroke-linejoin="round"/><path d="M1299.85 336.8 H1344.65" fill="none" stroke="#a2a3a7" stroke-width="1.5" stroke-linecap="round" stroke-linejoin="round"/><path d="M1216.65 419.4 H1262.15" fill="none" stroke="#a2a3a7" stroke-width="1.5" stroke-linecap="round" stroke-linejoin="round"/><path d="M1299.85 419.4 H1344.65" fill="none" stroke="#a2a3a7" stroke-width="1.5" stroke-linecap="round" stroke-linejoin="round"/><path d="M1382.35 247.4 H1395 Q1400 247.4 1400 252.4 V294.6 Q1400 299.6 1395 299.6 H1166.7 Q1161.7 299.6 1161.7 304.6 V331.8 Q1161.7 336.8 1166.7 336.8 H1178.8" fill="none" stroke="#a2a3a7" stroke-width="1.5" stroke-linecap="round" stroke-linejoin="round"/><path fill="#c3c5cc" d="M1278 299.600l5.500-3v6z"/><path d="M1382.35 336.8 H1395 Q1400 336.8 1400 341.8 V383.6 Q1400 388.6 1395 388.6 H1166.7 Q1161.7 388.6 1161.7 393.6 V414.4 Q1161.7 419.4 1166.7 419.4 H1178.8" fill="none" stroke="#a2a3a7" stroke-width="1.5" stroke-linecap="round" stroke-linejoin="round"/><path fill="#c3c5cc" d="M1278 388.600l5.500-3v6z"/><path d="M1382.35 419.4 H1404.55" fill="none" stroke="#a2a3a7" stroke-width="0.75" stroke-linecap="round" stroke-linejoin="round"/><rect x="1404.55" y="415.25" width="8.29" height="8.29" rx="1.04" fill="#2d2d2d" stroke="#b9bbc2" stroke-width="0.75"/><path d="M1407.04 419.4 h3.32 M1408.7 417.74 v3.32" fill="none" stroke="#b9bbc2" stroke-width="0.57" stroke-linecap="round" stroke-linejoin="round"/><path d="M810.82 76 H831.36 Q834.5 76 834.5 79.14 V109.86 Q834.5 113 831.36 113 H810.82 Q797.5 113 797.5 99.68 V89.32 Q797.5 76 810.82 76 Z" fill="none" stroke="#6b6c6e" stroke-width="6.29" stroke-linejoin="round"/><path d="M810.82 76 H831.36 Q834.5 76 834.5 79.14 V109.86 Q834.5 113 831.36 113 H810.82 Q797.5 113 797.5 99.68 V89.32 Q797.5 76 810.82 76 Z" fill="#414141" stroke="#767677" stroke-width="1.15"/><path fill="#f0644f" d="M788.43 89.41 l-3.7 6.01 h2.78 l-1.39 4.62 l4.16 -6.48 h-2.78 z"/><g transform="translate(808.23 86.73) scale(0.65)"><g fill="none" stroke="#2fc39b" stroke-width="2.200" stroke-linecap="round" stroke-linejoin="round"><circle cx="12" cy="12" r="10"/><path d="M12 6.500V12l3.500 2.200"/></g></g><circle cx="834.5" cy="94.5" r="3.33" fill="#c3c5cc"/><text x="816" y="122.48" text-anchor="middle" font-family='"Liberation Sans", sans-serif' font-size="6.35" font-weight="bold" fill="#ededed">Schedule Trigger</text><path d="M803.72 171.15 H824.65 Q827.85 171.15 827.85 174.35 V205.65 Q827.85 208.85 824.65 208.85 H803.72 Q790.15 208.85 790.15 195.28 V184.72 Q790.15 171.15 803.72 171.15 Z" fill="#414141" stroke="#767677" stroke-width="1.17"/><path fill="#f0644f" d="M780.91 184.82 l-3.77 6.13 h2.83 l-1.41 4.71 l4.24 -6.6 h-2.83 z"/><g transform="translate(801.08 182.08) scale(0.66)"><path fill="none" stroke="#b4b5b8" stroke-width="2.100" stroke-linejoin="round" stroke-linecap="round" d="M4 3.500l15.500 6.200-6.600 2.600 7 7-2.200 2.200-7-7-2.600 6.600z"/></g><circle cx="827.85" cy="190" r="3.39" fill="#c3c5cc"/><text x="809" y="218.49" text-anchor="middle" font-family='"Liberation Sans", sans-serif' font-size="6.35" font-weight="bold" fill="#ededed">When clicking 'Execute</text><text x="809" y="225.79" text-anchor="middle" font-family='"Liberation Sans", sans-serif' font-size="6.35" font-weight="bold" fill="#ededed">workflow'</text><rect x="866.65" y="120.35" width="37.7" height="37.7" rx="3.2" fill="#414141" stroke="#767677" stroke-width="1.17"/><g transform="translate(876.79 130.49) scale(0.73)"><g fill="none" stroke="#f4715f" stroke-width="2.4" stroke-linejoin="round"><rect x="2.5" y="3.5" width="19" height="17" rx="2.6"/><path d="M12 3.5v17M2.500 9.200h19M2.500 14.800h19"/></g></g><path fill="#c3c5cc" d="M861.28 136.37 l4.24 2.83 l-4.24 2.83 z"/><rect x="865.38" y="135.67" width="2.54" height="7.07" fill="#c3c5cc"/><circle cx="904.35" cy="139.2" r="3.39" fill="#c3c5cc"/><text x="901.15" y="128.83" text-anchor="end" font-family='"Liberation Sans", sans-serif' font-size="6.79" font-weight="bold" fill="#e6e6e6">▢</text><text x="885.5" y="167.69" text-anchor="middle" font-family='"Liberation Sans", sans-serif' font-size="6.35" font-weight="bold" fill="#ededed">Удаляем родителей</text><rect x="936.65" y="120.35" width="37.7" height="37.7" rx="3.2" fill="#414141" stroke="#767677" stroke-width="1.17"/><g transform="translate(946.79 130.49) scale(0.73)"><g fill="none" stroke="#f4715f" stroke-width="2.4" stroke-linejoin="round"><rect x="2.5" y="3.5" width="19" height="17" rx="2.6"/><path d="M12 3.5v17M2.500 9.200h19M2.500 14.800h19"/></g></g><path fill="#c3c5cc" d="M931.28 136.37 l4.24 2.83 l-4.24 2.83 z"/><rect x="935.38" y="135.67" width="2.54" height="7.07" fill="#c3c5cc"/><circle cx="974.35" cy="139.2" r="3.39" fill="#c3c5cc"/><text x="971.15" y="128.83" text-anchor="end" font-family='"Liberation Sans", sans-serif' font-size="6.79" font-weight="bold" fill="#e6e6e6">▢1</text><text x="955.5" y="167.69" text-anchor="middle" font-family='"Liberation Sans", sans-serif' font-size="6.35" font-weight="bold" fill="#ededed">Удаляем расписание</text><rect x="1013.15" y="120.35" width="37.7" height="37.7" rx="3.2" fill="#414141" stroke="#767677" stroke-width="1.17"/><g transform="translate(1023.29 130.49) scale(0.73)"><g fill="none" stroke="#f4715f" stroke-width="2.4" stroke-linejoin="round"><rect x="2.5" y="3.5" width="19" height="17" rx="2.6"/><path d="M12 3.5v17M2.500 9.200h19M2.500 14.800h19"/></g></g><path fill="#c3c5cc" d="M1007.78 136.37 l4.24 2.83 l-4.24 2.83 z"/><rect x="1011.88" y="135.67" width="2.54" height="7.07" fill="#c3c5cc"/><circle cx="1050.85" cy="139.2" r="3.39" fill="#c3c5cc"/><text x="1047.65" y="128.83" text-anchor="end" font-family='"Liberation Sans", sans-serif' font-size="6.79" font-weight="bold" fill="#e6e6e6">▢1</text><text x="1032" y="167.69" text-anchor="middle" font-family='"Liberation Sans", sans-serif' font-size="6.35" font-weight="bold" fill="#ededed">Детей</text><rect x="1089.65" y="120.35" width="37.7" height="37.7" rx="3.2" fill="#414141" stroke="#767677" stroke-width="1.17"/><g transform="translate(1099.79 130.49) scale(0.73)"><g fill="none" stroke="#f4715f" stroke-width="2.4" stroke-linejoin="round"><rect x="2.5" y="3.5" width="19" height="17" rx="2.6"/><path d="M12 3.5v17M2.500 9.200h19M2.500 14.800h19"/></g></g><path fill="#c3c5cc" d="M1084.28 136.37 l4.24 2.83 l-4.24 2.83 z"/><rect x="1088.38" y="135.67" width="2.54" height="7.07" fill="#c3c5cc"/><circle cx="1127.35" cy="139.2" r="3.39" fill="#c3c5cc"/><text x="1124.15" y="128.83" text-anchor="end" font-family='"Liberation Sans", sans-serif' font-size="6.79" font-weight="bold" fill="#e6e6e6">▢1</text><text x="1108.5" y="167.69" text-anchor="middle" font-family='"Liberation Sans", sans-serif' font-size="6.35" font-weight="bold" fill="#ededed">Концерты</text><rect x="1178.95" y="120.35" width="37.7" height="37.7" rx="3.2" fill="#414141" stroke="#767677" stroke-width="1.17"/><g transform="translate(1188.62 130.02) scale(0.77)"><path fill="#25b358" d="M6 1.500h8.500L20 7v14a1.500 1.500 0 0 1-1.500 1.500h-12.500A1.500 1.500 0 0 1 4.500 21V3A1.500 1.500 0 0 1 6 1.500z"/><path fill="#8fe0ad" d="M14.500 1.500 20 7h-4.500a1 1 0 0 1-1-1z"/><path fill="#fff" d="M8 12h8.500v6.500H8zm1.300 1.300v1.300h2.300v-1.300zm3.600 0v1.300h2.300v-1.300zm-3.600 2.600v1.300h2.300v-1.300zm3.600 0v1.300h2.300v-1.300z" fill-rule="evenodd"/></g><path fill="#c3c5cc" d="M1173.58 136.37 l4.24 2.83 l-4.24 2.83 z"/><rect x="1177.68" y="135.67" width="2.54" height="7.07" fill="#c3c5cc"/><circle cx="1216.65" cy="139.2" r="3.39" fill="#c3c5cc"/><text x="1213.45" y="128.83" text-anchor="end" font-family='"Liberation Sans", sans-serif' font-size="6.79" font-weight="bold" fill="#e6e6e6">1</text><text x="1197.8" y="167.69" text-anchor="middle" font-family='"Liberation Sans", sans-serif' font-size="6.35" font-weight="bold" fill="#ededed">Данные из ОМТ</text><text x="1197.8" y="175.75" text-anchor="middle" font-family='"Liberation Sans", sans-serif' font-size="5.52" fill="#8a8b8f">read: sheet</text><rect x="1248.95" y="120.35" width="37.7" height="37.7" rx="3.2" fill="#414141" stroke="#767677" stroke-width="1.17"/><g transform="translate(1259.88 131.28) scale(0.66)"><text x="14.700" y="17.800" text-anchor="middle" font-family=""Liberation Sans", sans-serif" font-size="27.5" fill="#f5a02a" letter-spacing="5.4">{}</text></g><path fill="#c3c5cc" d="M1243.58 136.37 l4.24 2.83 l-4.24 2.83 z"/><rect x="1247.68" y="135.67" width="2.54" height="7.07" fill="#c3c5cc"/><circle cx="1286.65" cy="139.2" r="3.39" fill="#c3c5cc"/><text x="1267.8" y="167.69" text-anchor="middle" font-family='"Liberation Sans", sans-serif' font-size="6.35" font-weight="bold" fill="#ededed">XLStoJSON</text><rect x="1319.15" y="120.35" width="37.7" height="37.7" rx="3.2" fill="#414141" stroke="#767677" stroke-width="1.17"/><g transform="translate(1329.29 130.49) scale(0.73)"><g fill="none" stroke="#f4715f" stroke-width="2.4" stroke-linejoin="round"><rect x="2.5" y="3.5" width="19" height="17" rx="2.6"/><path d="M12 3.5v17M2.500 9.200h19M2.500 14.800h19"/></g></g><path fill="#c3c5cc" d="M1313.78 136.37 l4.24 2.83 l-4.24 2.83 z"/><rect x="1317.88" y="135.67" width="2.54" height="7.07" fill="#c3c5cc"/><circle cx="1356.85" cy="139.2" r="3.39" fill="#c3c5cc"/><text x="1338" y="167.69" text-anchor="middle" font-family='"Liberation Sans", sans-serif' font-size="6.35" font-weight="bold" fill="#ededed">Родители</text><rect x="1395.65" y="120.35" width="37.7" height="37.7" rx="3.2" fill="#414141" stroke="#767677" stroke-width="1.17"/><g transform="translate(1406.58 131.28) scale(0.66)"><text x="14.700" y="17.800" text-anchor="middle" font-family=""Liberation Sans", sans-serif" font-size="27.5" fill="#f5a02a" letter-spacing="5.4">{}</text></g><path fill="#c3c5cc" d="M1390.28 136.37 l4.24 2.83 l-4.24 2.83 z"/><rect x="1394.38" y="135.67" width="2.54" height="7.07" fill="#c3c5cc"/><circle cx="1433.35" cy="139.2" r="3.39" fill="#c3c5cc"/><text x="1430.15" y="128.83" text-anchor="end" font-family='"Liberation Sans", sans-serif' font-size="6.79" font-weight="bold" fill="#e6e6e6">▢1</text><text x="1414.5" y="167.69" text-anchor="middle" font-family='"Liberation Sans", sans-serif' font-size="6.35" font-weight="bold" fill="#ededed">ДетиJS</text><rect x="1478.65" y="120.35" width="37.7" height="37.7" rx="3.2" fill="#414141" stroke="#767677" stroke-width="1.17"/><g transform="translate(1488.79 130.49) scale(0.73)"><g fill="none" stroke="#f4715f" stroke-width="2.4" stroke-linejoin="round"><rect x="2.5" y="3.5" width="19" height="17" rx="2.6"/><path d="M12 3.5v17M2.500 9.200h19M2.500 14.800h19"/></g></g><path fill="#c3c5cc" d="M1473.28 136.37 l4.24 2.83 l-4.24 2.83 z"/><rect x="1477.38" y="135.67" width="2.54" height="7.07" fill="#c3c5cc"/><circle cx="1516.35" cy="139.2" r="3.39" fill="#c3c5cc"/><text x="1497.5" y="167.69" text-anchor="middle" font-family='"Liberation Sans", sans-serif' font-size="6.35" font-weight="bold" fill="#ededed">Дети</text><rect x="1178.95" y="228.55" width="37.7" height="37.7" rx="3.2" fill="#414141" stroke="#767677" stroke-width="1.17"/><g transform="translate(1188.62 238.22) scale(0.77)"><path fill="#25b358" d="M6 1.500h8.500L20 7v14a1.500 1.500 0 0 1-1.500 1.500h-12.500A1.500 1.500 0 0 1 4.500 21V3A1.500 1.500 0 0 1 6 1.500z"/><path fill="#8fe0ad" d="M14.500 1.500 20 7h-4.500a1 1 0 0 1-1-1z"/><path fill="#fff" d="M8 12h8.500v6.500H8zm1.300 1.300v1.300h2.300v-1.300zm3.600 0v1.300h2.300v-1.300zm-3.600 2.600v1.300h2.300v-1.300zm3.600 0v1.300h2.300v-1.300z" fill-rule="evenodd"/></g><path fill="#c3c5cc" d="M1173.58 244.57 l4.24 2.83 l-4.24 2.83 z"/><rect x="1177.68" y="243.87" width="2.54" height="7.07" fill="#c3c5cc"/><circle cx="1216.65" cy="247.4" r="3.39" fill="#c3c5cc"/><text x="1213.45" y="237.03" text-anchor="end" font-family='"Liberation Sans", sans-serif' font-size="6.79" font-weight="bold" fill="#e6e6e6">1</text><text x="1197.8" y="275.89" text-anchor="middle" font-family='"Liberation Sans", sans-serif' font-size="6.35" font-weight="bold" fill="#ededed">Расписание</text><text x="1197.8" y="283.95" text-anchor="middle" font-family='"Liberation Sans", sans-serif' font-size="5.52" fill="#8a8b8f">read: sheet</text><rect x="1262.15" y="228.55" width="37.7" height="37.7" rx="3.2" fill="#414141" stroke="#767677" stroke-width="1.17"/><g transform="translate(1273.08 239.48) scale(0.66)"><text x="14.700" y="17.800" text-anchor="middle" font-family=""Liberation Sans", sans-serif" font-size="27.5" fill="#f5a02a" letter-spacing="5.4">{}</text></g><path fill="#c3c5cc" d="M1256.78 244.57 l4.24 2.83 l-4.24 2.83 z"/><rect x="1260.88" y="243.87" width="2.54" height="7.07" fill="#c3c5cc"/><circle cx="1299.85" cy="247.4" r="3.39" fill="#c3c5cc"/><text x="1281" y="275.89" text-anchor="middle" font-family='"Liberation Sans", sans-serif' font-size="6.35" font-weight="bold" fill="#ededed">Code in JavaScript</text><rect x="1344.65" y="228.55" width="37.7" height="37.7" rx="3.2" fill="#414141" stroke="#767677" stroke-width="1.17"/><g transform="translate(1354.79 238.69) scale(0.73)"><g fill="none" stroke="#f4715f" stroke-width="2.4" stroke-linejoin="round"><rect x="2.5" y="3.5" width="19" height="17" rx="2.6"/><path d="M12 3.5v17M2.500 9.200h19M2.500 14.800h19"/></g></g><path fill="#c3c5cc" d="M1339.28 244.57 l4.24 2.83 l-4.24 2.83 z"/><rect x="1343.38" y="243.87" width="2.54" height="7.07" fill="#c3c5cc"/><circle cx="1382.35" cy="247.4" r="3.39" fill="#c3c5cc"/><text x="1363.5" y="275.89" text-anchor="middle" font-family='"Liberation Sans", sans-serif' font-size="6.35" font-weight="bold" fill="#ededed">Новое расписание</text><rect x="1178.95" y="317.95" width="37.7" height="37.7" rx="3.2" fill="#414141" stroke="#767677" stroke-width="1.17"/><g transform="translate(1188.62 327.62) scale(0.77)"><path fill="#25b358" d="M6 1.500h8.500L20 7v14a1.500 1.500 0 0 1-1.500 1.500h-12.500A1.500 1.500 0 0 1 4.500 21V3A1.500 1.500 0 0 1 6 1.500z"/><path fill="#8fe0ad" d="M14.500 1.500 20 7h-4.500a1 1 0 0 1-1-1z"/><path fill="#fff" d="M8 12h8.500v6.500H8zm1.300 1.300v1.300h2.300v-1.300zm3.600 0v1.300h2.300v-1.300zm-3.600 2.600v1.300h2.300v-1.300zm3.600 0v1.300h2.300v-1.300z" fill-rule="evenodd"/></g><path fill="#c3c5cc" d="M1173.58 333.97 l4.24 2.83 l-4.24 2.83 z"/><rect x="1177.68" y="333.27" width="2.54" height="7.07" fill="#c3c5cc"/><circle cx="1216.65" cy="336.8" r="3.39" fill="#c3c5cc"/><text x="1213.45" y="326.43" text-anchor="end" font-family='"Liberation Sans", sans-serif' font-size="6.79" font-weight="bold" fill="#e6e6e6">1</text><text x="1197.8" y="365.29" text-anchor="middle" font-family='"Liberation Sans", sans-serif' font-size="6.35" font-weight="bold" fill="#ededed">Концерты1</text><text x="1197.8" y="373.35" text-anchor="middle" font-family='"Liberation Sans", sans-serif' font-size="5.52" fill="#8a8b8f">read: sheet</text><rect x="1262.15" y="317.95" width="37.7" height="37.7" rx="3.2" fill="#414141" stroke="#767677" stroke-width="1.17"/><g transform="translate(1273.08 328.88) scale(0.66)"><text x="14.700" y="17.800" text-anchor="middle" font-family=""Liberation Sans", sans-serif" font-size="27.5" fill="#f5a02a" letter-spacing="5.4">{}</text></g><path fill="#c3c5cc" d="M1256.78 333.97 l4.24 2.83 l-4.24 2.83 z"/><rect x="1260.88" y="333.27" width="2.54" height="7.07" fill="#c3c5cc"/><circle cx="1299.85" cy="336.8" r="3.39" fill="#c3c5cc"/><text x="1281" y="365.29" text-anchor="middle" font-family='"Liberation Sans", sans-serif' font-size="6.35" font-weight="bold" fill="#ededed">Для каждого ребенка</text><rect x="1344.65" y="317.95" width="37.7" height="37.7" rx="3.2" fill="#414141" stroke="#767677" stroke-width="1.17"/><g transform="translate(1354.79 328.09) scale(0.73)"><g fill="none" stroke="#f4715f" stroke-width="2.4" stroke-linejoin="round"><rect x="2.5" y="3.5" width="19" height="17" rx="2.6"/><path d="M12 3.5v17M2.500 9.200h19M2.500 14.800h19"/></g></g><path fill="#c3c5cc" d="M1339.28 333.97 l4.24 2.83 l-4.24 2.83 z"/><rect x="1343.38" y="333.27" width="2.54" height="7.07" fill="#c3c5cc"/><circle cx="1382.35" cy="336.8" r="3.39" fill="#c3c5cc"/><text x="1363.5" y="365.29" text-anchor="middle" font-family='"Liberation Sans", sans-serif' font-size="6.35" font-weight="bold" fill="#ededed">Новые концерты</text><rect x="1178.95" y="400.55" width="37.7" height="37.7" rx="3.2" fill="#414141" stroke="#767677" stroke-width="1.17"/><g transform="translate(1189.09 410.69) scale(0.73)"><g fill="none" stroke="#f4715f" stroke-width="2.4" stroke-linejoin="round"><rect x="2.5" y="3.5" width="19" height="17" rx="2.6"/><path d="M12 3.5v17M2.500 9.200h19M2.500 14.800h19"/></g></g><path fill="#c3c5cc" d="M1173.58 416.57 l4.24 2.83 l-4.24 2.83 z"/><rect x="1177.68" y="415.87" width="2.54" height="7.07" fill="#c3c5cc"/><circle cx="1216.65" cy="419.4" r="3.39" fill="#c3c5cc"/><text x="1213.45" y="409.03" text-anchor="end" font-family='"Liberation Sans", sans-serif' font-size="6.79" font-weight="bold" fill="#e6e6e6">▢1</text><text x="1197.8" y="447.89" text-anchor="middle" font-family='"Liberation Sans", sans-serif' font-size="6.35" font-weight="bold" fill="#ededed">Удаляем костюмы</text><rect x="1262.15" y="400.55" width="37.7" height="37.7" rx="3.2" fill="#414141" stroke="#767677" stroke-width="1.17"/><g transform="translate(1271.82 410.22) scale(0.77)"><path fill="#25b358" d="M6 1.500h8.500L20 7v14a1.500 1.500 0 0 1-1.500 1.500h-12.500A1.500 1.500 0 0 1 4.500 21V3A1.500 1.500 0 0 1 6 1.500z"/><path fill="#8fe0ad" d="M14.500 1.500 20 7h-4.500a1 1 0 0 1-1-1z"/><path fill="#fff" d="M8 12h8.500v6.500H8zm1.300 1.300v1.300h2.300v-1.300zm3.600 0v1.300h2.300v-1.300zm-3.600 2.600v1.300h2.300v-1.300zm3.600 0v1.300h2.300v-1.300z" fill-rule="evenodd"/></g><path fill="#c3c5cc" d="M1256.78 416.57 l4.24 2.83 l-4.24 2.83 z"/><rect x="1260.88" y="415.87" width="2.54" height="7.07" fill="#c3c5cc"/><circle cx="1299.85" cy="419.4" r="3.39" fill="#c3c5cc"/><text x="1296.65" y="409.03" text-anchor="end" font-family='"Liberation Sans", sans-serif' font-size="6.79" font-weight="bold" fill="#e6e6e6">1</text><text x="1281" y="447.89" text-anchor="middle" font-family='"Liberation Sans", sans-serif' font-size="6.35" font-weight="bold" fill="#ededed">Костюмы</text><text x="1281" y="455.95" text-anchor="middle" font-family='"Liberation Sans", sans-serif' font-size="5.52" fill="#8a8b8f">read: sheet</text><rect x="1344.65" y="400.55" width="37.7" height="37.7" rx="3.2" fill="#414141" stroke="#767677" stroke-width="1.17"/><g transform="translate(1354.79 410.69) scale(0.73)"><g fill="none" stroke="#f4715f" stroke-width="2.4" stroke-linejoin="round"><rect x="2.5" y="3.5" width="19" height="17" rx="2.6"/><path d="M12 3.5v17M2.500 9.200h19M2.500 14.800h19"/></g></g><path fill="#c3c5cc" d="M1339.28 416.57 l4.24 2.83 l-4.24 2.83 z"/><rect x="1343.38" y="415.87" width="2.54" height="7.07" fill="#c3c5cc"/><circle cx="1382.35" cy="419.4" r="3.39" fill="#c3c5cc"/><text x="1363.5" y="447.89" text-anchor="middle" font-family='"Liberation Sans", sans-serif' font-size="6.35" font-weight="bold" fill="#ededed">Новые костюмы</text></svg><div class="btn" style="left:749.8px;top:5.1px"><span>Изменить</span></div><svg style="position:absolute;left:757.55px;top:14.15px;width:15.5px;height:15.5px" viewBox="0 0 20 20" ><g fill="none" stroke="#101418" stroke-width="1.400" stroke-linejoin="round" stroke-linecap="round"><path d="M10 16.500H4.500a2 2 0 0 1-2-2v-10a2 2 0 0 1 2-2h10a2 2 0 0 1 2 2V8"/><path d="M3.500 15l5-5 2.500 2.200"/><circle cx="12.500" cy="6.500" r="1.100"/><path d="M11.500 18l.6-2.600 5.600-5.600 2 2-5.600 5.600z" fill="#101418"/></g></svg><svg style="position:absolute;left:850.6px;top:12.1px;width:19px;height:19px" viewBox="0 0 20 20" ><g fill="none" stroke="#ececec" stroke-width="1.8" stroke-linecap="round" stroke-linejoin="round"><path d="M3.100 11.200A7 7 0 1 1 12 16.700"/><path d="M12 12.600V16.700H16.200"/><circle cx="10" cy="10" r="1.700"/></g></svg><svg style="position:absolute;left:891.35px;top:13.35px;width:16.5px;height:16.5px" viewBox="0 0 20 20" ><g fill="none" stroke="#ececec" stroke-width="1.8" stroke-linecap="round" stroke-linejoin="round"><path d="M3 5h14M8 5V3.500h4V5M4.500 5l1 11.500a1.500 1.500 0 0 0 1.500 1.300h6a1.500 1.500 0 0 0 1.500-1.300L15.500 5M8.500 8.500v6M11.500 8.500v6"/></g></svg><svg style="position:absolute;left:930.8px;top:13.1px;width:17px;height:17px" viewBox="0 0 20 20" ><g fill="none" stroke="#ececec" stroke-width="1.8" stroke-linecap="round" stroke-linejoin="round"><path d="M5.500 7V4.500a1.500 1.500 0 0 1 1.500-1.500h6a1.500 1.500 0 0 1 1.500 1.500V7"/><rect x="2.500" y="7" width="15" height="7.500" rx="2"/><rect x="5.500" y="11" width="9" height="6" rx="1" fill="#202020"/></g></svg><svg style="position:absolute;left:970.3px;top:12.6px;width:17px;height:17px" viewBox="0 0 20 20" ><g fill="none" stroke="#ececec" stroke-width="1.8" stroke-linecap="round" stroke-linejoin="round"><path d="M8 4H5.500a2 2 0 0 0-2 2v8.500a2 2 0 0 0 2 2H14a2 2 0 0 0 2-2V13"/><path d="M11.500 3.500l5 4.500-5 4.500V10c-3 0-4.500 1-5.500 3 0-4 2-6.500 5.500-7z"/></g></svg><div style="position:absolute;left:1009.95px;top:21.15px;width:2.5px;height:2.5px;border-radius:50%;background:#ececec"></div><div style="position:absolute;left:1016.85px;top:21.15px;width:2.5px;height:2.5px;border-radius:50%;background:#ececec"></div><div style="position:absolute;left:1023.75px;top:21.15px;width:2.5px;height:2.5px;border-radius:50%;background:#ececec"></div><div class="ttl" style="left:1043.8px;top:14.6px">Обновление БД.jpg</div><svg style="position:absolute;left:1293.25px;top:13.85px;width:15.5px;height:15.5px" viewBox="0 0 20 20" ><defs><linearGradient id="gph" x1="0" y1="0" x2="1" y2="1"><stop offset="0" stop-color="#2f6fe4"/><stop offset="1" stop-color="#1a4fc4"/></linearGradient></defs><rect x="2" y="2.500" width="16" height="15" rx="3" fill="url(#gph)"/><path d="M2 15l6.500-7 4 4.500 2-2 3.500 4v.5a3 3 0 0 1-3 3H5a3 3 0 0 1-3-3z" fill="#35c8f0"/><circle cx="13.500" cy="6" r="1.600" fill="#fff"/></svg><svg style="position:absolute;left:1332px;top:13.3px;width:16px;height:16px" viewBox="0 0 20 20" ><defs><linearGradient id="gcl" x1="0" y1="0" x2="0" y2="1"><stop offset="0" stop-color="#b455f2"/><stop offset="1" stop-color="#6a2ad8"/></linearGradient></defs><path d="M2.500 6.500l14-3 .8 3.200-14 2.300z" fill="#c77cf6"/><rect x="2.500" y="7.500" width="15" height="10" rx="1.500" fill="url(#gcl)"/><path d="M2.500 11h15v2.500h-15z" fill="#d9a0fa" opacity=".55"/></svg><svg style="position:absolute;left:1370.4px;top:11.9px;width:20px;height:20px" viewBox="0 0 20 20" ><path d="M6 15.500a4 4 0 0 1-.5-8 5.500 5.500 0 0 1 10-1 4.500 4.500 0 0 1 .5 9z" fill="#1f87e0"/><path d="M9 15.500l7-6a4.500 4.500 0 0 1 0 6z" fill="#0e63b8"/><path d="M4 3l12.500 14.500" stroke="#c8c8c8" stroke-width="1.500" stroke-linecap="round"/></svg><div style="position:absolute;left:1407.7px;top:7.6px;width:1px;height:28px;background:#333"></div><svg style="position:absolute;left:1427.5px;top:13.6px;width:15px;height:15px" viewBox="0 0 20 20" ><path d="M4 10h12" stroke="#ececec" stroke-width="1.700"/></svg><svg style="position:absolute;left:1470.7px;top:14.1px;width:15px;height:15px" viewBox="0 0 20 20" ><rect x="4.500" y="4.500" width="11" height="11" rx="1.500" fill="none" stroke="#ececec" stroke-width="1.700"/></svg><svg style="position:absolute;left:1513.8px;top:14.1px;width:15px;height:15px" viewBox="0 0 20 20" ><path d="M4 4l12 12M16 4L4 16" stroke="#ececec" stroke-width="1.600"/></svg><svg style="position:absolute;left:759.4px;top:481.3px;width:18px;height:18px" viewBox="0 0 20 20" ><g fill="none" stroke="#ececec" stroke-width="1.8" stroke-linecap="round" stroke-linejoin="round"><rect x="2.500" y="4" width="15" height="12" rx="2"/><path d="M2.500 12.500h15"/><path d="M5.500 14.300h1M9.500 14.300h1M13.500 14.300h1" stroke-width="1.200"/></g></svg><div style="position:absolute;left:795.2px;top:476.3px;width:1px;height:28px;background:#353535"></div><svg style="position:absolute;left:811.7px;top:481.3px;width:18px;height:18px" viewBox="0 0 20 20" ><g fill="none" stroke="#ececec" stroke-width="1.8" stroke-linecap="round" stroke-linejoin="round"><path d="M10 16.700 3.200 9.800a4.050 4.050 0 0 1 5.700-5.750L10 5.200l1.100-1.150a4.050 4.050 0 0 1 5.700 5.750z"/></g></svg><svg style="position:absolute;left:851px;top:481.3px;width:18px;height:18px" viewBox="0 0 20 20" ><g fill="none" stroke="#ececec" stroke-width="1.8" stroke-linecap="round" stroke-linejoin="round"><circle cx="10" cy="10" r="7.300"/><path d="M10 7v6" stroke-width="1.900"/></g></svg><svg style="position:absolute;left:889.1px;top:483.3px;width:15px;height:15px" viewBox="0 0 20 20" ><g fill="none" stroke="#7b7b7b" stroke-width="1.75" stroke-linecap="round" stroke-linejoin="round"><path d="M3 15.500V5.500a1.500 1.500 0 0 1 1.500-1.500h7M3 15.500h5"/><rect x="9" y="9" width="8" height="6.500" rx="1.200"/></g></svg><div class="tb" style="left:911.5px;top:483.1px">1208 x 616</div><svg style="position:absolute;left:980.9px;top:483.3px;width:15px;height:15px" viewBox="0 0 20 20" ><g fill="none" stroke="#7b7b7b" stroke-width="1.75" stroke-linecap="round" stroke-linejoin="round"><path d="M4.500 3.500h9l3 3v9a1.500 1.500 0 0 1-1.500 1.500h-10.500a1.500 1.500 0 0 1-1.500-1.500v-10.500a1.500 1.500 0 0 1 1.500-1.500z"/><path d="M6.500 3.500v4h6v-4M6 17v-5h8v5"/></g></svg><div class="tb" style="left:1003.2px;top:483.1px">165.1 КБ</div><svg style="position:absolute;left:1114.95px;top:481.55px;width:17.5px;height:17.5px" viewBox="0 0 20 20" ><g fill="none" stroke="#ececec" stroke-width="1.8" stroke-linecap="round" stroke-linejoin="round"><path d="M3 7.500V6a3 3 0 0 1 3-3h1.500M12.500 3H14a3 3 0 0 1 3 3v1.500M17 12.500V14a3 3 0 0 1-3 3h-1.500M7.500 17H6a3 3 0 0 1-3-3v-1.500"/><circle cx="10" cy="10" r="1.700"/></g></svg><svg style="position:absolute;left:1154.45px;top:481.55px;width:17.5px;height:17.5px" viewBox="0 0 20 20" ><g fill="none" stroke="#ececec" stroke-width="1.8" stroke-linecap="round" stroke-linejoin="round"><path d="M3 7.500V6a3 3 0 0 1 3-3h1.500M12.500 3H14a3 3 0 0 1 3 3v1.500M17 12.500V14a3 3 0 0 1-3 3h-1.500M7.500 17H6a3 3 0 0 1-3-3v-1.500"/><path d="M6.500 7.300h7M6.500 10h7M6.500 12.700h4.500" stroke-width="1.250"/></g></svg><svg style="position:absolute;left:1335.4px;top:480.8px;width:19px;height:19px" viewBox="0 0 20 20" ><rect x="2" y="4" width="16" height="12" rx="1" fill="#ececec"/><rect x="3.500" y="5.500" width="13" height="9" fill="#202020"/><ellipse cx="10" cy="10" rx="3.600" ry="3" fill="#ececec"/><path fill="#ececec" d="M3.500 5.500h3l-3 2.500zM16.500 5.500h-3l3 2.500zM3.500 14.500h3l-3-2.500zM16.500 14.500h-3l3-2.500z"/></svg><div class="zb" style="left:1364.8px;top:476px;width:80.7px"><span>73 %</span></div><svg style="position:absolute;left:1422px;top:484.8px;width:11px;height:11px" viewBox="0 0 20 20" ><g fill="none" stroke="#ececec" stroke-width="1.8" stroke-linecap="round" stroke-linejoin="round"><path d="M5 8l5 5 5-5"/></g></svg><div style="position:absolute;left:1456.5px;top:489.7px;width:2.6px;height:2.6px;border-radius:50%;background:#ececec"></div><div style="position:absolute;left:1463.7px;top:489.7px;width:2.6px;height:2.6px;border-radius:50%;background:#ececec"></div><div style="position:absolute;left:1470.9px;top:489.7px;width:2.6px;height:2.6px;border-radius:50%;background:#ececec"></div><div style="position:absolute;left:1491.3px;top:476.3px;width:1px;height:28px;background:#353535"></div><svg style="position:absolute;left:1508.9px;top:480.8px;width:19px;height:19px" viewBox="0 0 20 20" ><g fill="none" stroke="#ececec" stroke-width="1.8" stroke-linecap="round" stroke-linejoin="round"><path d="M3.500 16.500l13-13M11 3.500h5.500V9M9 16.500H3.500V11"/></g></svg><div class="abs" style="left:1543px;top:0;width:17px;height:454px;background:#000"></div></body></html>
